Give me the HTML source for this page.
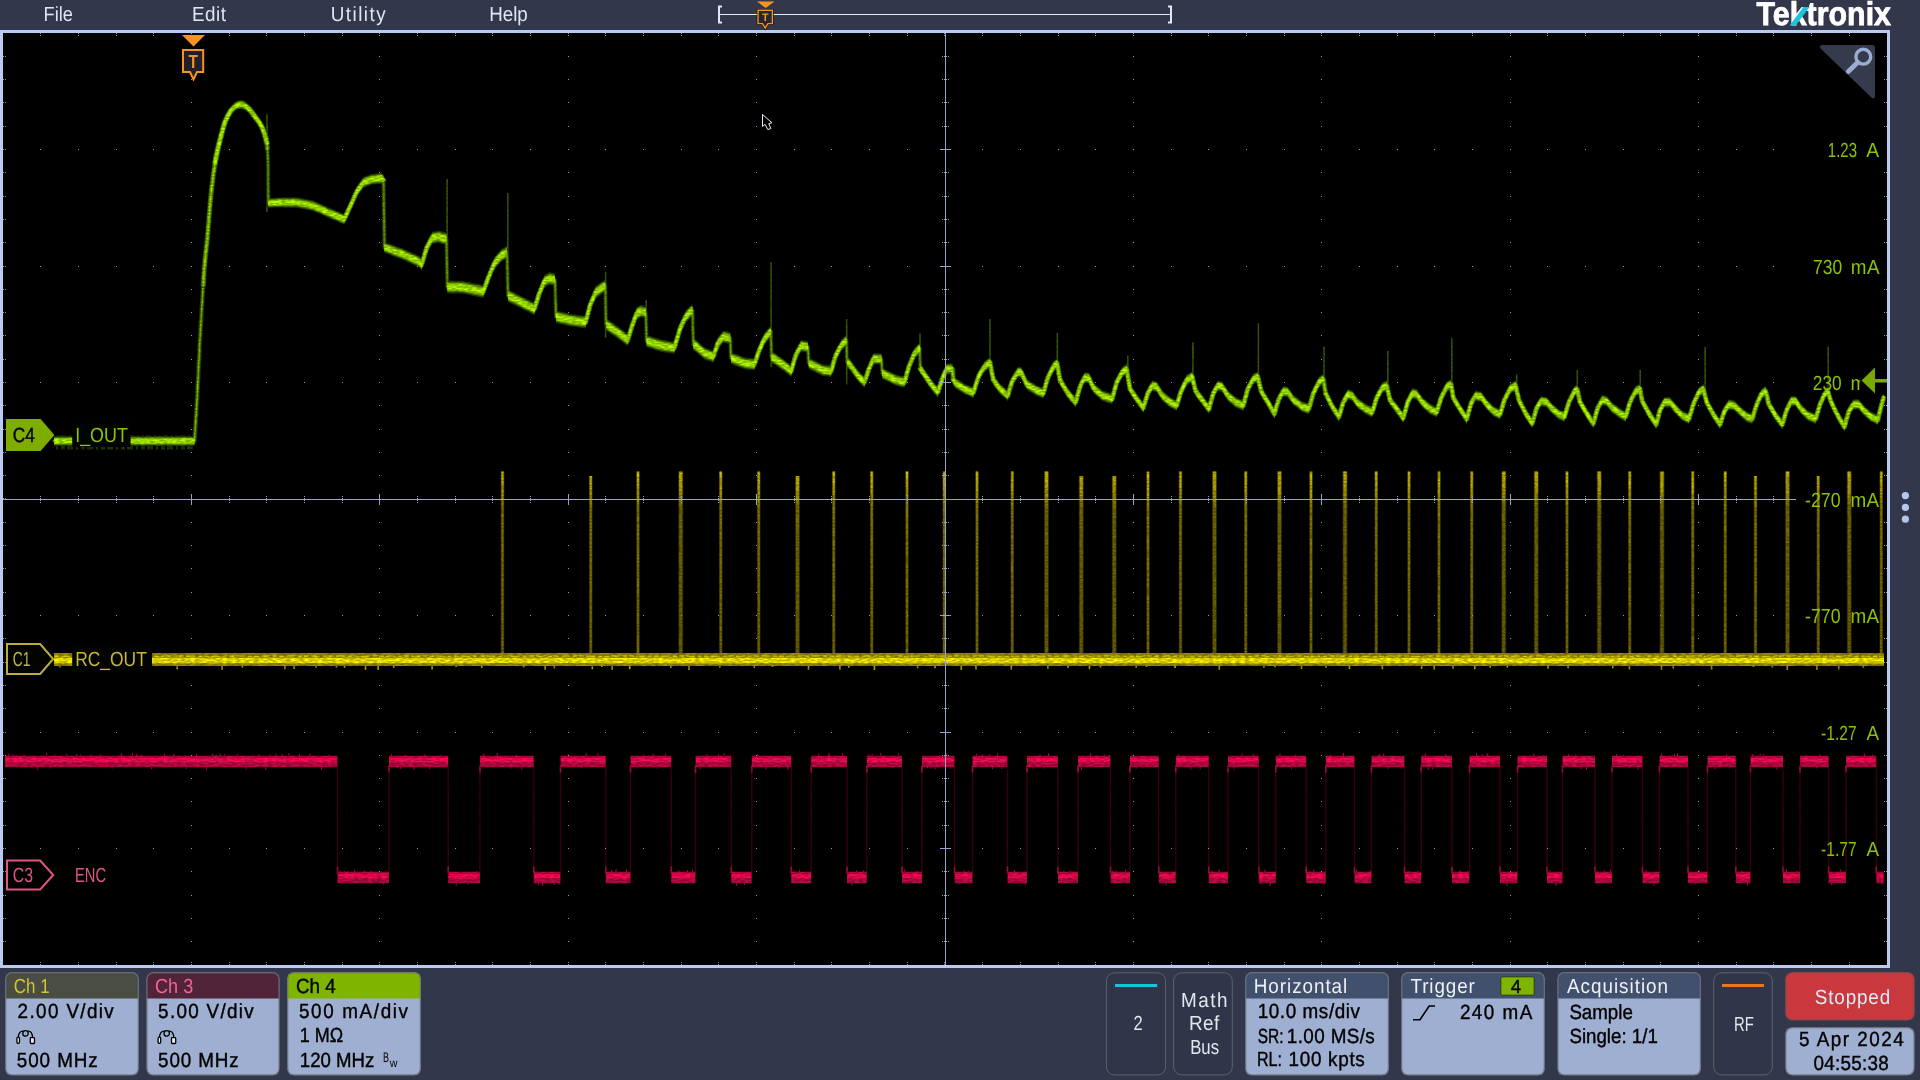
<!DOCTYPE html>
<html lang="en"><head><meta charset="utf-8"><title>Tektronix oscilloscope</title>
<style>html,body{margin:0;padding:0;background:#32374b;overflow:hidden}svg{display:block}svg{will-change:transform;filter:opacity(.9999)}</style>
</head><body>
<svg width="1920" height="1080" viewBox="0 0 1920 1080" font-family="'Liberation Sans', sans-serif" text-rendering="geometricPrecision">
<rect width="1920" height="1080" fill="#32374b"/>
<rect x="0" y="30" width="1890" height="938" fill="#b9cbf1"/>
<rect x="3" y="33" width="1884" height="932" fill="#000"/>
<filter id="nz" x="0" y="30" width="1890" height="940" filterUnits="userSpaceOnUse" color-interpolation-filters="sRGB"><feTurbulence type="fractalNoise" baseFrequency="0.22 0.6" numOctaves="1" seed="11" result="n"/><feColorMatrix in="n" type="matrix" values="0 0 0 0 1  0 0 0 0 1  0 0 0 0 1  3 0 0 0 -1" result="a"/><feComposite in="SourceGraphic" in2="a" operator="arithmetic" k1="0.32" k2="0.78" k3="0" k4="0"/></filter>
<g fill="none" stroke-linejoin="round" stroke-linecap="round" filter="url(#nz)">
<path d="M337.5 765.5V873.5M389.0 765.5V873.5M448.2 765.5V873.5M480.0 765.5V873.5M533.8 765.5V873.5M560.5 765.5V873.5M605.8 765.5V873.5M630.5 765.5V873.5M671.2 765.5V873.5M695.5 765.5V873.5M731.2 765.5V873.5M751.8 765.5V873.5M791.2 765.5V873.5M811.2 765.5V873.5M847.0 765.5V873.5M866.8 765.5V873.5M902.0 765.5V873.5M922.0 765.5V873.5M954.5 765.5V873.5M972.5 765.5V873.5M1007.5 765.5V873.5M1027.0 765.5V873.5M1058.0 765.5V873.5M1078.0 765.5V873.5M1110.5 765.5V873.5M1130.0 765.5V873.5M1158.8 765.5V873.5M1175.8 765.5V873.5M1208.8 765.5V873.5M1228.0 765.5V873.5M1258.8 765.5V873.5M1275.8 765.5V873.5M1306.2 765.5V873.5M1325.8 765.5V873.5M1354.5 765.5V873.5M1371.5 765.5V873.5M1404.5 765.5V873.5M1421.2 765.5V873.5M1452.0 765.5V873.5M1469.5 765.5V873.5M1500.0 765.5V873.5M1517.5 765.5V873.5M1547.0 765.5V873.5M1562.5 765.5V873.5M1595.0 765.5V873.5M1612.0 765.5V873.5M1642.5 765.5V873.5M1659.5 765.5V873.5M1688.0 765.5V873.5M1707.5 765.5V873.5M1735.8 765.5V873.5M1750.5 765.5V873.5M1783.0 765.5V873.5M1800.0 765.5V873.5M1828.6 765.5V873.5M1846.0 765.5V873.5M1876.3 765.5V873.5" stroke="#3a000e" stroke-width="1.4" stroke-linecap="butt"/>
<path d="M8.9 756.5v-2.8M12.7 756.5v-2.2M16.4 756.5v-1.6M24.1 756.5v-1.7M31.8 766.5v1.7M37.3 766.5v3.4M46.6 756.5v-3.5M50.1 766.5v2.1M54.7 756.5v-2.1M66.7 756.5v-2.7M76.7 756.5v-2.6M80.4 756.5v-1.9M90.9 756.5v-2.1M100.3 756.5v-2.1M112.1 766.5v2.0M121.4 756.5v-3.3M132.4 756.5v-3.5M136.7 756.5v-3.0M141.4 756.5v-1.6M151.7 766.5v2.6M164.4 756.5v-2.9M173.9 756.5v-2.4M186.2 766.5v2.4M196.5 756.5v-2.9M206.6 766.5v3.1M212.7 756.5v-2.8M216.0 756.5v-1.8M220.2 756.5v-3.0M224.7 756.5v-2.3M237.3 756.5v-2.4M246.3 766.5v3.1M258.8 756.5v-2.3M265.7 766.5v3.4M270.4 756.5v-2.0M276.0 756.5v-2.7M281.9 756.5v-2.3M288.9 756.5v-3.4M299.5 756.5v-2.7M310.0 756.5v-3.3M321.5 766.5v3.1M328.9 756.5v-1.7M339.9 872.5v-1.9M344.7 872.5v-1.6M347.7 872.5v-1.7M354.7 872.5v-3.2M364.4 872.5v-2.0M371.2 872.5v-1.7M383.6 882.5v2.4M391.5 756.5v-2.2M397.4 766.5v1.8M400.7 766.5v2.6M405.3 756.5v-1.6M414.1 766.5v3.2M424.8 756.5v-2.2M429.6 766.5v2.6M441.2 756.5v-1.9M456.2 882.5v3.1M468.2 882.5v2.0M476.9 872.5v-1.6M483.7 756.5v-2.9M497.2 756.5v-3.4M511.1 766.5v2.2M516.5 756.5v-1.9M521.7 766.5v3.3M538.6 882.5v3.1M542.6 882.5v3.3M554.2 882.5v2.5M559.1 882.5v2.2M568.3 756.5v-2.3M581.7 766.5v1.8M586.1 756.5v-3.3M598.0 756.5v-3.2M611.7 872.5v-2.6M616.1 872.5v-3.4M626.3 872.5v-3.4M637.7 766.5v1.9M643.5 756.5v-2.0M653.0 756.5v-2.3M657.4 766.5v2.2M665.4 756.5v-3.3M678.8 872.5v-2.6M687.5 872.5v-2.4M692.5 872.5v-3.1M700.3 766.5v2.6M706.9 756.5v-2.6M718.6 756.5v-2.6M724.3 756.5v-3.0M736.6 882.5v3.3M744.5 882.5v2.5M757.9 756.5v-2.6M766.2 766.5v2.9M778.8 766.5v2.0M788.0 766.5v3.2M794.0 872.5v-1.6M799.6 872.5v-2.8M818.6 756.5v-2.9M828.9 756.5v-3.3M842.5 756.5v-3.4M851.9 882.5v3.2M856.7 872.5v-2.5M863.4 872.5v-2.1M868.9 756.5v-2.4M872.1 756.5v-2.7M880.7 756.5v-3.5M892.4 766.5v1.7M898.3 756.5v-3.1M904.8 872.5v-3.3M916.8 872.5v-1.8M927.4 766.5v1.7M931.1 766.5v2.4M934.9 766.5v2.8M946.7 756.5v-3.2M950.4 766.5v2.4M959.8 882.5v2.0M964.2 872.5v-2.0M968.4 872.5v-1.6M976.4 756.5v-3.0M982.6 756.5v-1.9M989.4 756.5v-2.0M992.5 766.5v2.6M997.6 756.5v-3.4M1001.8 766.5v2.4M1014.5 872.5v-2.5M1025.1 882.5v2.2M1033.2 766.5v2.3M1040.1 756.5v-1.8M1043.8 766.5v2.0M1048.6 756.5v-3.2M1064.0 872.5v-2.0M1070.2 872.5v-1.8M1081.6 766.5v3.4M1090.6 756.5v-3.4M1097.0 756.5v-1.5M1104.2 756.5v-2.5M1109.4 756.5v-1.5M1113.0 872.5v-1.6M1116.3 872.5v-2.0M1125.7 872.5v-3.0M1136.3 766.5v2.3M1142.9 766.5v1.8M1153.8 766.5v1.6M1166.1 882.5v3.0M1178.6 756.5v-2.5M1190.8 766.5v3.2M1200.2 766.5v2.9M1212.1 872.5v-1.8M1219.1 872.5v-3.2M1233.8 766.5v2.9M1242.1 756.5v-3.1M1253.4 756.5v-2.6M1261.1 882.5v2.0M1265.0 872.5v-3.0M1270.2 882.5v3.5M1280.0 756.5v-2.9M1291.5 766.5v2.8M1295.3 756.5v-2.0M1310.1 872.5v-1.5M1313.7 872.5v-2.8M1324.4 882.5v2.1M1330.5 756.5v-1.7M1343.4 756.5v-3.5M1356.6 872.5v-3.1M1370.3 872.5v-2.0M1379.2 756.5v-2.7M1383.7 756.5v-3.4M1388.2 766.5v2.5M1400.9 766.5v2.0M1409.4 872.5v-1.5M1417.8 872.5v-2.1M1425.3 756.5v-3.2M1428.3 766.5v3.2M1432.7 766.5v2.9M1445.6 756.5v-2.2M1460.0 872.5v-2.2M1467.7 872.5v-1.6M1476.5 756.5v-3.4M1482.3 756.5v-2.5M1487.3 756.5v-3.4M1506.9 882.5v3.3M1522.8 766.5v1.6M1533.9 756.5v-3.0M1543.9 756.5v-1.6M1549.8 872.5v-2.2M1556.0 882.5v3.5M1568.4 756.5v-2.6M1575.8 756.5v-1.8M1581.1 766.5v2.5M1586.5 766.5v3.5M1597.8 872.5v-1.7M1604.6 872.5v-2.0M1610.4 872.5v-3.3M1616.5 756.5v-2.5M1623.6 756.5v-1.6M1629.7 766.5v1.8M1638.2 766.5v3.2M1646.1 872.5v-2.3M1654.0 882.5v3.2M1661.6 756.5v-2.9M1674.5 756.5v-2.7M1677.5 756.5v-3.4M1695.1 882.5v2.0M1699.3 872.5v-2.5M1715.1 766.5v2.8M1726.6 756.5v-2.6M1730.0 766.5v2.0M1741.6 872.5v-1.8M1747.4 882.5v2.9M1752.9 756.5v-2.7M1760.2 756.5v-2.7M1763.3 756.5v-2.4M1776.9 766.5v3.3M1786.4 872.5v-3.4M1797.2 872.5v-1.5M1806.0 756.5v-2.0M1816.4 766.5v2.0M1819.8 756.5v-2.3M1831.8 882.5v3.0M1840.3 872.5v-3.4M1852.9 756.5v-1.9M1864.3 756.5v-3.4M1872.7 756.5v-1.9M1882.3 882.5v1.8" stroke="#b00a40" stroke-width="1" stroke-linecap="butt"/>
<path d="M5.0 761.5H337.5M337.5 877.5H389.0M389.0 761.5H448.2M448.2 877.5H480.0M480.0 761.5H533.8M533.8 877.5H560.5M560.5 761.5H605.8M605.8 877.5H630.5M630.5 761.5H671.2M671.2 877.5H695.5M695.5 761.5H731.2M731.2 877.5H751.8M751.8 761.5H791.2M791.2 877.5H811.2M811.2 761.5H847.0M847.0 877.5H866.8M866.8 761.5H902.0M902.0 877.5H922.0M922.0 761.5H954.5M954.5 877.5H972.5M972.5 761.5H1007.5M1007.5 877.5H1027.0M1027.0 761.5H1058.0M1058.0 877.5H1078.0M1078.0 761.5H1110.5M1110.5 877.5H1130.0M1130.0 761.5H1158.8M1158.8 877.5H1175.8M1175.8 761.5H1208.8M1208.8 877.5H1228.0M1228.0 761.5H1258.8M1258.8 877.5H1275.8M1275.8 761.5H1306.2M1306.2 877.5H1325.8M1325.8 761.5H1354.5M1354.5 877.5H1371.5M1371.5 761.5H1404.5M1404.5 877.5H1421.2M1421.2 761.5H1452.0M1452.0 877.5H1469.5M1469.5 761.5H1500.0M1500.0 877.5H1517.5M1517.5 761.5H1547.0M1547.0 877.5H1562.5M1562.5 761.5H1595.0M1595.0 877.5H1612.0M1612.0 761.5H1642.5M1642.5 877.5H1659.5M1659.5 761.5H1688.0M1688.0 877.5H1707.5M1707.5 761.5H1735.8M1735.8 877.5H1750.5M1750.5 761.5H1783.0M1783.0 877.5H1800.0M1800.0 761.5H1828.6M1828.6 877.5H1846.0M1846.0 761.5H1876.3M1876.3 877.5H1883.7" stroke="#b0093f" stroke-width="11.5" stroke-linecap="butt"/>
<path d="M5.5 760.1H337.0M338.0 876.1H388.5M389.5 760.1H447.8M448.8 876.1H479.5M480.5 760.1H533.2M534.2 876.1H560.0M561.0 760.1H605.2M606.2 876.1H630.0M631.0 760.1H670.8M671.8 876.1H695.0M696.0 760.1H730.8M731.8 876.1H751.2M752.2 760.1H790.8M791.8 876.1H810.8M811.8 760.1H846.5M847.5 876.1H866.2M867.2 760.1H901.5M902.5 876.1H921.5M922.5 760.1H954.0M955.0 876.1H972.0M973.0 760.1H1007.0M1008.0 876.1H1026.5M1027.5 760.1H1057.5M1058.5 876.1H1077.5M1078.5 760.1H1110.0M1111.0 876.1H1129.5M1130.5 760.1H1158.2M1159.2 876.1H1175.2M1176.2 760.1H1208.2M1209.2 876.1H1227.5M1228.5 760.1H1258.2M1259.2 876.1H1275.2M1276.2 760.1H1305.8M1306.8 876.1H1325.2M1326.2 760.1H1354.0M1355.0 876.1H1371.0M1372.0 760.1H1404.0M1405.0 876.1H1420.8M1421.8 760.1H1451.5M1452.5 876.1H1469.0M1470.0 760.1H1499.5M1500.5 876.1H1517.0M1518.0 760.1H1546.5M1547.5 876.1H1562.0M1563.0 760.1H1594.5M1595.5 876.1H1611.5M1612.5 760.1H1642.0M1643.0 876.1H1659.0M1660.0 760.1H1687.5M1688.5 876.1H1707.0M1708.0 760.1H1735.2M1736.2 876.1H1750.0M1751.0 760.1H1782.5M1783.5 876.1H1799.5M1800.5 760.1H1828.1M1829.1 876.1H1845.5M1846.5 760.1H1875.8M1876.8 876.1H1883.2" stroke="#f2064f" stroke-width="4.4" stroke-linecap="butt"/>
<path d="M337.5 866.5V873.5M389.0 765.5V772.5M448.2 866.5V873.5M480.0 765.5V772.5M533.8 866.5V873.5M560.5 765.5V772.5M605.8 866.5V873.5M630.5 765.5V772.5M671.2 866.5V873.5M695.5 765.5V772.5M731.2 866.5V873.5M751.8 765.5V772.5M791.2 866.5V873.5M811.2 765.5V772.5M847.0 866.5V873.5M866.8 765.5V772.5M902.0 866.5V873.5M922.0 765.5V772.5M954.5 866.5V873.5M972.5 765.5V772.5M1007.5 866.5V873.5M1027.0 765.5V772.5M1058.0 866.5V873.5M1078.0 765.5V772.5M1110.5 866.5V873.5M1130.0 765.5V772.5M1158.8 866.5V873.5M1175.8 765.5V772.5M1208.8 866.5V873.5M1228.0 765.5V772.5M1258.8 866.5V873.5M1275.8 765.5V772.5M1306.2 866.5V873.5M1325.8 765.5V772.5M1354.5 866.5V873.5M1371.5 765.5V772.5M1404.5 866.5V873.5M1421.2 765.5V772.5M1452.0 866.5V873.5M1469.5 765.5V772.5M1500.0 866.5V873.5M1517.5 765.5V772.5M1547.0 866.5V873.5M1562.5 765.5V772.5M1595.0 866.5V873.5M1612.0 765.5V772.5M1642.5 866.5V873.5M1659.5 765.5V772.5M1688.0 866.5V873.5M1707.5 765.5V772.5M1735.8 866.5V873.5M1750.5 765.5V772.5M1783.0 866.5V873.5M1800.0 765.5V772.5M1828.6 866.5V873.5M1846.0 765.5V772.5M1876.3 866.5V873.5" stroke="#a00838" stroke-width="1.6" stroke-linecap="butt"/>
<linearGradient id="yg" gradientUnits="userSpaceOnUse" x1="0" y1="471" x2="0" y2="655"><stop offset="0" stop-color="#c4b200"/><stop offset="0.08" stop-color="#b5a300"/><stop offset="0.2" stop-color="#7e7100"/><stop offset="1" stop-color="#6c6100"/></linearGradient>
<linearGradient id="yh" gradientUnits="userSpaceOnUse" x1="0" y1="471" x2="0" y2="655"><stop offset="0" stop-color="#4a4300"/><stop offset="0.2" stop-color="#302b00"/><stop offset="1" stop-color="#2a2600"/></linearGradient>
<linearGradient id="yw" gradientUnits="userSpaceOnUse" x1="0" y1="471" x2="0" y2="655"><stop offset="0" stop-color="#bfae00"/><stop offset="0.1" stop-color="#a89800"/><stop offset="0.2" stop-color="#6e6300"/><stop offset="1" stop-color="#625800"/></linearGradient>
<path d="M502.50 471.5V654M590.75 476.0V654M638.00 471.5V654M720.75 471.5V654M758.75 471.5V654M833.75 471.5V654M871.75 471.5V654M907.00 471.5V654M944.25 471.5V654M977.00 471.5V654M1012.25 471.5V654M1148.00 471.5V654M1180.50 471.5V654M1245.75 471.5V654M1311.00 471.5V654M1376.25 471.5V654M1409.00 471.5V654M1439.00 471.5V654M1471.75 471.5V654M1567.00 471.5V654M1629.75 471.5V654M1692.75 471.5V654M1725.25 471.5V654M1755.50 476.0V654M1818.25 476.0V654M1881.25 471.5V654" stroke="url(#yh)" stroke-width="3.6" stroke-linecap="butt"/>
<path d="M502.50 471.5V654M590.75 476.0V654M638.00 471.5V654M720.75 471.5V654M758.75 471.5V654M833.75 471.5V654M871.75 471.5V654M907.00 471.5V654M944.25 471.5V654M977.00 471.5V654M1012.25 471.5V654M1148.00 471.5V654M1180.50 471.5V654M1245.75 471.5V654M1311.00 471.5V654M1376.25 471.5V654M1409.00 471.5V654M1439.00 471.5V654M1471.75 471.5V654M1567.00 471.5V654M1629.75 471.5V654M1692.75 471.5V654M1725.25 471.5V654M1755.50 476.0V654M1818.25 476.0V654M1881.25 471.5V654" stroke="url(#yg)" stroke-width="2.2" stroke-linecap="butt"/>
<path d="M680.75 471.5V654M797.50 476.0V654M1046.50 471.5V654M1081.25 476.0V654M1114.25 476.0V654M1214.50 471.5V654M1279.50 471.5V654M1345.00 471.5V654M1503.75 471.5V654M1536.25 471.5V654M1599.25 471.5V654M1662.00 471.5V654M1787.50 471.5V654M1849.25 471.5V654" stroke="url(#yh)" stroke-width="4.8" stroke-linecap="butt"/>
<path d="M680.75 471.5V654M797.50 476.0V654M1046.50 471.5V654M1081.25 476.0V654M1114.25 476.0V654M1214.50 471.5V654M1279.50 471.5V654M1345.00 471.5V654M1503.75 471.5V654M1536.25 471.5V654M1599.25 471.5V654M1662.00 471.5V654M1787.50 471.5V654M1849.25 471.5V654" stroke="url(#yw)" stroke-width="3.2" stroke-linecap="butt"/>
<path d="M60.0 665v2.6M104.0 665v2.4M114.0 665v2.2M136.5 665v4.7M177.2 665v4.2M222.1 665v4.8M242.3 665v2.6M284.9 665v4.2M294.1 665v4.0M316.1 665v3.1M336.4 665v2.5M344.5 665v2.8M365.5 665v4.9M378.1 665v4.9M393.7 665v3.1M432.1 665v4.5M456.1 665v2.1M481.7 665v3.1M523.7 665v2.6M545.2 665v4.7M554.3 665v3.2M592.3 665v4.3M601.8 665v2.1M612.1 665v4.8M629.7 665v4.2M670.9 665v3.0M689.0 665v4.9M719.8 665v2.8M754.3 665v2.9M772.5 665v2.0M808.5 665v4.7M839.9 665v4.8M848.8 665v2.7M874.4 665v4.9M917.7 665v3.2M935.0 665v3.3M961.3 665v4.8M976.0 665v4.4M1011.3 665v4.5M1047.9 665v3.8M1068.1 665v3.0M1089.5 665v4.3M1100.4 665v2.6M1136.2 665v2.7M1146.6 665v2.1M1175.1 665v3.0M1219.3 665v4.7M1263.9 665v2.8M1275.0 665v2.3M1301.5 665v4.1M1326.0 665v2.7M1349.4 665v3.9M1382.4 665v4.2M1421.7 665v4.0M1434.2 665v4.5M1453.0 665v3.7M1474.8 665v4.2M1490.2 665v2.7M1507.3 665v2.5M1548.0 665v3.7M1568.1 665v3.2M1612.8 665v3.5M1629.4 665v4.4M1661.5 665v5.0M1673.3 665v3.4M1711.6 665v4.5M1753.5 665v2.1M1772.3 665v2.4M1787.3 665v4.9M1816.9 665v4.8M1838.7 665v4.6M1863.3 665v2.8" stroke="#a89a00" stroke-width="1.6" stroke-linecap="butt"/>
<path d="M54 659.5H1884" stroke="#8f8400" stroke-width="13" stroke-linecap="butt"/>
<path d="M54 660.5H1884" stroke="#ece000" stroke-width="5.6" stroke-linecap="butt"/>
<path d="M54 656.3H1884" stroke="#c9bc00" stroke-width="1.5" stroke-dasharray="5 2 9 3 4 2" stroke-linecap="butt"/>
<path d="M267.0 114.0V212.0M447.1 178.9V290.0M507.8 193.3V298.0M605.6 272.0V337.8M646.2 300.0V343.0M771.1 262.2V366.7M846.7 318.9V384.4M920.0 333.3V372.0M990.0 318.9V366.0M1057.3 332.9V368.0M1127.8 355.6V372.0M1192.9 342.2V380.0M1258.4 323.3V380.0M1324.0 346.7V382.0M1387.8 351.1V388.0M1451.8 337.8V388.0M1516.7 374.4V390.0M1577.3 370.0V392.0M1640.2 370.0V392.0M1705.1 346.7V392.0M1828.2 346.7V394.0" stroke="#3a5800" stroke-width="1.5" stroke-linecap="butt"/>
<path d="M56 436.6H193" stroke="#2f4c00" stroke-width="2.4" stroke-dasharray="3 2 5 3 2 2" stroke-linecap="butt"/>
<path d="M56 447.6H193" stroke="#1f3200" stroke-width="3.6" stroke-dasharray="2 3 4 2 6 3" stroke-linecap="butt"/>
<path d="M54.0 441.0 193.0 441.0 194.5 441.0 197.0 400.0 197.7 386.6 198.4 371.8 199.2 356.1 200.0 340.0 201.0 322.3 202.1 303.3 203.2 285.2 204.2 270.0 205.1 259.3 205.9 251.5 206.7 244.6 207.5 236.7 208.3 227.0 209.1 216.7 209.9 206.4 210.8 196.7 211.8 187.6 212.8 179.0 213.9 170.8 215.0 163.3 216.2 156.7 217.4 150.8 218.7 145.4 220.0 140.0 221.4 134.6 222.7 129.3 224.2 124.4 225.8 120.0 227.6 116.2 229.4 113.0 231.4 110.2 233.3 108.0 235.2 106.4 237.1 105.3 238.9 104.7 240.8 104.5 242.7 104.8 244.6 105.7 246.5 106.9 248.3 108.3 250.0 110.0 251.7 112.1 253.3 114.4 255.0 116.7 256.7 119.0 258.5 121.5 260.2 124.1 261.7 126.7 263.0 129.5 264.1 132.5 265.0 135.5 265.8 138.3 266.4 140.9 266.9 143.3 267.2 145.7 267.5 148.3 268.0 160.0 268.3 203.0 280.0 202.5 296.7 202.5 313.3 205.8 330.0 213.3 344.2 219.2 350.0 206.7 356.7 191.7 363.3 182.5 371.7 179.2 381.7 178.3 383.5 180.0 384.5 247.8 385.6 247.8 403.3 254.4 420.0 262.2 421.5 265.0 426.7 247.8 432.2 237.8 438.9 236.7 446.5 238.9 447.3 287.0 462.0 287.2 483.3 291.5 487.8 278.9 494.4 263.3 501.1 255.6 507.0 252.2 508.0 295.6 523.3 303.3 534.4 308.9 538.9 294.4 544.4 281.1 550.0 278.4 555.0 280.0 556.0 316.7 570.0 320.0 585.6 322.2 590.0 305.6 595.6 292.2 603.3 286.7 605.3 286.0 606.0 324.4 618.9 333.3 627.8 340.0 632.2 325.6 636.7 313.3 641.1 311.1 645.8 312.2 646.6 341.1 661.1 345.6 674.4 347.8 680.0 328.9 685.6 316.7 691.1 311.1 692.5 310.5 693.3 344.4 695.6 345.6 704.4 353.3 713.3 356.7 717.8 343.3 723.3 336.7 728.9 337.8 730.3 338.0 731.0 357.8 733.3 358.9 744.4 363.3 754.4 364.4 758.9 351.1 764.4 338.9 770.0 332.2 770.8 331.5 771.5 357.8 773.3 357.8 784.4 365.6 791.1 371.1 795.6 355.6 801.1 345.6 806.7 346.7 808.0 347.0 808.8 363.3 811.1 364.4 822.2 370.0 831.1 371.1 835.6 355.6 841.1 345.6 845.6 341.1 846.4 340.5 847.0 362.2 848.9 363.3 857.8 375.6 864.4 382.2 868.9 368.9 873.3 358.9 880.0 358.9 881.4 359.0 882.2 373.3 884.4 374.4 895.6 380.0 904.4 382.2 908.9 366.7 914.4 353.3 918.9 348.9 919.7 348.5 920.3 368.9 922.2 371.1 931.1 384.4 937.8 392.2 942.2 378.9 946.7 368.9 951.1 368.9 952.5 369.0 953.3 380.0 955.6 383.3 964.4 388.9 973.3 392.8 978.9 375.6 984.4 366.7 988.9 363.3 990.0 362.5 993.3 380.0 1000.0 388.9 1007.8 395.6 1012.2 381.1 1017.8 372.2 1021.1 372.2 1026.7 384.4 1035.6 390.0 1043.3 393.3 1047.8 377.8 1053.3 366.7 1057.1 363.3 1060.0 380.0 1067.8 393.3 1075.6 402.2 1080.0 386.7 1084.4 377.8 1088.9 377.8 1093.3 387.8 1102.2 395.6 1112.2 398.9 1116.7 382.2 1122.2 372.2 1126.7 368.9 1130.0 388.9 1136.7 398.9 1143.3 407.8 1147.8 393.3 1152.2 385.6 1156.7 386.7 1162.2 395.6 1170.0 402.2 1176.7 405.6 1181.1 391.1 1186.7 380.0 1192.2 376.7 1195.6 391.1 1202.2 400.0 1208.9 408.9 1213.3 393.3 1217.8 385.6 1222.2 386.7 1227.8 395.6 1235.6 402.2 1243.3 405.6 1247.8 388.9 1253.3 378.9 1257.8 376.7 1261.1 391.1 1267.8 402.2 1274.4 413.8 1278.9 398.9 1283.3 391.1 1287.8 392.2 1293.3 400.0 1302.2 406.7 1308.9 408.9 1313.3 393.3 1318.9 382.2 1323.3 378.9 1325.6 393.3 1332.2 406.7 1338.9 416.7 1343.3 402.2 1347.8 394.4 1352.2 395.6 1357.8 403.3 1365.6 408.9 1372.2 412.2 1376.7 397.8 1382.2 387.8 1386.7 385.6 1390.0 400.0 1396.7 408.9 1403.3 417.8 1407.8 402.2 1412.2 393.3 1416.7 394.4 1422.2 402.2 1430.0 408.9 1436.7 412.2 1441.1 397.8 1446.7 386.7 1451.1 384.4 1453.3 397.8 1460.0 408.9 1466.7 418.9 1471.1 403.3 1475.6 395.6 1481.1 396.7 1486.7 404.4 1493.3 411.1 1500.0 414.4 1504.4 400.0 1510.0 388.9 1515.6 385.6 1518.9 400.0 1525.6 413.3 1532.2 423.3 1536.7 407.8 1541.1 401.1 1546.7 402.2 1552.2 408.9 1558.9 414.4 1564.4 416.7 1568.9 402.2 1574.4 391.1 1577.3 389.5 1580.0 402.2 1586.7 413.3 1593.3 423.3 1597.8 407.8 1602.2 400.0 1606.7 401.1 1612.2 407.8 1620.0 413.3 1625.6 416.7 1630.0 402.2 1635.6 391.1 1640.0 388.9 1642.2 401.1 1648.9 413.3 1656.2 424.4 1660.0 410.0 1664.4 402.2 1670.0 402.2 1675.6 408.9 1682.2 415.6 1688.9 418.9 1693.3 404.4 1698.9 392.2 1703.3 388.9 1706.7 402.2 1713.3 414.4 1720.0 424.4 1724.4 411.1 1728.9 404.4 1734.4 405.6 1740.0 411.1 1746.7 416.7 1752.2 418.9 1756.7 404.4 1761.1 394.4 1765.6 391.1 1768.9 404.4 1775.6 415.6 1782.2 424.4 1786.7 410.0 1791.1 401.1 1795.6 401.1 1801.1 408.9 1807.8 415.6 1815.6 418.9 1820.0 404.4 1824.4 394.4 1827.8 391.1 1831.1 402.2 1837.8 415.6 1844.4 426.7 1848.9 411.1 1853.3 404.4 1858.9 404.4 1864.4 411.1 1871.1 416.7 1877.8 420.0 1881.1 406.7 1883.5 397.8" stroke="#1e3000" stroke-width="4.2"/>
<path d="M54.0 435.9 193.0 435.9 194.5 436.2 197.0 395.5 197.7 382.1 198.4 367.3 199.2 351.7 200.0 335.5 201.0 317.9 202.1 298.8 203.2 280.7 204.2 265.5 205.1 254.8 205.9 247.0 206.7 240.1 207.5 232.2 208.3 222.5 209.1 212.2 209.9 201.9 210.8 192.2 211.8 183.1 212.8 174.4 213.9 166.3 215.0 158.8 216.2 152.2 217.4 146.3 218.7 140.8 220.0 135.5 221.4 130.1 222.7 124.8 224.2 119.8 225.8 115.5 227.6 111.7 229.4 108.4 231.4 105.7 233.3 103.5 235.2 101.8 237.1 100.7 238.9 100.1 240.8 99.9 242.7 100.3 244.6 101.1 246.5 102.3 248.3 103.7 250.0 105.5 251.7 107.5 253.3 109.8 255.0 112.1 256.7 114.5 258.5 116.9 260.2 119.5 261.7 122.1 263.0 124.9 264.1 127.9 265.0 130.9 265.8 133.7 266.4 136.3 266.9 138.7 267.2 141.1 267.5 143.7 268.0 155.4 268.3 198.3 280.0 197.4 296.7 197.3 313.3 200.6 330.0 208.0 344.2 213.9 350.0 201.3 356.7 186.3 363.3 177.1 371.7 173.8 381.7 172.9 383.5 174.5 384.5 242.3 385.6 242.3 403.3 248.8 420.0 256.3 421.5 259.1 426.7 241.8 432.2 231.7 438.9 230.5 446.5 232.6 447.3 280.6 462.0 280.8 483.3 285.1 487.8 272.5 494.4 257.0 501.1 249.3 507.0 245.9 508.0 289.3 523.3 297.0 534.4 302.6 538.9 288.1 544.4 274.8 550.0 272.1 555.0 273.7 556.0 310.4 570.0 313.8 585.6 316.0 590.0 299.4 595.6 286.0 603.3 280.5 605.3 279.8 606.0 318.2 618.9 327.1 627.8 333.8 632.2 319.4 636.7 307.1 641.1 304.9 645.8 306.1 646.6 335.0 661.1 339.5 674.4 341.7 680.0 322.8 685.6 310.6 691.1 305.0 692.5 304.4 693.3 338.3 695.6 339.5 704.4 347.2 713.3 350.7 717.8 337.3 723.3 330.7 728.9 331.8 730.3 332.0 731.0 351.8 733.3 352.9 744.4 357.3 754.4 358.5 758.9 345.2 764.4 333.0 770.0 326.3 770.8 325.6 771.5 351.9 773.3 351.9 784.4 359.7 791.1 365.2 795.6 349.8 801.1 339.8 806.7 340.9 808.0 341.2 808.8 357.5 811.1 358.6 822.2 364.2 831.1 365.3 835.6 349.8 841.1 339.9 845.6 335.4 846.4 334.8 847.0 356.5 848.9 357.6 857.8 369.9 864.4 376.5 868.9 363.2 873.3 353.2 880.0 353.3 881.4 353.4 882.2 367.7 884.4 368.8 895.6 374.4 904.4 376.6 908.9 361.1 914.4 347.7 918.9 343.4 919.7 343.0 920.3 363.4 922.2 365.6 931.1 378.9 937.8 386.7 942.2 373.4 946.7 363.4 951.1 363.4 952.5 363.5 953.3 374.5 955.6 377.8 964.4 383.5 973.3 387.4 978.9 370.2 984.4 361.3 988.9 357.9 990.0 357.1 993.3 374.6 1000.0 383.5 1007.8 390.2 1012.2 375.7 1017.8 366.8 1021.1 366.8 1026.7 379.0 1035.6 384.6 1043.3 387.9 1047.8 372.4 1053.3 361.3 1057.1 357.9 1060.0 374.6 1067.8 387.9 1075.6 396.8 1080.0 381.3 1084.4 372.5 1088.9 372.5 1093.3 382.5 1102.2 390.3 1112.2 393.6 1116.7 376.9 1122.2 366.9 1126.7 363.6 1130.0 383.6 1136.7 393.6 1143.3 402.5 1147.8 388.0 1152.2 380.3 1156.7 381.4 1162.2 390.3 1170.0 396.9 1176.7 400.3 1181.1 385.8 1186.7 374.7 1192.2 371.4 1195.6 385.8 1202.2 394.7 1208.9 403.6 1213.3 388.0 1217.8 380.3 1222.2 381.4 1227.8 390.3 1235.6 396.9 1243.3 400.3 1247.8 383.6 1253.3 373.6 1257.8 371.4 1261.1 385.8 1267.8 396.9 1274.4 408.5 1278.9 393.6 1283.3 385.8 1287.8 386.9 1293.3 394.7 1302.2 401.4 1308.9 403.6 1313.3 388.0 1318.9 376.9 1323.3 373.6 1325.6 388.0 1332.2 401.4 1338.9 411.4 1343.3 396.9 1347.8 389.1 1352.2 390.3 1357.8 398.0 1365.6 403.6 1372.2 406.9 1376.7 392.5 1382.2 382.5 1386.7 380.3 1390.0 394.7 1396.7 403.6 1403.3 412.5 1407.8 396.9 1412.2 388.0 1416.7 389.1 1422.2 396.9 1430.0 403.6 1436.7 407.0 1441.1 392.6 1446.7 381.5 1451.1 379.2 1453.3 392.6 1460.0 403.7 1466.7 413.7 1471.1 398.1 1475.6 390.4 1481.1 391.5 1486.7 399.2 1493.3 405.9 1500.0 409.2 1504.4 394.8 1510.0 383.7 1515.6 380.4 1518.9 394.8 1525.6 408.1 1532.2 418.1 1536.7 402.6 1541.1 395.9 1546.7 397.0 1552.2 403.7 1558.9 409.2 1564.4 411.5 1568.9 397.0 1574.4 385.9 1577.3 384.3 1580.0 397.0 1586.7 408.1 1593.3 418.1 1597.8 402.6 1602.2 394.8 1606.7 395.9 1612.2 402.6 1620.0 408.1 1625.6 411.5 1630.0 397.0 1635.6 385.9 1640.0 383.7 1642.2 395.9 1648.9 408.1 1656.2 419.2 1660.0 404.8 1664.4 397.0 1670.0 397.0 1675.6 403.7 1682.2 410.4 1688.9 413.7 1693.3 399.2 1698.9 387.0 1703.3 383.7 1706.7 397.0 1713.3 409.2 1720.0 419.2 1724.4 405.9 1728.9 399.2 1734.4 400.4 1740.0 405.9 1746.7 411.5 1752.2 413.7 1756.7 399.2 1761.1 389.2 1765.6 385.9 1768.9 399.2 1775.6 410.4 1782.2 419.2 1786.7 404.9 1791.1 396.0 1795.6 396.0 1801.1 403.8 1807.8 410.5 1815.6 413.8 1820.0 399.3 1824.4 389.3 1827.8 386.0 1831.1 397.1 1837.8 410.5 1844.4 421.6 1848.9 406.0 1853.3 399.3 1858.9 399.3 1864.4 406.0 1871.1 411.6 1877.8 414.9 1881.1 401.6 1883.5 392.7 1883.5 402.9 1881.1 411.8 1877.8 425.1 1871.1 421.8 1864.4 416.2 1858.9 409.5 1853.3 409.5 1848.9 416.2 1844.4 431.8 1837.8 420.7 1831.1 407.3 1827.8 396.2 1824.4 399.5 1820.0 409.5 1815.6 424.0 1807.8 420.7 1801.1 414.0 1795.6 406.2 1791.1 406.2 1786.7 415.1 1782.2 429.6 1775.6 420.8 1768.9 409.6 1765.6 396.3 1761.1 399.6 1756.7 409.6 1752.2 424.1 1746.7 421.9 1740.0 416.3 1734.4 410.8 1728.9 409.6 1724.4 416.3 1720.0 429.6 1713.3 419.6 1706.7 407.4 1703.3 394.1 1698.9 397.4 1693.3 409.6 1688.9 424.1 1682.2 420.8 1675.6 414.1 1670.0 407.4 1664.4 407.4 1660.0 415.2 1656.2 429.6 1648.9 418.5 1642.2 406.3 1640.0 394.1 1635.6 396.3 1630.0 407.4 1625.6 421.9 1620.0 418.5 1612.2 413.0 1606.7 406.3 1602.2 405.2 1597.8 413.0 1593.3 428.5 1586.7 418.5 1580.0 407.4 1577.3 394.7 1574.4 396.3 1568.9 407.4 1564.4 421.9 1558.9 419.6 1552.2 414.1 1546.7 407.4 1541.1 406.3 1536.7 413.0 1532.2 428.5 1525.6 418.5 1518.9 405.2 1515.6 390.8 1510.0 394.1 1504.4 405.2 1500.0 419.6 1493.3 416.3 1486.7 409.6 1481.1 401.9 1475.6 400.8 1471.1 408.5 1466.7 424.1 1460.0 414.1 1453.3 403.0 1451.1 389.6 1446.7 391.9 1441.1 403.0 1436.7 417.4 1430.0 414.2 1422.2 407.5 1416.7 399.7 1412.2 398.6 1407.8 407.5 1403.3 423.1 1396.7 414.2 1390.0 405.3 1386.7 390.9 1382.2 393.1 1376.7 403.1 1372.2 417.5 1365.6 414.2 1357.8 408.6 1352.2 400.9 1347.8 399.7 1343.3 407.5 1338.9 422.0 1332.2 412.0 1325.6 398.6 1323.3 384.2 1318.9 387.5 1313.3 398.6 1308.9 414.2 1302.2 412.0 1293.3 405.3 1287.8 397.5 1283.3 396.4 1278.9 404.2 1274.4 419.1 1267.8 407.5 1261.1 396.4 1257.8 382.0 1253.3 384.2 1247.8 394.2 1243.3 410.9 1235.6 407.5 1227.8 400.9 1222.2 392.0 1217.8 390.9 1213.3 398.6 1208.9 414.2 1202.2 405.3 1195.6 396.4 1192.2 382.0 1186.7 385.3 1181.1 396.4 1176.7 410.9 1170.0 407.5 1162.2 400.9 1156.7 392.0 1152.2 390.9 1147.8 398.6 1143.3 413.1 1136.7 404.2 1130.0 394.2 1126.7 374.2 1122.2 377.5 1116.7 387.5 1112.2 404.2 1102.2 400.9 1093.3 393.1 1088.9 383.1 1084.4 383.1 1080.0 392.1 1075.6 407.6 1067.8 398.7 1060.0 385.4 1057.1 368.7 1053.3 372.1 1047.8 383.2 1043.3 398.7 1035.6 395.4 1026.7 389.8 1021.1 377.6 1017.8 377.6 1012.2 386.5 1007.8 401.0 1000.0 394.3 993.3 385.4 990.0 367.9 988.9 368.7 984.4 372.1 978.9 381.0 973.3 398.2 964.4 394.3 955.6 388.8 953.3 385.5 952.5 374.5 951.1 374.4 946.7 374.4 942.2 384.4 937.8 397.7 931.1 389.9 922.2 376.6 920.3 374.4 919.7 354.0 918.9 354.4 914.4 358.9 908.9 372.3 904.4 387.8 895.6 385.6 884.4 380.0 882.2 378.9 881.4 364.6 880.0 364.5 873.3 364.6 868.9 374.6 864.4 387.9 857.8 381.3 848.9 369.0 847.0 367.9 846.4 346.2 845.6 346.8 841.1 351.3 835.6 361.4 831.1 376.9 822.2 375.8 811.1 370.2 808.8 369.1 808.0 352.8 806.7 352.5 801.1 351.4 795.6 361.4 791.1 377.0 784.4 371.5 773.3 363.7 771.5 363.7 770.8 337.4 770.0 338.1 764.4 344.8 758.9 357.0 754.4 370.3 744.4 369.3 733.3 364.9 731.0 363.8 730.3 344.0 728.9 343.8 723.3 342.7 717.8 349.3 713.3 362.7 704.4 359.4 695.6 351.7 693.3 350.5 692.5 316.6 691.1 317.2 685.6 322.8 680.0 335.0 674.4 353.9 661.1 351.7 646.6 347.2 645.8 318.3 641.1 317.3 636.7 319.5 632.2 331.8 627.8 346.2 618.9 339.5 606.0 330.6 605.3 292.2 603.3 292.9 595.6 298.4 590.0 311.8 585.6 328.4 570.0 326.2 556.0 323.0 555.0 286.3 550.0 284.7 544.4 287.4 538.9 300.7 534.4 315.2 523.3 309.6 508.0 301.9 507.0 258.5 501.1 261.9 494.4 269.6 487.8 285.3 483.3 297.9 462.0 293.6 447.3 293.4 446.5 245.2 438.9 242.9 432.2 243.9 426.7 253.8 421.5 270.9 420.0 268.1 403.3 260.0 385.6 253.3 384.5 253.3 383.5 185.5 381.7 183.7 371.7 184.6 363.3 187.9 356.7 197.1 350.0 212.1 344.2 224.5 330.0 218.6 313.3 211.0 296.7 207.7 280.0 207.6 268.3 207.7 268.0 164.6 267.5 152.9 267.2 150.3 266.9 147.9 266.4 145.5 265.8 142.9 265.0 140.1 264.1 137.1 263.0 134.1 261.7 131.3 260.2 128.6 258.5 126.1 256.7 123.6 255.0 121.3 253.3 119.0 251.7 116.7 250.0 114.6 248.3 112.9 246.5 111.4 244.6 110.2 242.7 109.4 240.8 109.1 238.9 109.2 237.1 109.8 235.2 110.9 233.3 112.5 231.4 114.8 229.4 117.5 227.6 120.8 225.8 124.5 224.2 128.9 222.7 133.8 221.4 139.1 220.0 144.5 218.7 149.9 217.4 155.3 216.2 161.2 215.0 167.8 213.9 175.3 212.8 183.5 211.8 192.2 210.8 201.2 209.9 210.9 209.1 221.2 208.3 231.5 207.5 241.2 206.7 249.1 205.9 256.0 205.1 263.7 204.2 274.5 203.2 289.6 202.1 307.8 201.0 326.8 200.0 344.5 199.2 360.6 198.4 376.3 197.7 391.1 197.0 404.5 194.5 445.8 193.0 446.1 54.0 446.1Z" fill="#223800" stroke="none"/>
<path d="M54.0 441.0 193.0 441.0 194.5 441.0 197.0 400.0 197.7 386.6 198.4 371.8 199.2 356.1 200.0 340.0 201.0 322.3 202.1 303.3 203.2 285.2 204.2 270.0 205.1 259.3 205.9 251.5 206.7 244.6 207.5 236.7 208.3 227.0 209.1 216.7 209.9 206.4 210.8 196.7 211.8 187.6 212.8 179.0 213.9 170.8 215.0 163.3 216.2 156.7 217.4 150.8 218.7 145.4 220.0 140.0 221.4 134.6 222.7 129.3 224.2 124.4 225.8 120.0 227.6 116.2 229.4 113.0 231.4 110.2 233.3 108.0 235.2 106.4 237.1 105.3 238.9 104.7 240.8 104.5 242.7 104.8 244.6 105.7 246.5 106.9 248.3 108.3 250.0 110.0 251.7 112.1 253.3 114.4 255.0 116.7 256.7 119.0 258.5 121.5 260.2 124.1 261.7 126.7 263.0 129.5 264.1 132.5 265.0 135.5 265.8 138.3 266.4 140.9 266.9 143.3 267.2 145.7 267.5 148.3 268.0 160.0 268.3 203.0 280.0 202.5 296.7 202.5 313.3 205.8 330.0 213.3 344.2 219.2 350.0 206.7 356.7 191.7 363.3 182.5 371.7 179.2 381.7 178.3 383.5 180.0 384.5 247.8 385.6 247.8 403.3 254.4 420.0 262.2 421.5 265.0 426.7 247.8 432.2 237.8 438.9 236.7 446.5 238.9 447.3 287.0 462.0 287.2 483.3 291.5 487.8 278.9 494.4 263.3 501.1 255.6 507.0 252.2 508.0 295.6 523.3 303.3 534.4 308.9 538.9 294.4 544.4 281.1 550.0 278.4 555.0 280.0 556.0 316.7 570.0 320.0 585.6 322.2 590.0 305.6 595.6 292.2 603.3 286.7 605.3 286.0 606.0 324.4 618.9 333.3 627.8 340.0 632.2 325.6 636.7 313.3 641.1 311.1 645.8 312.2 646.6 341.1 661.1 345.6 674.4 347.8 680.0 328.9 685.6 316.7 691.1 311.1 692.5 310.5 693.3 344.4 695.6 345.6 704.4 353.3 713.3 356.7 717.8 343.3 723.3 336.7 728.9 337.8 730.3 338.0 731.0 357.8 733.3 358.9 744.4 363.3 754.4 364.4 758.9 351.1 764.4 338.9 770.0 332.2 770.8 331.5 771.5 357.8 773.3 357.8 784.4 365.6 791.1 371.1 795.6 355.6 801.1 345.6 806.7 346.7 808.0 347.0 808.8 363.3 811.1 364.4 822.2 370.0 831.1 371.1 835.6 355.6 841.1 345.6 845.6 341.1 846.4 340.5 847.0 362.2 848.9 363.3 857.8 375.6 864.4 382.2 868.9 368.9 873.3 358.9 880.0 358.9 881.4 359.0 882.2 373.3 884.4 374.4 895.6 380.0 904.4 382.2 908.9 366.7 914.4 353.3 918.9 348.9 919.7 348.5 920.3 368.9 922.2 371.1 931.1 384.4 937.8 392.2 942.2 378.9 946.7 368.9 951.1 368.9 952.5 369.0 953.3 380.0 955.6 383.3 964.4 388.9 973.3 392.8 978.9 375.6 984.4 366.7 988.9 363.3 990.0 362.5 993.3 380.0 1000.0 388.9 1007.8 395.6 1012.2 381.1 1017.8 372.2 1021.1 372.2 1026.7 384.4 1035.6 390.0 1043.3 393.3 1047.8 377.8 1053.3 366.7 1057.1 363.3 1060.0 380.0 1067.8 393.3 1075.6 402.2 1080.0 386.7 1084.4 377.8 1088.9 377.8 1093.3 387.8 1102.2 395.6 1112.2 398.9 1116.7 382.2 1122.2 372.2 1126.7 368.9 1130.0 388.9 1136.7 398.9 1143.3 407.8 1147.8 393.3 1152.2 385.6 1156.7 386.7 1162.2 395.6 1170.0 402.2 1176.7 405.6 1181.1 391.1 1186.7 380.0 1192.2 376.7 1195.6 391.1 1202.2 400.0 1208.9 408.9 1213.3 393.3 1217.8 385.6 1222.2 386.7 1227.8 395.6 1235.6 402.2 1243.3 405.6 1247.8 388.9 1253.3 378.9 1257.8 376.7 1261.1 391.1 1267.8 402.2 1274.4 413.8 1278.9 398.9 1283.3 391.1 1287.8 392.2 1293.3 400.0 1302.2 406.7 1308.9 408.9 1313.3 393.3 1318.9 382.2 1323.3 378.9 1325.6 393.3 1332.2 406.7 1338.9 416.7 1343.3 402.2 1347.8 394.4 1352.2 395.6 1357.8 403.3 1365.6 408.9 1372.2 412.2 1376.7 397.8 1382.2 387.8 1386.7 385.6 1390.0 400.0 1396.7 408.9 1403.3 417.8 1407.8 402.2 1412.2 393.3 1416.7 394.4 1422.2 402.2 1430.0 408.9 1436.7 412.2 1441.1 397.8 1446.7 386.7 1451.1 384.4 1453.3 397.8 1460.0 408.9 1466.7 418.9 1471.1 403.3 1475.6 395.6 1481.1 396.7 1486.7 404.4 1493.3 411.1 1500.0 414.4 1504.4 400.0 1510.0 388.9 1515.6 385.6 1518.9 400.0 1525.6 413.3 1532.2 423.3 1536.7 407.8 1541.1 401.1 1546.7 402.2 1552.2 408.9 1558.9 414.4 1564.4 416.7 1568.9 402.2 1574.4 391.1 1577.3 389.5 1580.0 402.2 1586.7 413.3 1593.3 423.3 1597.8 407.8 1602.2 400.0 1606.7 401.1 1612.2 407.8 1620.0 413.3 1625.6 416.7 1630.0 402.2 1635.6 391.1 1640.0 388.9 1642.2 401.1 1648.9 413.3 1656.2 424.4 1660.0 410.0 1664.4 402.2 1670.0 402.2 1675.6 408.9 1682.2 415.6 1688.9 418.9 1693.3 404.4 1698.9 392.2 1703.3 388.9 1706.7 402.2 1713.3 414.4 1720.0 424.4 1724.4 411.1 1728.9 404.4 1734.4 405.6 1740.0 411.1 1746.7 416.7 1752.2 418.9 1756.7 404.4 1761.1 394.4 1765.6 391.1 1768.9 404.4 1775.6 415.6 1782.2 424.4 1786.7 410.0 1791.1 401.1 1795.6 401.1 1801.1 408.9 1807.8 415.6 1815.6 418.9 1820.0 404.4 1824.4 394.4 1827.8 391.1 1831.1 402.2 1837.8 415.6 1844.4 426.7 1848.9 411.1 1853.3 404.4 1858.9 404.4 1864.4 411.1 1871.1 416.7 1877.8 420.0 1881.1 406.7 1883.5 397.8" stroke="#4e7c00" stroke-width="2.4"/>
<path d="M54.0 437.0 193.0 437.0 194.5 437.2 197.0 396.5 197.7 383.1 198.4 368.3 199.2 352.6 200.0 336.5 201.0 318.8 202.1 299.8 203.2 281.6 204.2 266.5 205.1 255.7 205.9 248.0 206.7 241.1 207.5 233.2 208.3 223.5 209.1 213.2 209.9 202.9 210.8 193.2 211.8 184.1 212.8 175.4 213.9 167.3 215.0 159.8 216.2 153.2 217.4 147.3 218.7 141.8 220.0 136.5 221.4 131.0 222.7 125.8 224.2 120.8 225.8 116.5 227.6 112.7 229.4 109.4 231.4 106.7 233.3 104.4 235.2 102.8 237.1 101.7 238.9 101.1 240.8 100.9 242.7 101.3 244.6 102.1 246.5 103.3 248.3 104.7 250.0 106.5 251.7 108.5 253.3 110.8 255.0 113.1 256.7 115.5 258.5 117.9 260.2 120.5 261.7 123.1 263.0 125.9 264.1 128.9 265.0 131.9 265.8 134.7 266.4 137.3 266.9 139.7 267.2 142.1 267.5 144.7 268.0 156.4 268.3 199.3 280.0 198.5 296.7 198.4 313.3 201.7 330.0 209.2 344.2 215.0 350.0 202.5 356.7 187.5 363.3 178.3 371.7 175.0 381.7 174.0 383.5 175.7 384.5 243.5 385.6 243.5 403.3 250.1 420.0 257.6 421.5 260.4 426.7 243.1 432.2 233.0 438.9 231.9 446.5 233.9 447.3 282.0 462.0 282.2 483.3 286.5 487.8 273.9 494.4 258.3 501.1 250.7 507.0 247.3 508.0 290.7 523.3 298.4 534.4 304.0 538.9 289.5 544.4 276.2 550.0 273.5 555.0 275.1 556.0 311.8 570.0 315.1 585.6 317.3 590.0 300.7 595.6 287.3 603.3 281.9 605.3 281.2 606.0 319.6 618.9 328.5 627.8 335.2 632.2 320.8 636.7 308.5 641.1 306.3 645.8 307.4 646.6 336.3 661.1 340.8 674.4 343.0 680.0 324.1 685.6 311.9 691.1 306.3 692.5 305.7 693.3 339.6 695.6 340.8 704.4 348.6 713.3 352.0 717.8 338.6 723.3 332.0 728.9 333.1 730.3 333.3 731.0 353.1 733.3 354.2 744.4 358.6 754.4 359.8 758.9 346.5 764.4 334.3 770.0 327.6 770.8 326.9 771.5 353.2 773.3 353.2 784.4 361.0 791.1 366.5 795.6 351.0 801.1 341.0 806.7 342.2 808.0 342.5 808.8 358.8 811.1 359.9 822.2 365.5 831.1 366.6 835.6 351.1 841.1 341.1 845.6 336.6 846.4 336.0 847.0 357.7 848.9 358.8 857.8 371.1 864.4 377.8 868.9 364.5 873.3 354.5 880.0 354.5 881.4 354.6 882.2 368.9 884.4 370.0 895.6 375.6 904.4 377.8 908.9 362.3 914.4 349.0 918.9 344.6 919.7 344.2 920.3 364.6 922.2 366.8 931.1 380.1 937.8 387.9 942.2 374.6 946.7 364.6 951.1 364.6 952.5 364.7 953.3 375.7 955.6 379.0 964.4 384.7 973.3 388.6 978.9 371.4 984.4 362.5 988.9 359.1 990.0 358.3 993.3 375.8 1000.0 384.7 1007.8 391.4 1012.2 376.9 1017.8 368.0 1021.1 368.0 1026.7 380.2 1035.6 385.8 1043.3 389.1 1047.8 373.6 1053.3 362.5 1057.1 359.1 1060.0 375.8 1067.8 389.1 1075.6 398.0 1080.0 382.5 1084.4 373.6 1088.9 373.6 1093.3 383.6 1102.2 391.4 1112.2 394.7 1116.7 378.0 1122.2 368.0 1126.7 364.7 1130.0 384.7 1136.7 394.7 1143.3 403.6 1147.8 389.1 1152.2 381.4 1156.7 382.5 1162.2 391.4 1170.0 398.0 1176.7 401.4 1181.1 386.9 1186.7 375.8 1192.2 372.5 1195.6 386.9 1202.2 395.8 1208.9 404.7 1213.3 389.1 1217.8 381.5 1222.2 382.6 1227.8 391.5 1235.6 398.1 1243.3 401.5 1247.8 384.8 1253.3 374.8 1257.8 372.6 1261.1 387.0 1267.8 398.1 1274.4 409.7 1278.9 394.8 1283.3 387.0 1287.8 388.1 1293.3 395.9 1302.2 402.6 1308.9 404.8 1313.3 389.2 1318.9 378.1 1323.3 374.8 1325.6 389.2 1332.2 402.6 1338.9 412.6 1343.3 398.1 1347.8 390.3 1352.2 391.5 1357.8 399.2 1365.6 404.8 1372.2 408.1 1376.7 393.7 1382.2 383.7 1386.7 381.5 1390.0 395.9 1396.7 404.8 1403.3 413.7 1407.8 398.1 1412.2 389.2 1416.7 390.3 1422.2 398.1 1430.0 404.8 1436.7 408.1 1441.1 393.7 1446.7 382.6 1451.1 380.3 1453.3 393.7 1460.0 404.8 1466.7 414.8 1471.1 399.2 1475.6 391.5 1481.1 392.6 1486.7 400.3 1493.3 407.0 1500.0 410.3 1504.4 395.9 1510.0 384.8 1515.6 381.5 1518.9 395.9 1525.6 409.2 1532.2 419.2 1536.7 403.7 1541.1 397.0 1546.7 398.1 1552.2 404.8 1558.9 410.3 1564.4 412.6 1568.9 398.1 1574.4 387.0 1577.3 385.4 1580.0 398.1 1586.7 409.2 1593.3 419.2 1597.8 403.7 1602.2 395.9 1606.7 397.0 1612.2 403.7 1620.0 409.2 1625.6 412.6 1630.0 398.1 1635.6 387.0 1640.0 384.8 1642.2 397.0 1648.9 409.2 1656.2 420.3 1660.0 405.9 1664.4 398.1 1670.0 398.2 1675.6 404.9 1682.2 411.6 1688.9 414.9 1693.3 400.4 1698.9 388.2 1703.3 384.9 1706.7 398.2 1713.3 410.4 1720.0 420.4 1724.4 407.1 1728.9 400.4 1734.4 401.6 1740.0 407.1 1746.7 412.7 1752.2 414.9 1756.7 400.4 1761.1 390.4 1765.6 387.1 1768.9 400.4 1775.6 411.6 1782.2 420.4 1786.7 406.0 1791.1 397.1 1795.6 397.1 1801.1 404.9 1807.8 411.6 1815.6 414.9 1820.0 400.4 1824.4 390.4 1827.8 387.1 1831.1 398.2 1837.8 411.6 1844.4 422.7 1848.9 407.1 1853.3 400.4 1858.9 400.4 1864.4 407.1 1871.1 412.7 1877.8 416.0 1881.1 402.7 1883.5 393.8 1883.5 401.8 1881.1 410.7 1877.8 424.0 1871.1 420.7 1864.4 415.1 1858.9 408.4 1853.3 408.4 1848.9 415.1 1844.4 430.7 1837.8 419.6 1831.1 406.2 1827.8 395.1 1824.4 398.4 1820.0 408.4 1815.6 422.9 1807.8 419.6 1801.1 412.9 1795.6 405.1 1791.1 405.1 1786.7 414.0 1782.2 428.4 1775.6 419.6 1768.9 408.4 1765.6 395.1 1761.1 398.4 1756.7 408.4 1752.2 422.9 1746.7 420.7 1740.0 415.1 1734.4 409.6 1728.9 408.4 1724.4 415.1 1720.0 428.4 1713.3 418.4 1706.7 406.2 1703.3 392.9 1698.9 396.2 1693.3 408.4 1688.9 422.9 1682.2 419.6 1675.6 412.9 1670.0 406.2 1664.4 406.3 1660.0 414.1 1656.2 428.5 1648.9 417.4 1642.2 405.2 1640.0 393.0 1635.6 395.2 1630.0 406.3 1625.6 420.8 1620.0 417.4 1612.2 411.9 1606.7 405.2 1602.2 404.1 1597.8 411.9 1593.3 427.4 1586.7 417.4 1580.0 406.3 1577.3 393.6 1574.4 395.2 1568.9 406.3 1564.4 420.8 1558.9 418.5 1552.2 413.0 1546.7 406.3 1541.1 405.2 1536.7 411.9 1532.2 427.4 1525.6 417.4 1518.9 404.1 1515.6 389.7 1510.0 393.0 1504.4 404.1 1500.0 418.5 1493.3 415.2 1486.7 408.5 1481.1 400.8 1475.6 399.7 1471.1 407.4 1466.7 423.0 1460.0 413.0 1453.3 401.9 1451.1 388.5 1446.7 390.8 1441.1 401.9 1436.7 416.3 1430.0 413.0 1422.2 406.3 1416.7 398.5 1412.2 397.4 1407.8 406.3 1403.3 421.9 1396.7 413.0 1390.0 404.1 1386.7 389.7 1382.2 391.9 1376.7 401.9 1372.2 416.3 1365.6 413.0 1357.8 407.4 1352.2 399.7 1347.8 398.5 1343.3 406.3 1338.9 420.8 1332.2 410.8 1325.6 397.4 1323.3 383.0 1318.9 386.3 1313.3 397.4 1308.9 413.0 1302.2 410.8 1293.3 404.1 1287.8 396.3 1283.3 395.2 1278.9 403.0 1274.4 417.9 1267.8 406.3 1261.1 395.2 1257.8 380.8 1253.3 383.0 1247.8 393.0 1243.3 409.7 1235.6 406.3 1227.8 399.7 1222.2 390.8 1217.8 389.7 1213.3 397.5 1208.9 413.1 1202.2 404.2 1195.6 395.3 1192.2 380.9 1186.7 384.2 1181.1 395.3 1176.7 409.8 1170.0 406.4 1162.2 399.8 1156.7 390.9 1152.2 389.8 1147.8 397.5 1143.3 412.0 1136.7 403.1 1130.0 393.1 1126.7 373.1 1122.2 376.4 1116.7 386.4 1112.2 403.1 1102.2 399.8 1093.3 392.0 1088.9 382.0 1084.4 382.0 1080.0 390.9 1075.6 406.4 1067.8 397.5 1060.0 384.2 1057.1 367.5 1053.3 370.9 1047.8 382.0 1043.3 397.5 1035.6 394.2 1026.7 388.6 1021.1 376.4 1017.8 376.4 1012.2 385.3 1007.8 399.8 1000.0 393.1 993.3 384.2 990.0 366.7 988.9 367.5 984.4 370.9 978.9 379.8 973.3 397.0 964.4 393.1 955.6 387.6 953.3 384.3 952.5 373.3 951.1 373.2 946.7 373.2 942.2 383.2 937.8 396.5 931.1 388.7 922.2 375.4 920.3 373.2 919.7 352.8 918.9 353.2 914.4 357.6 908.9 371.1 904.4 386.6 895.6 384.4 884.4 378.8 882.2 377.7 881.4 363.4 880.0 363.3 873.3 363.3 868.9 373.3 864.4 386.6 857.8 380.1 848.9 367.8 847.0 366.7 846.4 345.0 845.6 345.6 841.1 350.1 835.6 360.1 831.1 375.6 822.2 374.5 811.1 368.9 808.8 367.8 808.0 351.5 806.7 351.2 801.1 350.2 795.6 360.2 791.1 375.7 784.4 370.2 773.3 362.4 771.5 362.4 770.8 336.1 770.0 336.8 764.4 343.5 758.9 355.7 754.4 369.0 744.4 368.0 733.3 363.6 731.0 362.5 730.3 342.7 728.9 342.5 723.3 341.4 717.8 348.0 713.3 361.4 704.4 358.0 695.6 350.4 693.3 349.2 692.5 315.3 691.1 315.9 685.6 321.5 680.0 333.7 674.4 352.6 661.1 350.4 646.6 345.9 645.8 317.0 641.1 315.9 636.7 318.1 632.2 330.4 627.8 344.8 618.9 338.1 606.0 329.2 605.3 290.8 603.3 291.5 595.6 297.1 590.0 310.5 585.6 327.1 570.0 324.9 556.0 321.6 555.0 284.9 550.0 283.3 544.4 286.0 538.9 299.3 534.4 313.8 523.3 308.2 508.0 300.5 507.0 257.1 501.1 260.5 494.4 268.3 487.8 283.9 483.3 296.5 462.0 292.2 447.3 292.0 446.5 243.9 438.9 241.5 432.2 242.6 426.7 252.5 421.5 269.6 420.0 266.8 403.3 258.7 385.6 252.1 384.5 252.1 383.5 184.3 381.7 182.6 371.7 183.4 363.3 186.7 356.7 195.9 350.0 210.9 344.2 223.4 330.0 217.4 313.3 209.9 296.7 206.6 280.0 206.5 268.3 206.7 268.0 163.6 267.5 151.9 267.2 149.3 266.9 146.9 266.4 144.5 265.8 141.9 265.0 139.1 264.1 136.1 263.0 133.1 261.7 130.3 260.2 127.6 258.5 125.1 256.7 122.6 255.0 120.3 253.3 118.0 251.7 115.7 250.0 113.6 248.3 111.9 246.5 110.4 244.6 109.2 242.7 108.4 240.8 108.1 238.9 108.2 237.1 108.8 235.2 109.9 233.3 111.6 231.4 113.8 229.4 116.5 227.6 119.8 225.8 123.5 224.2 127.9 222.7 132.8 221.4 138.1 220.0 143.5 218.7 148.9 217.4 154.3 216.2 160.2 215.0 166.8 213.9 174.3 212.8 182.5 211.8 191.2 210.8 200.2 209.9 209.9 209.1 220.2 208.3 230.5 207.5 240.2 206.7 248.2 205.9 255.0 205.1 262.8 204.2 273.5 203.2 288.7 202.1 306.8 201.0 325.8 200.0 343.5 199.2 359.7 198.4 375.3 197.7 390.1 197.0 403.5 194.5 444.8 193.0 445.0 54.0 445.0Z" fill="#4f7e00" stroke="none"/>
<path d="M194.5 441.0L197.0 400.0M197.0 400.0L197.7 386.6M197.7 386.6L198.4 371.8M198.4 371.8L199.2 356.1M199.2 356.1L200.0 340.0M200.0 340.0L201.0 322.3M201.0 322.3L202.1 303.3M202.1 303.3L203.2 285.2" stroke="#1c2e00" stroke-width="4.6"/>
<path d="M194.5 441.0L197.0 400.0M197.0 400.0L197.7 386.6M197.7 386.6L198.4 371.8M198.4 371.8L199.2 356.1M199.2 356.1L200.0 340.0M200.0 340.0L201.0 322.3M201.0 322.3L202.1 303.3M202.1 303.3L203.2 285.2" stroke="#456e00" stroke-width="3"/>
<path d="M194.5 441.0L197.0 400.0M197.0 400.0L197.7 386.6M197.7 386.6L198.4 371.8M198.4 371.8L199.2 356.1M199.2 356.1L200.0 340.0M200.0 340.0L201.0 322.3M201.0 322.3L202.1 303.3M202.1 303.3L203.2 285.2" stroke="#5f9600" stroke-width="1.4"/>
<path d="M203.2 285.2L204.2 270.0M204.2 270.0L205.1 259.3M205.1 259.3L205.9 251.5M205.9 251.5L206.7 244.6M206.7 244.6L207.5 236.7M207.5 236.7L208.3 227.0M208.3 227.0L209.1 216.7M209.1 216.7L209.9 206.4M209.9 206.4L210.8 196.7M210.8 196.7L211.8 187.6M211.8 187.6L212.8 179.0M212.8 179.0L213.9 170.8M213.9 170.8L215.0 163.3M266.9 143.3L267.2 145.7M267.2 145.7L267.5 148.3M952.5 369.0L953.3 380.0M1323.3 378.9L1325.6 393.3" stroke="#263e00" stroke-width="5.4"/>
<path d="M203.2 285.2L204.2 270.0M204.2 270.0L205.1 259.3M205.1 259.3L205.9 251.5M205.9 251.5L206.7 244.6M206.7 244.6L207.5 236.7M207.5 236.7L208.3 227.0M208.3 227.0L209.1 216.7M209.1 216.7L209.9 206.4M209.9 206.4L210.8 196.7M210.8 196.7L211.8 187.6M211.8 187.6L212.8 179.0M212.8 179.0L213.9 170.8M213.9 170.8L215.0 163.3M266.9 143.3L267.2 145.7M267.2 145.7L267.5 148.3M952.5 369.0L953.3 380.0M1323.3 378.9L1325.6 393.3" stroke="#5f9600" stroke-width="3.8"/>
<path d="M203.2 285.2L204.2 270.0M204.2 270.0L205.1 259.3M205.1 259.3L205.9 251.5M205.9 251.5L206.7 244.6M206.7 244.6L207.5 236.7M207.5 236.7L208.3 227.0M208.3 227.0L209.1 216.7M209.1 216.7L209.9 206.4M209.9 206.4L210.8 196.7M210.8 196.7L211.8 187.6M211.8 187.6L212.8 179.0M212.8 179.0L213.9 170.8M213.9 170.8L215.0 163.3M266.9 143.3L267.2 145.7M267.2 145.7L267.5 148.3M952.5 369.0L953.3 380.0M1323.3 378.9L1325.6 393.3" stroke="#80bc00" stroke-width="1.8"/>
<path d="M215.0 163.3L216.2 156.7M216.2 156.7L217.4 150.8M217.4 150.8L218.7 145.4M218.7 145.4L220.0 140.0M220.0 140.0L221.4 134.6M221.4 134.6L222.7 129.3M222.7 129.3L224.2 124.4M224.2 124.4L225.8 120.0M225.8 120.0L227.6 116.2M227.6 116.2L229.4 113.0M229.4 113.0L231.4 110.2M231.4 110.2L233.3 108.0M248.3 108.3L250.0 110.0M250.0 110.0L251.7 112.1M251.7 112.1L253.3 114.4M253.3 114.4L255.0 116.7M255.0 116.7L256.7 119.0M256.7 119.0L258.5 121.5M258.5 121.5L260.2 124.1M260.2 124.1L261.7 126.7M261.7 126.7L263.0 129.5M263.0 129.5L264.1 132.5M264.1 132.5L265.0 135.5M265.0 135.5L265.8 138.3M265.8 138.3L266.4 140.9M266.4 140.9L266.9 143.3M344.2 219.2L350.0 206.7M350.0 206.7L356.7 191.7M356.7 191.7L363.3 182.5M381.7 178.3L383.5 180.0M420.0 262.2L421.5 265.0M421.5 265.0L426.7 247.8M426.7 247.8L432.2 237.8M483.3 291.5L487.8 278.9M487.8 278.9L494.4 263.3M494.4 263.3L501.1 255.6M534.4 308.9L538.9 294.4M538.9 294.4L544.4 281.1M585.6 322.2L590.0 305.6M590.0 305.6L595.6 292.2M627.8 340.0L632.2 325.6M632.2 325.6L636.7 313.3M674.4 347.8L680.0 328.9M680.0 328.9L685.6 316.7M685.6 316.7L691.1 311.1M713.3 356.7L717.8 343.3M717.8 343.3L723.3 336.7M754.4 364.4L758.9 351.1M758.9 351.1L764.4 338.9M764.4 338.9L770.0 332.2M791.1 371.1L795.6 355.6M795.6 355.6L801.1 345.6M831.1 371.1L835.6 355.6M835.6 355.6L841.1 345.6M841.1 345.6L845.6 341.1M848.9 363.3L857.8 375.6M857.8 375.6L864.4 382.2M864.4 382.2L868.9 368.9M868.9 368.9L873.3 358.9M904.4 382.2L908.9 366.7M908.9 366.7L914.4 353.3M914.4 353.3L918.9 348.9M920.3 368.9L922.2 371.1M922.2 371.1L931.1 384.4M931.1 384.4L937.8 392.2M937.8 392.2L942.2 378.9M942.2 378.9L946.7 368.9M953.3 380.0L955.6 383.3M973.3 392.8L978.9 375.6M978.9 375.6L984.4 366.7M990.0 362.5L993.3 380.0M993.3 380.0L1000.0 388.9M1007.8 395.6L1012.2 381.1M1012.2 381.1L1017.8 372.2M1021.1 372.2L1026.7 384.4M1043.3 393.3L1047.8 377.8M1047.8 377.8L1053.3 366.7M1053.3 366.7L1057.1 363.3M1057.1 363.3L1060.0 380.0M1060.0 380.0L1067.8 393.3M1067.8 393.3L1075.6 402.2M1075.6 402.2L1080.0 386.7M1080.0 386.7L1084.4 377.8M1088.9 377.8L1093.3 387.8M1112.2 398.9L1116.7 382.2M1116.7 382.2L1122.2 372.2M1126.7 368.9L1130.0 388.9M1130.0 388.9L1136.7 398.9M1136.7 398.9L1143.3 407.8M1143.3 407.8L1147.8 393.3M1147.8 393.3L1152.2 385.6M1156.7 386.7L1162.2 395.6M1176.7 405.6L1181.1 391.1M1181.1 391.1L1186.7 380.0M1192.2 376.7L1195.6 391.1M1195.6 391.1L1202.2 400.0M1202.2 400.0L1208.9 408.9M1208.9 408.9L1213.3 393.3M1213.3 393.3L1217.8 385.6M1222.2 386.7L1227.8 395.6M1243.3 405.6L1247.8 388.9M1247.8 388.9L1253.3 378.9M1257.8 376.7L1261.1 391.1M1261.1 391.1L1267.8 402.2M1267.8 402.2L1274.4 413.8M1274.4 413.8L1278.9 398.9M1278.9 398.9L1283.3 391.1M1287.8 392.2L1293.3 400.0M1308.9 408.9L1313.3 393.3M1313.3 393.3L1318.9 382.2M1325.6 393.3L1332.2 406.7M1332.2 406.7L1338.9 416.7M1338.9 416.7L1343.3 402.2M1343.3 402.2L1347.8 394.4M1352.2 395.6L1357.8 403.3M1372.2 412.2L1376.7 397.8M1376.7 397.8L1382.2 387.8M1386.7 385.6L1390.0 400.0M1390.0 400.0L1396.7 408.9M1396.7 408.9L1403.3 417.8M1403.3 417.8L1407.8 402.2M1407.8 402.2L1412.2 393.3M1416.7 394.4L1422.2 402.2M1436.7 412.2L1441.1 397.8M1441.1 397.8L1446.7 386.7M1451.1 384.4L1453.3 397.8M1453.3 397.8L1460.0 408.9M1460.0 408.9L1466.7 418.9M1466.7 418.9L1471.1 403.3M1471.1 403.3L1475.6 395.6M1481.1 396.7L1486.7 404.4M1486.7 404.4L1493.3 411.1M1500.0 414.4L1504.4 400.0M1504.4 400.0L1510.0 388.9M1515.6 385.6L1518.9 400.0M1518.9 400.0L1525.6 413.3M1525.6 413.3L1532.2 423.3M1532.2 423.3L1536.7 407.8M1536.7 407.8L1541.1 401.1M1546.7 402.2L1552.2 408.9M1564.4 416.7L1568.9 402.2M1568.9 402.2L1574.4 391.1M1577.3 389.5L1580.0 402.2M1580.0 402.2L1586.7 413.3M1586.7 413.3L1593.3 423.3M1593.3 423.3L1597.8 407.8M1597.8 407.8L1602.2 400.0M1606.7 401.1L1612.2 407.8M1625.6 416.7L1630.0 402.2M1630.0 402.2L1635.6 391.1M1640.0 388.9L1642.2 401.1M1642.2 401.1L1648.9 413.3M1648.9 413.3L1656.2 424.4M1656.2 424.4L1660.0 410.0M1660.0 410.0L1664.4 402.2M1670.0 402.2L1675.6 408.9M1675.6 408.9L1682.2 415.6M1688.9 418.9L1693.3 404.4M1693.3 404.4L1698.9 392.2M1703.3 388.9L1706.7 402.2M1706.7 402.2L1713.3 414.4M1713.3 414.4L1720.0 424.4M1720.0 424.4L1724.4 411.1M1724.4 411.1L1728.9 404.4M1734.4 405.6L1740.0 411.1M1752.2 418.9L1756.7 404.4M1756.7 404.4L1761.1 394.4M1765.6 391.1L1768.9 404.4M1768.9 404.4L1775.6 415.6M1775.6 415.6L1782.2 424.4M1782.2 424.4L1786.7 410.0M1786.7 410.0L1791.1 401.1M1795.6 401.1L1801.1 408.9M1801.1 408.9L1807.8 415.6M1815.6 418.9L1820.0 404.4M1820.0 404.4L1824.4 394.4M1824.4 394.4L1827.8 391.1M1827.8 391.1L1831.1 402.2M1831.1 402.2L1837.8 415.6M1837.8 415.6L1844.4 426.7M1844.4 426.7L1848.9 411.1M1848.9 411.1L1853.3 404.4M1858.9 404.4L1864.4 411.1M1877.8 420.0L1881.1 406.7M1881.1 406.7L1883.5 397.8" stroke="#4f7e00" stroke-width="5"/>
<path d="M215.0 163.3L216.2 156.7M216.2 156.7L217.4 150.8M217.4 150.8L218.7 145.4M218.7 145.4L220.0 140.0M220.0 140.0L221.4 134.6M221.4 134.6L222.7 129.3M222.7 129.3L224.2 124.4M224.2 124.4L225.8 120.0M225.8 120.0L227.6 116.2M227.6 116.2L229.4 113.0M229.4 113.0L231.4 110.2M231.4 110.2L233.3 108.0M233.3 108.0L235.2 106.4M235.2 106.4L237.1 105.3M237.1 105.3L238.9 104.7M238.9 104.7L240.8 104.5M240.8 104.5L242.7 104.8M242.7 104.8L244.6 105.7M244.6 105.7L246.5 106.9M246.5 106.9L248.3 108.3M248.3 108.3L250.0 110.0M250.0 110.0L251.7 112.1M251.7 112.1L253.3 114.4M253.3 114.4L255.0 116.7M255.0 116.7L256.7 119.0M256.7 119.0L258.5 121.5M258.5 121.5L260.2 124.1M260.2 124.1L261.7 126.7M261.7 126.7L263.0 129.5M263.0 129.5L264.1 132.5M264.1 132.5L265.0 135.5M265.0 135.5L265.8 138.3M265.8 138.3L266.4 140.9M266.4 140.9L266.9 143.3" stroke="#2a4400" stroke-width="6"/>
<path d="M215.0 163.3L216.2 156.7M216.2 156.7L217.4 150.8M217.4 150.8L218.7 145.4M218.7 145.4L220.0 140.0M220.0 140.0L221.4 134.6M221.4 134.6L222.7 129.3M222.7 129.3L224.2 124.4M224.2 124.4L225.8 120.0M225.8 120.0L227.6 116.2M227.6 116.2L229.4 113.0M229.4 113.0L231.4 110.2M231.4 110.2L233.3 108.0M233.3 108.0L235.2 106.4M235.2 106.4L237.1 105.3M237.1 105.3L238.9 104.7M238.9 104.7L240.8 104.5M240.8 104.5L242.7 104.8M242.7 104.8L244.6 105.7M244.6 105.7L246.5 106.9M246.5 106.9L248.3 108.3M248.3 108.3L250.0 110.0M250.0 110.0L251.7 112.1M251.7 112.1L253.3 114.4M253.3 114.4L255.0 116.7M255.0 116.7L256.7 119.0M256.7 119.0L258.5 121.5M258.5 121.5L260.2 124.1M260.2 124.1L261.7 126.7M261.7 126.7L263.0 129.5M263.0 129.5L264.1 132.5M264.1 132.5L265.0 135.5M265.0 135.5L265.8 138.3M265.8 138.3L266.4 140.9M266.4 140.9L266.9 143.3" stroke="#5a8e00" stroke-width="4.8"/>
<path d="M54.0 438.0 193.0 438.0 194.5 438.1 197.0 397.3 197.7 383.9 198.4 369.1 199.2 353.5 200.0 337.3 201.0 319.7 202.1 300.7 203.2 282.5 204.2 267.3 205.1 256.6 205.9 248.8 206.7 242.0 207.5 234.0 208.3 224.3 209.1 214.0 209.9 203.7 210.8 194.0 211.8 185.0 212.8 176.3 213.9 168.1 215.0 160.6 216.2 154.0 217.4 148.1 218.7 142.7 220.0 137.3 221.4 131.9 222.7 126.6 224.2 121.7 225.8 117.3 227.6 113.5 229.4 110.3 231.4 107.5 233.3 105.3 235.2 103.7 237.1 102.6 238.9 102.0 240.8 101.8 242.7 102.1 244.6 102.9 246.5 104.1 248.3 105.6 250.0 107.3 251.7 109.4 253.3 111.7 255.0 114.0 256.7 116.3 258.5 118.8 260.2 121.3 261.7 124.0 263.0 126.8 264.1 129.8 265.0 132.7 265.8 135.6 266.4 138.1 266.9 140.6 267.2 143.0 267.5 145.6 268.0 157.3 268.3 200.2 280.0 199.4 296.7 199.4 313.3 202.7 330.0 210.2 344.2 216.0 350.0 203.5 356.7 188.5 363.3 179.3 371.7 176.0 381.7 175.1 383.5 176.8 384.5 244.6 385.6 244.6 403.3 251.1 420.0 258.7 421.5 261.5 426.7 244.2 432.2 234.2 438.9 233.0 446.5 235.1 447.3 283.2 462.0 283.4 483.3 287.7 487.8 275.1 494.4 259.5 501.1 251.8 507.0 248.4 508.0 291.8 523.3 299.6 534.4 305.2 538.9 290.7 544.4 277.4 550.0 274.7 555.0 276.3 556.0 313.0 570.0 316.3 585.6 318.5 590.0 301.9 595.6 288.5 603.3 283.0 605.3 282.3 606.0 320.7 618.9 329.6 627.8 336.3 632.2 321.9 636.7 309.6 641.1 307.4 645.8 308.5 646.6 337.4 661.1 342.0 674.4 344.2 680.0 325.3 685.6 313.1 691.1 307.5 692.5 306.9 693.3 340.8 695.6 342.0 704.4 349.7 713.3 353.1 717.8 339.7 723.3 333.1 728.9 334.2 730.3 334.4 731.0 354.2 733.3 355.3 744.4 359.8 754.4 360.9 758.9 347.6 764.4 335.4 770.0 328.7 770.8 328.0 771.5 354.3 773.3 354.3 784.4 362.1 791.1 367.6 795.6 352.1 801.1 342.1 806.7 343.2 808.0 343.5 808.8 359.8 811.1 361.0 822.2 366.6 831.1 367.7 835.6 352.2 841.1 342.2 845.6 337.7 846.4 337.1 847.0 358.8 848.9 359.9 857.8 372.2 864.4 378.8 868.9 365.5 873.3 355.5 880.0 355.5 881.4 355.7 882.2 370.0 884.4 371.1 895.6 376.7 904.4 378.9 908.9 363.4 914.4 350.0 918.9 345.6 919.7 345.2 920.3 365.6 922.2 367.8 931.1 381.1 937.8 388.9 942.2 375.6 946.7 365.6 951.1 365.7 952.5 365.8 953.3 376.8 955.6 380.1 964.4 385.7 973.3 389.6 978.9 372.4 984.4 363.5 988.9 360.1 990.0 359.3 993.3 376.8 1000.0 385.7 1007.8 392.4 1012.2 377.9 1017.8 369.0 1021.1 369.0 1026.7 381.2 1035.6 386.8 1043.3 390.1 1047.8 374.6 1053.3 363.5 1057.1 360.1 1060.0 376.8 1067.8 390.1 1075.6 399.0 1080.0 383.5 1084.4 374.6 1088.9 374.6 1093.3 384.6 1102.2 392.4 1112.2 395.7 1116.7 379.0 1122.2 369.0 1126.7 365.7 1130.0 385.7 1136.7 395.7 1143.3 404.6 1147.8 390.1 1152.2 382.4 1156.7 383.5 1162.2 392.4 1170.0 399.0 1176.7 402.4 1181.1 387.9 1186.7 376.8 1192.2 373.5 1195.6 387.9 1202.2 396.8 1208.9 405.7 1213.3 390.1 1217.8 382.4 1222.2 383.5 1227.8 392.4 1235.6 399.0 1243.3 402.5 1247.8 385.8 1253.3 375.8 1257.8 373.6 1261.1 388.0 1267.8 399.1 1274.4 410.7 1278.9 395.8 1283.3 388.0 1287.8 389.1 1293.3 396.9 1302.2 403.6 1308.9 405.8 1313.3 390.2 1318.9 379.1 1323.3 375.8 1325.6 390.2 1332.2 403.6 1338.9 413.6 1343.3 399.1 1347.8 391.3 1352.2 392.5 1357.8 400.2 1365.6 405.8 1372.2 409.1 1376.7 394.7 1382.2 384.7 1386.7 382.5 1390.0 396.9 1396.7 405.8 1403.3 414.7 1407.8 399.1 1412.2 390.2 1416.7 391.3 1422.2 399.1 1430.0 405.8 1436.7 409.1 1441.1 394.7 1446.7 383.6 1451.1 381.3 1453.3 394.7 1460.0 405.8 1466.7 415.8 1471.1 400.2 1475.6 392.5 1481.1 393.6 1486.7 401.3 1493.3 408.0 1500.0 411.3 1504.4 396.9 1510.0 385.8 1515.6 382.5 1518.9 396.9 1525.6 410.2 1532.2 420.2 1536.7 404.7 1541.1 398.0 1546.7 399.1 1552.2 405.8 1558.9 411.3 1564.4 413.6 1568.9 399.1 1574.4 388.0 1577.3 386.4 1580.0 399.1 1586.7 410.2 1593.3 420.2 1597.8 404.7 1602.2 396.9 1606.7 398.0 1612.2 404.7 1620.0 410.2 1625.6 413.6 1630.0 399.1 1635.6 388.0 1640.0 385.8 1642.2 398.0 1648.9 410.2 1656.2 421.3 1660.0 406.9 1664.4 399.1 1670.0 399.1 1675.6 405.8 1682.2 412.5 1688.9 415.8 1693.3 401.3 1698.9 389.1 1703.3 385.8 1706.7 399.1 1713.3 411.3 1720.0 421.3 1724.4 408.0 1728.9 401.3 1734.4 402.5 1740.0 408.0 1746.7 413.6 1752.2 415.8 1756.7 401.3 1761.1 391.3 1765.6 388.0 1768.9 401.3 1775.6 412.5 1782.2 421.3 1786.7 406.9 1791.1 398.0 1795.6 398.0 1801.1 405.8 1807.8 412.5 1815.6 415.8 1820.0 401.3 1824.4 391.3 1827.8 388.0 1831.1 399.2 1837.8 412.6 1844.4 423.7 1848.9 408.1 1853.3 401.4 1858.9 401.4 1864.4 408.1 1871.1 413.7 1877.8 417.0 1881.1 403.7 1883.5 394.8 1883.5 400.8 1881.1 409.7 1877.8 423.0 1871.1 419.7 1864.4 414.1 1858.9 407.4 1853.3 407.4 1848.9 414.1 1844.4 429.7 1837.8 418.6 1831.1 405.2 1827.8 394.2 1824.4 397.5 1820.0 407.5 1815.6 422.0 1807.8 418.7 1801.1 412.0 1795.6 404.2 1791.1 404.2 1786.7 413.1 1782.2 427.5 1775.6 418.7 1768.9 407.5 1765.6 394.2 1761.1 397.5 1756.7 407.5 1752.2 422.0 1746.7 419.8 1740.0 414.2 1734.4 408.7 1728.9 407.5 1724.4 414.2 1720.0 427.5 1713.3 417.5 1706.7 405.3 1703.3 392.0 1698.9 395.3 1693.3 407.5 1688.9 422.0 1682.2 418.7 1675.6 412.0 1670.0 405.3 1664.4 405.3 1660.0 413.1 1656.2 427.5 1648.9 416.4 1642.2 404.2 1640.0 392.0 1635.6 394.2 1630.0 405.3 1625.6 419.8 1620.0 416.4 1612.2 410.9 1606.7 404.2 1602.2 403.1 1597.8 410.9 1593.3 426.4 1586.7 416.4 1580.0 405.3 1577.3 392.6 1574.4 394.2 1568.9 405.3 1564.4 419.8 1558.9 417.5 1552.2 412.0 1546.7 405.3 1541.1 404.2 1536.7 410.9 1532.2 426.4 1525.6 416.4 1518.9 403.1 1515.6 388.7 1510.0 392.0 1504.4 403.1 1500.0 417.5 1493.3 414.2 1486.7 407.5 1481.1 399.8 1475.6 398.7 1471.1 406.4 1466.7 422.0 1460.0 412.0 1453.3 400.9 1451.1 387.5 1446.7 389.8 1441.1 400.9 1436.7 415.3 1430.0 412.0 1422.2 405.3 1416.7 397.5 1412.2 396.4 1407.8 405.3 1403.3 420.9 1396.7 412.0 1390.0 403.1 1386.7 388.7 1382.2 390.9 1376.7 400.9 1372.2 415.3 1365.6 412.0 1357.8 406.4 1352.2 398.7 1347.8 397.5 1343.3 405.3 1338.9 419.8 1332.2 409.8 1325.6 396.4 1323.3 382.0 1318.9 385.3 1313.3 396.4 1308.9 412.0 1302.2 409.8 1293.3 403.1 1287.8 395.3 1283.3 394.2 1278.9 402.0 1274.4 416.9 1267.8 405.3 1261.1 394.2 1257.8 379.8 1253.3 382.0 1247.8 392.0 1243.3 408.7 1235.6 405.4 1227.8 398.8 1222.2 389.9 1217.8 388.8 1213.3 396.5 1208.9 412.1 1202.2 403.2 1195.6 394.3 1192.2 379.9 1186.7 383.2 1181.1 394.3 1176.7 408.8 1170.0 405.4 1162.2 398.8 1156.7 389.9 1152.2 388.8 1147.8 396.5 1143.3 411.0 1136.7 402.1 1130.0 392.1 1126.7 372.1 1122.2 375.4 1116.7 385.4 1112.2 402.1 1102.2 398.8 1093.3 391.0 1088.9 381.0 1084.4 381.0 1080.0 389.9 1075.6 405.4 1067.8 396.5 1060.0 383.2 1057.1 366.5 1053.3 369.9 1047.8 381.0 1043.3 396.5 1035.6 393.2 1026.7 387.6 1021.1 375.4 1017.8 375.4 1012.2 384.3 1007.8 398.8 1000.0 392.1 993.3 383.2 990.0 365.7 988.9 366.5 984.4 369.9 978.9 378.8 973.3 396.0 964.4 392.1 955.6 386.5 953.3 383.2 952.5 372.2 951.1 372.1 946.7 372.2 942.2 382.2 937.8 395.5 931.1 387.7 922.2 374.4 920.3 372.2 919.7 351.8 918.9 352.2 914.4 356.6 908.9 370.0 904.4 385.5 895.6 383.3 884.4 377.7 882.2 376.6 881.4 362.3 880.0 362.3 873.3 362.3 868.9 372.3 864.4 385.6 857.8 379.0 848.9 366.7 847.0 365.6 846.4 343.9 845.6 344.5 841.1 349.0 835.6 359.0 831.1 374.5 822.2 373.4 811.1 367.8 808.8 366.8 808.0 350.5 806.7 350.2 801.1 349.1 795.6 359.1 791.1 374.6 784.4 369.1 773.3 361.3 771.5 361.3 770.8 335.0 770.0 335.7 764.4 342.4 758.9 354.6 754.4 367.9 744.4 366.8 733.3 362.5 731.0 361.4 730.3 341.6 728.9 341.4 723.3 340.3 717.8 346.9 713.3 360.3 704.4 356.9 695.6 349.2 693.3 348.0 692.5 314.1 691.1 314.7 685.6 320.3 680.0 332.5 674.4 351.4 661.1 349.2 646.6 344.8 645.8 315.9 641.1 314.8 636.7 317.0 632.2 329.3 627.8 343.7 618.9 337.0 606.0 328.1 605.3 289.7 603.3 290.4 595.6 295.9 590.0 309.3 585.6 325.9 570.0 323.7 556.0 320.4 555.0 283.7 550.0 282.1 544.4 284.8 538.9 298.1 534.4 312.6 523.3 307.0 508.0 299.4 507.0 256.0 501.1 259.4 494.4 267.1 487.8 282.7 483.3 295.3 462.0 291.0 447.3 290.8 446.5 242.7 438.9 240.4 432.2 241.4 426.7 251.4 421.5 268.5 420.0 265.7 403.3 257.7 385.6 251.0 384.5 251.0 383.5 183.2 381.7 181.5 371.7 182.4 363.3 185.7 356.7 194.9 350.0 209.9 344.2 222.4 330.0 216.4 313.3 208.9 296.7 205.6 280.0 205.6 268.3 205.8 268.0 162.7 267.5 151.0 267.2 148.5 266.9 146.0 266.4 143.6 265.8 141.0 265.0 138.2 264.1 135.2 263.0 132.3 261.7 129.4 260.2 126.8 258.5 124.2 256.7 121.8 255.0 119.4 253.3 117.1 251.7 114.8 250.0 112.8 248.3 111.0 246.5 109.6 244.6 108.4 242.7 107.5 240.8 107.2 238.9 107.4 237.1 108.0 235.2 109.1 233.3 110.7 231.4 112.9 229.4 115.7 227.6 118.9 225.8 122.7 224.2 127.0 222.7 132.0 221.4 137.3 220.0 142.7 218.7 148.0 217.4 153.5 216.2 159.4 215.0 166.0 213.9 173.5 212.8 181.6 211.8 190.3 210.8 199.4 209.9 209.1 209.1 219.4 208.3 229.7 207.5 239.4 206.7 247.3 205.9 254.1 205.1 261.9 204.2 272.7 203.2 287.8 202.1 306.0 201.0 325.0 200.0 342.7 199.2 358.8 198.4 374.5 197.7 389.2 197.0 402.7 194.5 443.9 193.0 444.0 54.0 444.0Z" fill="#86c600" stroke="none"/>
<path d="M215.0 163.3L216.2 156.7M216.2 156.7L217.4 150.8M217.4 150.8L218.7 145.4M218.7 145.4L220.0 140.0M220.0 140.0L221.4 134.6M221.4 134.6L222.7 129.3M222.7 129.3L224.2 124.4M224.2 124.4L225.8 120.0M225.8 120.0L227.6 116.2M227.6 116.2L229.4 113.0M229.4 113.0L231.4 110.2M231.4 110.2L233.3 108.0M248.3 108.3L250.0 110.0M250.0 110.0L251.7 112.1M251.7 112.1L253.3 114.4M253.3 114.4L255.0 116.7M255.0 116.7L256.7 119.0M256.7 119.0L258.5 121.5M258.5 121.5L260.2 124.1M260.2 124.1L261.7 126.7M261.7 126.7L263.0 129.5M263.0 129.5L264.1 132.5M264.1 132.5L265.0 135.5M265.0 135.5L265.8 138.3M265.8 138.3L266.4 140.9M266.4 140.9L266.9 143.3M344.2 219.2L350.0 206.7M350.0 206.7L356.7 191.7M356.7 191.7L363.3 182.5M381.7 178.3L383.5 180.0M420.0 262.2L421.5 265.0M421.5 265.0L426.7 247.8M426.7 247.8L432.2 237.8M483.3 291.5L487.8 278.9M487.8 278.9L494.4 263.3M494.4 263.3L501.1 255.6M534.4 308.9L538.9 294.4M538.9 294.4L544.4 281.1M585.6 322.2L590.0 305.6M590.0 305.6L595.6 292.2M627.8 340.0L632.2 325.6M632.2 325.6L636.7 313.3M674.4 347.8L680.0 328.9M680.0 328.9L685.6 316.7M685.6 316.7L691.1 311.1M713.3 356.7L717.8 343.3M717.8 343.3L723.3 336.7M754.4 364.4L758.9 351.1M758.9 351.1L764.4 338.9M764.4 338.9L770.0 332.2M791.1 371.1L795.6 355.6M795.6 355.6L801.1 345.6M831.1 371.1L835.6 355.6M835.6 355.6L841.1 345.6M841.1 345.6L845.6 341.1M848.9 363.3L857.8 375.6M857.8 375.6L864.4 382.2M864.4 382.2L868.9 368.9M868.9 368.9L873.3 358.9M904.4 382.2L908.9 366.7M908.9 366.7L914.4 353.3M914.4 353.3L918.9 348.9M920.3 368.9L922.2 371.1M922.2 371.1L931.1 384.4M931.1 384.4L937.8 392.2M937.8 392.2L942.2 378.9M942.2 378.9L946.7 368.9M953.3 380.0L955.6 383.3M973.3 392.8L978.9 375.6M978.9 375.6L984.4 366.7M990.0 362.5L993.3 380.0M993.3 380.0L1000.0 388.9M1007.8 395.6L1012.2 381.1M1012.2 381.1L1017.8 372.2M1021.1 372.2L1026.7 384.4M1043.3 393.3L1047.8 377.8M1047.8 377.8L1053.3 366.7M1053.3 366.7L1057.1 363.3M1057.1 363.3L1060.0 380.0M1060.0 380.0L1067.8 393.3M1067.8 393.3L1075.6 402.2M1075.6 402.2L1080.0 386.7M1080.0 386.7L1084.4 377.8M1088.9 377.8L1093.3 387.8M1112.2 398.9L1116.7 382.2M1116.7 382.2L1122.2 372.2M1126.7 368.9L1130.0 388.9M1130.0 388.9L1136.7 398.9M1136.7 398.9L1143.3 407.8M1143.3 407.8L1147.8 393.3M1147.8 393.3L1152.2 385.6M1156.7 386.7L1162.2 395.6M1176.7 405.6L1181.1 391.1M1181.1 391.1L1186.7 380.0M1192.2 376.7L1195.6 391.1M1195.6 391.1L1202.2 400.0M1202.2 400.0L1208.9 408.9M1208.9 408.9L1213.3 393.3M1213.3 393.3L1217.8 385.6M1222.2 386.7L1227.8 395.6M1243.3 405.6L1247.8 388.9M1247.8 388.9L1253.3 378.9M1257.8 376.7L1261.1 391.1M1261.1 391.1L1267.8 402.2M1267.8 402.2L1274.4 413.8M1274.4 413.8L1278.9 398.9M1278.9 398.9L1283.3 391.1M1287.8 392.2L1293.3 400.0M1308.9 408.9L1313.3 393.3M1313.3 393.3L1318.9 382.2M1325.6 393.3L1332.2 406.7M1332.2 406.7L1338.9 416.7M1338.9 416.7L1343.3 402.2M1343.3 402.2L1347.8 394.4M1352.2 395.6L1357.8 403.3M1372.2 412.2L1376.7 397.8M1376.7 397.8L1382.2 387.8M1386.7 385.6L1390.0 400.0M1390.0 400.0L1396.7 408.9M1396.7 408.9L1403.3 417.8M1403.3 417.8L1407.8 402.2M1407.8 402.2L1412.2 393.3M1416.7 394.4L1422.2 402.2M1436.7 412.2L1441.1 397.8M1441.1 397.8L1446.7 386.7M1451.1 384.4L1453.3 397.8M1453.3 397.8L1460.0 408.9M1460.0 408.9L1466.7 418.9M1466.7 418.9L1471.1 403.3M1471.1 403.3L1475.6 395.6M1481.1 396.7L1486.7 404.4M1486.7 404.4L1493.3 411.1M1500.0 414.4L1504.4 400.0M1504.4 400.0L1510.0 388.9M1515.6 385.6L1518.9 400.0M1518.9 400.0L1525.6 413.3M1525.6 413.3L1532.2 423.3M1532.2 423.3L1536.7 407.8M1536.7 407.8L1541.1 401.1M1546.7 402.2L1552.2 408.9M1564.4 416.7L1568.9 402.2M1568.9 402.2L1574.4 391.1M1577.3 389.5L1580.0 402.2M1580.0 402.2L1586.7 413.3M1586.7 413.3L1593.3 423.3M1593.3 423.3L1597.8 407.8M1597.8 407.8L1602.2 400.0M1606.7 401.1L1612.2 407.8M1625.6 416.7L1630.0 402.2M1630.0 402.2L1635.6 391.1M1640.0 388.9L1642.2 401.1M1642.2 401.1L1648.9 413.3M1648.9 413.3L1656.2 424.4M1656.2 424.4L1660.0 410.0M1660.0 410.0L1664.4 402.2M1670.0 402.2L1675.6 408.9M1675.6 408.9L1682.2 415.6M1688.9 418.9L1693.3 404.4M1693.3 404.4L1698.9 392.2M1703.3 388.9L1706.7 402.2M1706.7 402.2L1713.3 414.4M1713.3 414.4L1720.0 424.4M1720.0 424.4L1724.4 411.1M1724.4 411.1L1728.9 404.4M1734.4 405.6L1740.0 411.1M1752.2 418.9L1756.7 404.4M1756.7 404.4L1761.1 394.4M1765.6 391.1L1768.9 404.4M1768.9 404.4L1775.6 415.6M1775.6 415.6L1782.2 424.4M1782.2 424.4L1786.7 410.0M1786.7 410.0L1791.1 401.1M1795.6 401.1L1801.1 408.9M1801.1 408.9L1807.8 415.6M1815.6 418.9L1820.0 404.4M1820.0 404.4L1824.4 394.4M1824.4 394.4L1827.8 391.1M1827.8 391.1L1831.1 402.2M1831.1 402.2L1837.8 415.6M1837.8 415.6L1844.4 426.7M1844.4 426.7L1848.9 411.1M1848.9 411.1L1853.3 404.4M1858.9 404.4L1864.4 411.1M1877.8 420.0L1881.1 406.7M1881.1 406.7L1883.5 397.8" stroke="#8ccc00" stroke-width="3.2"/>
<path d="M215.0 163.3L216.2 156.7M216.2 156.7L217.4 150.8M217.4 150.8L218.7 145.4M218.7 145.4L220.0 140.0M220.0 140.0L221.4 134.6M221.4 134.6L222.7 129.3M222.7 129.3L224.2 124.4M224.2 124.4L225.8 120.0M225.8 120.0L227.6 116.2M227.6 116.2L229.4 113.0M229.4 113.0L231.4 110.2M231.4 110.2L233.3 108.0M233.3 108.0L235.2 106.4M235.2 106.4L237.1 105.3M237.1 105.3L238.9 104.7M238.9 104.7L240.8 104.5M240.8 104.5L242.7 104.8M242.7 104.8L244.6 105.7M244.6 105.7L246.5 106.9M246.5 106.9L248.3 108.3M248.3 108.3L250.0 110.0M250.0 110.0L251.7 112.1M251.7 112.1L253.3 114.4M253.3 114.4L255.0 116.7M255.0 116.7L256.7 119.0M256.7 119.0L258.5 121.5M258.5 121.5L260.2 124.1M260.2 124.1L261.7 126.7M261.7 126.7L263.0 129.5M263.0 129.5L264.1 132.5M264.1 132.5L265.0 135.5M265.0 135.5L265.8 138.3M265.8 138.3L266.4 140.9M266.4 140.9L266.9 143.3" stroke="#8ccc00" stroke-width="3.6"/>
<path d="M215.0 163.3L216.2 156.7M216.2 156.7L217.4 150.8M217.4 150.8L218.7 145.4M218.7 145.4L220.0 140.0M220.0 140.0L221.4 134.6M221.4 134.6L222.7 129.3M222.7 129.3L224.2 124.4M224.2 124.4L225.8 120.0M225.8 120.0L227.6 116.2M227.6 116.2L229.4 113.0M229.4 113.0L231.4 110.2M231.4 110.2L233.3 108.0M233.3 108.0L235.2 106.4M235.2 106.4L237.1 105.3M237.1 105.3L238.9 104.7M238.9 104.7L240.8 104.5M240.8 104.5L242.7 104.8M242.7 104.8L244.6 105.7M244.6 105.7L246.5 106.9M246.5 106.9L248.3 108.3M248.3 108.3L250.0 110.0M250.0 110.0L251.7 112.1M251.7 112.1L253.3 114.4M253.3 114.4L255.0 116.7M255.0 116.7L256.7 119.0M256.7 119.0L258.5 121.5M258.5 121.5L260.2 124.1M260.2 124.1L261.7 126.7M261.7 126.7L263.0 129.5M263.0 129.5L264.1 132.5M264.1 132.5L265.0 135.5M265.0 135.5L265.8 138.3M265.8 138.3L266.4 140.9M266.4 140.9L266.9 143.3" stroke="#a4e800" stroke-width="2.3"/>
<path d="M54.0 438.9 193.0 438.9 194.5 439.1 197.0 398.2 197.7 384.7 198.4 370.0 199.2 354.3 200.0 338.2 201.0 320.5 202.1 301.5 203.2 283.3 204.2 268.2 205.1 257.4 205.9 249.6 206.7 242.8 207.5 234.9 208.3 225.2 209.1 214.9 209.9 204.6 210.8 194.9 211.8 185.8 212.8 177.1 213.9 169.0 215.0 161.5 216.2 154.9 217.4 149.0 218.7 143.5 220.0 138.2 221.4 132.7 222.7 127.5 224.2 122.5 225.8 118.2 227.6 114.4 229.4 111.1 231.4 108.4 233.3 106.2 235.2 104.5 237.1 103.4 238.9 102.8 240.8 102.6 242.7 103.0 244.6 103.8 246.5 105.0 248.3 106.4 250.0 108.2 251.7 110.3 253.3 112.5 255.0 114.8 256.7 117.2 258.5 119.6 260.2 122.2 261.7 124.8 263.0 127.7 264.1 130.6 265.0 133.6 265.8 136.4 266.4 139.0 266.9 141.4 267.2 143.8 267.5 146.4 268.0 158.1 268.3 201.1 280.0 200.4 296.7 200.4 313.3 203.7 330.0 211.1 344.2 217.0 350.0 204.5 356.7 189.5 363.3 180.3 371.7 177.0 381.7 176.1 383.5 177.8 384.5 245.6 385.6 245.6 403.3 252.1 420.0 259.8 421.5 262.6 426.7 245.4 432.2 235.3 438.9 234.2 446.5 236.3 447.3 284.4 462.0 284.6 483.3 288.9 487.8 276.3 494.4 260.7 501.1 253.0 507.0 249.6 508.0 293.0 523.3 300.7 534.4 306.3 538.9 291.8 544.4 278.5 550.0 275.9 555.0 277.5 556.0 314.2 570.0 317.5 585.6 319.7 590.0 303.1 595.6 289.7 603.3 284.2 605.3 283.5 606.0 321.9 618.9 330.8 627.8 337.5 632.2 323.1 636.7 310.8 641.1 308.6 645.8 309.7 646.6 338.6 661.1 343.1 674.4 345.3 680.0 326.4 685.6 314.2 691.1 308.6 692.5 308.0 693.3 341.9 695.6 343.1 704.4 350.8 713.3 354.2 717.8 340.8 723.3 334.3 728.9 335.4 730.3 335.6 731.0 355.4 733.3 356.5 744.4 360.9 754.4 362.0 758.9 348.7 764.4 336.5 770.0 329.8 770.8 329.1 771.5 355.4 773.3 355.4 784.4 363.2 791.1 368.7 795.6 353.2 801.1 343.2 806.7 344.3 808.0 344.6 808.8 360.9 811.1 362.0 822.2 367.7 831.1 368.8 835.6 353.3 841.1 343.3 845.6 338.8 846.4 338.2 847.0 359.9 848.9 361.0 857.8 373.3 864.4 379.9 868.9 366.6 873.3 356.6 880.0 356.6 881.4 356.7 882.2 371.0 884.4 372.1 895.6 377.7 904.4 379.9 908.9 364.4 914.4 351.0 918.9 346.6 919.7 346.2 920.3 366.6 922.2 368.8 931.1 382.2 937.8 390.0 942.2 376.7 946.7 366.7 951.1 366.7 952.5 366.8 953.3 377.8 955.6 381.1 964.4 386.7 973.3 390.6 978.9 373.4 984.4 364.5 988.9 361.1 990.0 360.3 993.3 377.8 1000.0 386.7 1007.8 393.4 1012.2 378.9 1017.8 370.0 1021.1 370.0 1026.7 382.2 1035.6 387.8 1043.3 391.1 1047.8 375.6 1053.3 364.5 1057.1 361.1 1060.0 377.8 1067.8 391.1 1075.6 400.0 1080.0 384.5 1084.4 375.6 1088.9 375.6 1093.3 385.6 1102.2 393.4 1112.2 396.7 1116.7 380.0 1122.2 370.0 1126.7 366.7 1130.0 386.7 1136.7 396.7 1143.3 405.6 1147.8 391.1 1152.2 383.4 1156.7 384.5 1162.2 393.4 1170.0 400.0 1176.7 403.4 1181.1 388.9 1186.7 377.8 1192.2 374.5 1195.6 388.9 1202.2 397.8 1208.9 406.7 1213.3 391.1 1217.8 383.4 1222.2 384.5 1227.8 393.4 1235.6 400.0 1243.3 403.4 1247.8 386.7 1253.3 376.7 1257.8 374.5 1261.1 388.9 1267.8 400.0 1274.4 411.6 1278.9 396.7 1283.3 388.9 1287.8 390.1 1293.3 397.9 1302.2 404.6 1308.9 406.8 1313.3 391.2 1318.9 380.1 1323.3 376.8 1325.6 391.2 1332.2 404.6 1338.9 414.6 1343.3 400.1 1347.8 392.3 1352.2 393.5 1357.8 401.2 1365.6 406.8 1372.2 410.1 1376.7 395.7 1382.2 385.7 1386.7 383.5 1390.0 397.9 1396.7 406.8 1403.3 415.7 1407.8 400.1 1412.2 391.2 1416.7 392.3 1422.2 400.1 1430.0 406.8 1436.7 410.1 1441.1 395.7 1446.7 384.6 1451.1 382.3 1453.3 395.7 1460.0 406.8 1466.7 416.8 1471.1 401.2 1475.6 393.5 1481.1 394.6 1486.7 402.3 1493.3 409.0 1500.0 412.3 1504.4 397.9 1510.0 386.8 1515.6 383.5 1518.9 397.9 1525.6 411.2 1532.2 421.2 1536.7 405.7 1541.1 399.0 1546.7 400.1 1552.2 406.8 1558.9 412.3 1564.4 414.6 1568.9 400.1 1574.4 389.0 1577.3 387.4 1580.0 400.1 1586.7 411.2 1593.3 421.2 1597.8 405.7 1602.2 397.9 1606.7 399.0 1612.2 405.7 1620.0 411.2 1625.6 414.6 1630.0 400.1 1635.6 389.0 1640.0 386.8 1642.2 399.0 1648.9 411.2 1656.2 422.3 1660.0 407.9 1664.4 400.1 1670.0 400.1 1675.6 406.8 1682.2 413.5 1688.9 416.8 1693.3 402.3 1698.9 390.1 1703.3 386.8 1706.7 400.1 1713.3 412.3 1720.0 422.3 1724.4 409.0 1728.9 402.3 1734.4 403.5 1740.0 409.0 1746.7 414.6 1752.2 416.8 1756.7 402.3 1761.1 392.3 1765.6 389.0 1768.9 402.3 1775.6 413.5 1782.2 422.3 1786.7 407.9 1791.1 399.0 1795.6 399.0 1801.1 406.8 1807.8 413.5 1815.6 416.8 1820.0 402.3 1824.4 392.3 1827.8 389.0 1831.1 400.1 1837.8 413.5 1844.4 424.6 1848.9 409.0 1853.3 402.3 1858.9 402.3 1864.4 409.0 1871.1 414.6 1877.8 417.9 1881.1 404.6 1883.5 395.7 1883.5 399.9 1881.1 408.8 1877.8 422.1 1871.1 418.8 1864.4 413.2 1858.9 406.5 1853.3 406.5 1848.9 413.2 1844.4 428.8 1837.8 417.7 1831.1 404.3 1827.8 393.2 1824.4 396.5 1820.0 406.5 1815.6 421.0 1807.8 417.7 1801.1 411.0 1795.6 403.2 1791.1 403.2 1786.7 412.1 1782.2 426.5 1775.6 417.7 1768.9 406.5 1765.6 393.2 1761.1 396.5 1756.7 406.5 1752.2 421.0 1746.7 418.8 1740.0 413.2 1734.4 407.7 1728.9 406.5 1724.4 413.2 1720.0 426.5 1713.3 416.5 1706.7 404.3 1703.3 391.0 1698.9 394.3 1693.3 406.5 1688.9 421.0 1682.2 417.7 1675.6 411.0 1670.0 404.3 1664.4 404.3 1660.0 412.1 1656.2 426.5 1648.9 415.4 1642.2 403.2 1640.0 391.0 1635.6 393.2 1630.0 404.3 1625.6 418.8 1620.0 415.4 1612.2 409.9 1606.7 403.2 1602.2 402.1 1597.8 409.9 1593.3 425.4 1586.7 415.4 1580.0 404.3 1577.3 391.6 1574.4 393.2 1568.9 404.3 1564.4 418.8 1558.9 416.5 1552.2 411.0 1546.7 404.3 1541.1 403.2 1536.7 409.9 1532.2 425.4 1525.6 415.4 1518.9 402.1 1515.6 387.7 1510.0 391.0 1504.4 402.1 1500.0 416.5 1493.3 413.2 1486.7 406.5 1481.1 398.8 1475.6 397.7 1471.1 405.4 1466.7 421.0 1460.0 411.0 1453.3 399.9 1451.1 386.5 1446.7 388.8 1441.1 399.9 1436.7 414.3 1430.0 411.0 1422.2 404.3 1416.7 396.5 1412.2 395.4 1407.8 404.3 1403.3 419.9 1396.7 411.0 1390.0 402.1 1386.7 387.7 1382.2 389.9 1376.7 399.9 1372.2 414.3 1365.6 411.0 1357.8 405.4 1352.2 397.7 1347.8 396.5 1343.3 404.3 1338.9 418.8 1332.2 408.8 1325.6 395.4 1323.3 381.0 1318.9 384.3 1313.3 395.4 1308.9 411.0 1302.2 408.8 1293.3 402.1 1287.8 394.3 1283.3 393.3 1278.9 401.1 1274.4 416.0 1267.8 404.4 1261.1 393.3 1257.8 378.9 1253.3 381.1 1247.8 391.1 1243.3 407.8 1235.6 404.4 1227.8 397.8 1222.2 388.9 1217.8 387.8 1213.3 395.5 1208.9 411.1 1202.2 402.2 1195.6 393.3 1192.2 378.9 1186.7 382.2 1181.1 393.3 1176.7 407.8 1170.0 404.4 1162.2 397.8 1156.7 388.9 1152.2 387.8 1147.8 395.5 1143.3 410.0 1136.7 401.1 1130.0 391.1 1126.7 371.1 1122.2 374.4 1116.7 384.4 1112.2 401.1 1102.2 397.8 1093.3 390.0 1088.9 380.0 1084.4 380.0 1080.0 388.9 1075.6 404.4 1067.8 395.5 1060.0 382.2 1057.1 365.5 1053.3 368.9 1047.8 380.0 1043.3 395.5 1035.6 392.2 1026.7 386.6 1021.1 374.4 1017.8 374.4 1012.2 383.3 1007.8 397.8 1000.0 391.1 993.3 382.2 990.0 364.7 988.9 365.5 984.4 368.9 978.9 377.8 973.3 395.0 964.4 391.1 955.6 385.5 953.3 382.2 952.5 371.2 951.1 371.1 946.7 371.1 942.2 381.1 937.8 394.4 931.1 386.6 922.2 373.4 920.3 371.2 919.7 350.8 918.9 351.2 914.4 355.6 908.9 369.0 904.4 384.5 895.6 382.3 884.4 376.7 882.2 375.6 881.4 361.3 880.0 361.2 873.3 361.2 868.9 371.2 864.4 384.5 857.8 377.9 848.9 365.6 847.0 364.5 846.4 342.8 845.6 343.4 841.1 347.9 835.6 357.9 831.1 373.4 822.2 372.3 811.1 366.8 808.8 365.7 808.0 349.4 806.7 349.1 801.1 348.0 795.6 358.0 791.1 373.5 784.4 368.0 773.3 360.2 771.5 360.2 770.8 333.9 770.0 334.6 764.4 341.3 758.9 353.5 754.4 366.8 744.4 365.7 733.3 361.3 731.0 360.2 730.3 340.4 728.9 340.2 723.3 339.1 717.8 345.8 713.3 359.2 704.4 355.8 695.6 348.1 693.3 346.9 692.5 313.0 691.1 313.6 685.6 319.2 680.0 331.4 674.4 350.3 661.1 348.1 646.6 343.6 645.8 314.7 641.1 313.6 636.7 315.8 632.2 328.1 627.8 342.5 618.9 335.8 606.0 326.9 605.3 288.5 603.3 289.2 595.6 294.7 590.0 308.1 585.6 324.7 570.0 322.5 556.0 319.2 555.0 282.5 550.0 280.9 544.4 283.7 538.9 297.0 534.4 311.5 523.3 305.9 508.0 298.2 507.0 254.8 501.1 258.2 494.4 265.9 487.8 281.5 483.3 294.1 462.0 289.8 447.3 289.6 446.5 241.5 438.9 239.2 432.2 240.3 426.7 250.2 421.5 267.4 420.0 264.6 403.3 256.7 385.6 250.0 384.5 250.0 383.5 182.2 381.7 180.5 371.7 181.4 363.3 184.7 356.7 193.9 350.0 208.9 344.2 221.4 330.0 215.5 313.3 207.9 296.7 204.6 280.0 204.6 268.3 204.9 268.0 161.9 267.5 150.2 267.2 147.6 266.9 145.2 266.4 142.7 265.8 140.2 265.0 137.3 264.1 134.4 263.0 131.4 261.7 128.6 260.2 125.9 258.5 123.4 256.7 120.9 255.0 118.6 253.3 116.2 251.7 114.0 250.0 111.9 248.3 110.2 246.5 108.7 244.6 107.5 242.7 106.7 240.8 106.4 238.9 106.5 237.1 107.1 235.2 108.2 233.3 109.8 231.4 112.1 229.4 114.8 227.6 118.1 225.8 121.8 224.2 126.2 222.7 131.1 221.4 136.4 220.0 141.8 218.7 147.2 217.4 152.6 216.2 158.5 215.0 165.1 213.9 172.6 212.8 180.8 211.8 189.5 210.8 198.5 209.9 208.2 209.1 218.5 208.3 228.8 207.5 238.5 206.7 246.5 205.9 253.3 205.1 261.1 204.2 271.8 203.2 287.0 202.1 305.2 201.0 324.2 200.0 341.8 199.2 358.0 198.4 373.6 197.7 388.4 197.0 401.8 194.5 442.9 193.0 443.1 54.0 443.1Z" fill="#a4e800" stroke="none"/>
</g>
<g fill="#8f93bd" shape-rendering="crispEdges">
<rect x="191" y="56" width="1" height="1"/>
<rect x="191" y="79" width="1" height="1"/>
<rect x="191" y="102" width="1" height="1"/>
<rect x="191" y="126" width="1" height="1"/>
<rect x="191" y="149" width="1" height="1"/>
<rect x="191" y="172" width="1" height="1"/>
<rect x="191" y="196" width="1" height="1"/>
<rect x="191" y="219" width="1" height="1"/>
<rect x="191" y="242" width="1" height="1"/>
<rect x="191" y="266" width="1" height="1"/>
<rect x="191" y="289" width="1" height="1"/>
<rect x="191" y="312" width="1" height="1"/>
<rect x="191" y="335" width="1" height="1"/>
<rect x="191" y="359" width="1" height="1"/>
<rect x="191" y="382" width="1" height="1"/>
<rect x="191" y="405" width="1" height="1"/>
<rect x="191" y="429" width="1" height="1"/>
<rect x="191" y="452" width="1" height="1"/>
<rect x="191" y="475" width="1" height="1"/>
<rect x="191" y="498" width="1" height="1"/>
<rect x="191" y="522" width="1" height="1"/>
<rect x="191" y="545" width="1" height="1"/>
<rect x="191" y="568" width="1" height="1"/>
<rect x="191" y="592" width="1" height="1"/>
<rect x="191" y="615" width="1" height="1"/>
<rect x="191" y="638" width="1" height="1"/>
<rect x="191" y="662" width="1" height="1"/>
<rect x="191" y="685" width="1" height="1"/>
<rect x="191" y="708" width="1" height="1"/>
<rect x="191" y="732" width="1" height="1"/>
<rect x="191" y="755" width="1" height="1"/>
<rect x="191" y="778" width="1" height="1"/>
<rect x="191" y="801" width="1" height="1"/>
<rect x="191" y="825" width="1" height="1"/>
<rect x="191" y="848" width="1" height="1"/>
<rect x="191" y="871" width="1" height="1"/>
<rect x="191" y="895" width="1" height="1"/>
<rect x="191" y="918" width="1" height="1"/>
<rect x="191" y="941" width="1" height="1"/>
<rect x="379" y="56" width="1" height="1"/>
<rect x="379" y="79" width="1" height="1"/>
<rect x="379" y="102" width="1" height="1"/>
<rect x="379" y="126" width="1" height="1"/>
<rect x="379" y="149" width="1" height="1"/>
<rect x="379" y="172" width="1" height="1"/>
<rect x="379" y="196" width="1" height="1"/>
<rect x="379" y="219" width="1" height="1"/>
<rect x="379" y="242" width="1" height="1"/>
<rect x="379" y="266" width="1" height="1"/>
<rect x="379" y="289" width="1" height="1"/>
<rect x="379" y="312" width="1" height="1"/>
<rect x="379" y="335" width="1" height="1"/>
<rect x="379" y="359" width="1" height="1"/>
<rect x="379" y="382" width="1" height="1"/>
<rect x="379" y="405" width="1" height="1"/>
<rect x="379" y="429" width="1" height="1"/>
<rect x="379" y="452" width="1" height="1"/>
<rect x="379" y="475" width="1" height="1"/>
<rect x="379" y="498" width="1" height="1"/>
<rect x="379" y="522" width="1" height="1"/>
<rect x="379" y="545" width="1" height="1"/>
<rect x="379" y="568" width="1" height="1"/>
<rect x="379" y="592" width="1" height="1"/>
<rect x="379" y="615" width="1" height="1"/>
<rect x="379" y="638" width="1" height="1"/>
<rect x="379" y="662" width="1" height="1"/>
<rect x="379" y="685" width="1" height="1"/>
<rect x="379" y="708" width="1" height="1"/>
<rect x="379" y="732" width="1" height="1"/>
<rect x="379" y="755" width="1" height="1"/>
<rect x="379" y="778" width="1" height="1"/>
<rect x="379" y="801" width="1" height="1"/>
<rect x="379" y="825" width="1" height="1"/>
<rect x="379" y="848" width="1" height="1"/>
<rect x="379" y="871" width="1" height="1"/>
<rect x="379" y="895" width="1" height="1"/>
<rect x="379" y="918" width="1" height="1"/>
<rect x="379" y="941" width="1" height="1"/>
<rect x="568" y="56" width="1" height="1"/>
<rect x="568" y="79" width="1" height="1"/>
<rect x="568" y="102" width="1" height="1"/>
<rect x="568" y="126" width="1" height="1"/>
<rect x="568" y="149" width="1" height="1"/>
<rect x="568" y="172" width="1" height="1"/>
<rect x="568" y="196" width="1" height="1"/>
<rect x="568" y="219" width="1" height="1"/>
<rect x="568" y="242" width="1" height="1"/>
<rect x="568" y="266" width="1" height="1"/>
<rect x="568" y="289" width="1" height="1"/>
<rect x="568" y="312" width="1" height="1"/>
<rect x="568" y="335" width="1" height="1"/>
<rect x="568" y="359" width="1" height="1"/>
<rect x="568" y="382" width="1" height="1"/>
<rect x="568" y="405" width="1" height="1"/>
<rect x="568" y="429" width="1" height="1"/>
<rect x="568" y="452" width="1" height="1"/>
<rect x="568" y="475" width="1" height="1"/>
<rect x="568" y="498" width="1" height="1"/>
<rect x="568" y="522" width="1" height="1"/>
<rect x="568" y="545" width="1" height="1"/>
<rect x="568" y="568" width="1" height="1"/>
<rect x="568" y="592" width="1" height="1"/>
<rect x="568" y="615" width="1" height="1"/>
<rect x="568" y="638" width="1" height="1"/>
<rect x="568" y="662" width="1" height="1"/>
<rect x="568" y="685" width="1" height="1"/>
<rect x="568" y="708" width="1" height="1"/>
<rect x="568" y="732" width="1" height="1"/>
<rect x="568" y="755" width="1" height="1"/>
<rect x="568" y="778" width="1" height="1"/>
<rect x="568" y="801" width="1" height="1"/>
<rect x="568" y="825" width="1" height="1"/>
<rect x="568" y="848" width="1" height="1"/>
<rect x="568" y="871" width="1" height="1"/>
<rect x="568" y="895" width="1" height="1"/>
<rect x="568" y="918" width="1" height="1"/>
<rect x="568" y="941" width="1" height="1"/>
<rect x="756" y="56" width="1" height="1"/>
<rect x="756" y="79" width="1" height="1"/>
<rect x="756" y="102" width="1" height="1"/>
<rect x="756" y="126" width="1" height="1"/>
<rect x="756" y="149" width="1" height="1"/>
<rect x="756" y="172" width="1" height="1"/>
<rect x="756" y="196" width="1" height="1"/>
<rect x="756" y="219" width="1" height="1"/>
<rect x="756" y="242" width="1" height="1"/>
<rect x="756" y="266" width="1" height="1"/>
<rect x="756" y="289" width="1" height="1"/>
<rect x="756" y="312" width="1" height="1"/>
<rect x="756" y="335" width="1" height="1"/>
<rect x="756" y="359" width="1" height="1"/>
<rect x="756" y="382" width="1" height="1"/>
<rect x="756" y="405" width="1" height="1"/>
<rect x="756" y="429" width="1" height="1"/>
<rect x="756" y="452" width="1" height="1"/>
<rect x="756" y="475" width="1" height="1"/>
<rect x="756" y="498" width="1" height="1"/>
<rect x="756" y="522" width="1" height="1"/>
<rect x="756" y="545" width="1" height="1"/>
<rect x="756" y="568" width="1" height="1"/>
<rect x="756" y="592" width="1" height="1"/>
<rect x="756" y="615" width="1" height="1"/>
<rect x="756" y="638" width="1" height="1"/>
<rect x="756" y="662" width="1" height="1"/>
<rect x="756" y="685" width="1" height="1"/>
<rect x="756" y="708" width="1" height="1"/>
<rect x="756" y="732" width="1" height="1"/>
<rect x="756" y="755" width="1" height="1"/>
<rect x="756" y="778" width="1" height="1"/>
<rect x="756" y="801" width="1" height="1"/>
<rect x="756" y="825" width="1" height="1"/>
<rect x="756" y="848" width="1" height="1"/>
<rect x="756" y="871" width="1" height="1"/>
<rect x="756" y="895" width="1" height="1"/>
<rect x="756" y="918" width="1" height="1"/>
<rect x="756" y="941" width="1" height="1"/>
<rect x="1133" y="56" width="1" height="1"/>
<rect x="1133" y="79" width="1" height="1"/>
<rect x="1133" y="102" width="1" height="1"/>
<rect x="1133" y="126" width="1" height="1"/>
<rect x="1133" y="149" width="1" height="1"/>
<rect x="1133" y="172" width="1" height="1"/>
<rect x="1133" y="196" width="1" height="1"/>
<rect x="1133" y="219" width="1" height="1"/>
<rect x="1133" y="242" width="1" height="1"/>
<rect x="1133" y="266" width="1" height="1"/>
<rect x="1133" y="289" width="1" height="1"/>
<rect x="1133" y="312" width="1" height="1"/>
<rect x="1133" y="335" width="1" height="1"/>
<rect x="1133" y="359" width="1" height="1"/>
<rect x="1133" y="382" width="1" height="1"/>
<rect x="1133" y="405" width="1" height="1"/>
<rect x="1133" y="429" width="1" height="1"/>
<rect x="1133" y="452" width="1" height="1"/>
<rect x="1133" y="475" width="1" height="1"/>
<rect x="1133" y="498" width="1" height="1"/>
<rect x="1133" y="522" width="1" height="1"/>
<rect x="1133" y="545" width="1" height="1"/>
<rect x="1133" y="568" width="1" height="1"/>
<rect x="1133" y="592" width="1" height="1"/>
<rect x="1133" y="615" width="1" height="1"/>
<rect x="1133" y="638" width="1" height="1"/>
<rect x="1133" y="662" width="1" height="1"/>
<rect x="1133" y="685" width="1" height="1"/>
<rect x="1133" y="708" width="1" height="1"/>
<rect x="1133" y="732" width="1" height="1"/>
<rect x="1133" y="755" width="1" height="1"/>
<rect x="1133" y="778" width="1" height="1"/>
<rect x="1133" y="801" width="1" height="1"/>
<rect x="1133" y="825" width="1" height="1"/>
<rect x="1133" y="848" width="1" height="1"/>
<rect x="1133" y="871" width="1" height="1"/>
<rect x="1133" y="895" width="1" height="1"/>
<rect x="1133" y="918" width="1" height="1"/>
<rect x="1133" y="941" width="1" height="1"/>
<rect x="1321" y="56" width="1" height="1"/>
<rect x="1321" y="79" width="1" height="1"/>
<rect x="1321" y="102" width="1" height="1"/>
<rect x="1321" y="126" width="1" height="1"/>
<rect x="1321" y="149" width="1" height="1"/>
<rect x="1321" y="172" width="1" height="1"/>
<rect x="1321" y="196" width="1" height="1"/>
<rect x="1321" y="219" width="1" height="1"/>
<rect x="1321" y="242" width="1" height="1"/>
<rect x="1321" y="266" width="1" height="1"/>
<rect x="1321" y="289" width="1" height="1"/>
<rect x="1321" y="312" width="1" height="1"/>
<rect x="1321" y="335" width="1" height="1"/>
<rect x="1321" y="359" width="1" height="1"/>
<rect x="1321" y="382" width="1" height="1"/>
<rect x="1321" y="405" width="1" height="1"/>
<rect x="1321" y="429" width="1" height="1"/>
<rect x="1321" y="452" width="1" height="1"/>
<rect x="1321" y="475" width="1" height="1"/>
<rect x="1321" y="498" width="1" height="1"/>
<rect x="1321" y="522" width="1" height="1"/>
<rect x="1321" y="545" width="1" height="1"/>
<rect x="1321" y="568" width="1" height="1"/>
<rect x="1321" y="592" width="1" height="1"/>
<rect x="1321" y="615" width="1" height="1"/>
<rect x="1321" y="638" width="1" height="1"/>
<rect x="1321" y="662" width="1" height="1"/>
<rect x="1321" y="685" width="1" height="1"/>
<rect x="1321" y="708" width="1" height="1"/>
<rect x="1321" y="732" width="1" height="1"/>
<rect x="1321" y="755" width="1" height="1"/>
<rect x="1321" y="778" width="1" height="1"/>
<rect x="1321" y="801" width="1" height="1"/>
<rect x="1321" y="825" width="1" height="1"/>
<rect x="1321" y="848" width="1" height="1"/>
<rect x="1321" y="871" width="1" height="1"/>
<rect x="1321" y="895" width="1" height="1"/>
<rect x="1321" y="918" width="1" height="1"/>
<rect x="1321" y="941" width="1" height="1"/>
<rect x="1510" y="56" width="1" height="1"/>
<rect x="1510" y="79" width="1" height="1"/>
<rect x="1510" y="102" width="1" height="1"/>
<rect x="1510" y="126" width="1" height="1"/>
<rect x="1510" y="149" width="1" height="1"/>
<rect x="1510" y="172" width="1" height="1"/>
<rect x="1510" y="196" width="1" height="1"/>
<rect x="1510" y="219" width="1" height="1"/>
<rect x="1510" y="242" width="1" height="1"/>
<rect x="1510" y="266" width="1" height="1"/>
<rect x="1510" y="289" width="1" height="1"/>
<rect x="1510" y="312" width="1" height="1"/>
<rect x="1510" y="335" width="1" height="1"/>
<rect x="1510" y="359" width="1" height="1"/>
<rect x="1510" y="382" width="1" height="1"/>
<rect x="1510" y="405" width="1" height="1"/>
<rect x="1510" y="429" width="1" height="1"/>
<rect x="1510" y="452" width="1" height="1"/>
<rect x="1510" y="475" width="1" height="1"/>
<rect x="1510" y="498" width="1" height="1"/>
<rect x="1510" y="522" width="1" height="1"/>
<rect x="1510" y="545" width="1" height="1"/>
<rect x="1510" y="568" width="1" height="1"/>
<rect x="1510" y="592" width="1" height="1"/>
<rect x="1510" y="615" width="1" height="1"/>
<rect x="1510" y="638" width="1" height="1"/>
<rect x="1510" y="662" width="1" height="1"/>
<rect x="1510" y="685" width="1" height="1"/>
<rect x="1510" y="708" width="1" height="1"/>
<rect x="1510" y="732" width="1" height="1"/>
<rect x="1510" y="755" width="1" height="1"/>
<rect x="1510" y="778" width="1" height="1"/>
<rect x="1510" y="801" width="1" height="1"/>
<rect x="1510" y="825" width="1" height="1"/>
<rect x="1510" y="848" width="1" height="1"/>
<rect x="1510" y="871" width="1" height="1"/>
<rect x="1510" y="895" width="1" height="1"/>
<rect x="1510" y="918" width="1" height="1"/>
<rect x="1510" y="941" width="1" height="1"/>
<rect x="1698" y="56" width="1" height="1"/>
<rect x="1698" y="79" width="1" height="1"/>
<rect x="1698" y="102" width="1" height="1"/>
<rect x="1698" y="126" width="1" height="1"/>
<rect x="1698" y="149" width="1" height="1"/>
<rect x="1698" y="172" width="1" height="1"/>
<rect x="1698" y="196" width="1" height="1"/>
<rect x="1698" y="219" width="1" height="1"/>
<rect x="1698" y="242" width="1" height="1"/>
<rect x="1698" y="266" width="1" height="1"/>
<rect x="1698" y="289" width="1" height="1"/>
<rect x="1698" y="312" width="1" height="1"/>
<rect x="1698" y="335" width="1" height="1"/>
<rect x="1698" y="359" width="1" height="1"/>
<rect x="1698" y="382" width="1" height="1"/>
<rect x="1698" y="405" width="1" height="1"/>
<rect x="1698" y="429" width="1" height="1"/>
<rect x="1698" y="452" width="1" height="1"/>
<rect x="1698" y="475" width="1" height="1"/>
<rect x="1698" y="498" width="1" height="1"/>
<rect x="1698" y="522" width="1" height="1"/>
<rect x="1698" y="545" width="1" height="1"/>
<rect x="1698" y="568" width="1" height="1"/>
<rect x="1698" y="592" width="1" height="1"/>
<rect x="1698" y="615" width="1" height="1"/>
<rect x="1698" y="638" width="1" height="1"/>
<rect x="1698" y="662" width="1" height="1"/>
<rect x="1698" y="685" width="1" height="1"/>
<rect x="1698" y="708" width="1" height="1"/>
<rect x="1698" y="732" width="1" height="1"/>
<rect x="1698" y="755" width="1" height="1"/>
<rect x="1698" y="778" width="1" height="1"/>
<rect x="1698" y="801" width="1" height="1"/>
<rect x="1698" y="825" width="1" height="1"/>
<rect x="1698" y="848" width="1" height="1"/>
<rect x="1698" y="871" width="1" height="1"/>
<rect x="1698" y="895" width="1" height="1"/>
<rect x="1698" y="918" width="1" height="1"/>
<rect x="1698" y="941" width="1" height="1"/>
<rect x="40" y="149" width="1" height="1"/>
<rect x="78" y="149" width="1" height="1"/>
<rect x="116" y="149" width="1" height="1"/>
<rect x="153" y="149" width="1" height="1"/>
<rect x="229" y="149" width="1" height="1"/>
<rect x="266" y="149" width="1" height="1"/>
<rect x="304" y="149" width="1" height="1"/>
<rect x="342" y="149" width="1" height="1"/>
<rect x="417" y="149" width="1" height="1"/>
<rect x="455" y="149" width="1" height="1"/>
<rect x="492" y="149" width="1" height="1"/>
<rect x="530" y="149" width="1" height="1"/>
<rect x="605" y="149" width="1" height="1"/>
<rect x="643" y="149" width="1" height="1"/>
<rect x="681" y="149" width="1" height="1"/>
<rect x="718" y="149" width="1" height="1"/>
<rect x="794" y="149" width="1" height="1"/>
<rect x="831" y="149" width="1" height="1"/>
<rect x="869" y="149" width="1" height="1"/>
<rect x="907" y="149" width="1" height="1"/>
<rect x="982" y="149" width="1" height="1"/>
<rect x="1020" y="149" width="1" height="1"/>
<rect x="1058" y="149" width="1" height="1"/>
<rect x="1095" y="149" width="1" height="1"/>
<rect x="1171" y="149" width="1" height="1"/>
<rect x="1208" y="149" width="1" height="1"/>
<rect x="1246" y="149" width="1" height="1"/>
<rect x="1284" y="149" width="1" height="1"/>
<rect x="1359" y="149" width="1" height="1"/>
<rect x="1397" y="149" width="1" height="1"/>
<rect x="1434" y="149" width="1" height="1"/>
<rect x="1472" y="149" width="1" height="1"/>
<rect x="1547" y="149" width="1" height="1"/>
<rect x="1585" y="149" width="1" height="1"/>
<rect x="1623" y="149" width="1" height="1"/>
<rect x="1660" y="149" width="1" height="1"/>
<rect x="1736" y="149" width="1" height="1"/>
<rect x="1773" y="149" width="1" height="1"/>
<rect x="40" y="266" width="1" height="1"/>
<rect x="78" y="266" width="1" height="1"/>
<rect x="116" y="266" width="1" height="1"/>
<rect x="153" y="266" width="1" height="1"/>
<rect x="229" y="266" width="1" height="1"/>
<rect x="266" y="266" width="1" height="1"/>
<rect x="304" y="266" width="1" height="1"/>
<rect x="342" y="266" width="1" height="1"/>
<rect x="417" y="266" width="1" height="1"/>
<rect x="455" y="266" width="1" height="1"/>
<rect x="492" y="266" width="1" height="1"/>
<rect x="530" y="266" width="1" height="1"/>
<rect x="605" y="266" width="1" height="1"/>
<rect x="643" y="266" width="1" height="1"/>
<rect x="681" y="266" width="1" height="1"/>
<rect x="718" y="266" width="1" height="1"/>
<rect x="794" y="266" width="1" height="1"/>
<rect x="831" y="266" width="1" height="1"/>
<rect x="869" y="266" width="1" height="1"/>
<rect x="907" y="266" width="1" height="1"/>
<rect x="982" y="266" width="1" height="1"/>
<rect x="1020" y="266" width="1" height="1"/>
<rect x="1058" y="266" width="1" height="1"/>
<rect x="1095" y="266" width="1" height="1"/>
<rect x="1171" y="266" width="1" height="1"/>
<rect x="1208" y="266" width="1" height="1"/>
<rect x="1246" y="266" width="1" height="1"/>
<rect x="1284" y="266" width="1" height="1"/>
<rect x="1359" y="266" width="1" height="1"/>
<rect x="1397" y="266" width="1" height="1"/>
<rect x="1434" y="266" width="1" height="1"/>
<rect x="1472" y="266" width="1" height="1"/>
<rect x="1547" y="266" width="1" height="1"/>
<rect x="1585" y="266" width="1" height="1"/>
<rect x="1623" y="266" width="1" height="1"/>
<rect x="1660" y="266" width="1" height="1"/>
<rect x="1736" y="266" width="1" height="1"/>
<rect x="1773" y="266" width="1" height="1"/>
<rect x="40" y="382" width="1" height="1"/>
<rect x="78" y="382" width="1" height="1"/>
<rect x="116" y="382" width="1" height="1"/>
<rect x="153" y="382" width="1" height="1"/>
<rect x="229" y="382" width="1" height="1"/>
<rect x="266" y="382" width="1" height="1"/>
<rect x="304" y="382" width="1" height="1"/>
<rect x="342" y="382" width="1" height="1"/>
<rect x="417" y="382" width="1" height="1"/>
<rect x="455" y="382" width="1" height="1"/>
<rect x="492" y="382" width="1" height="1"/>
<rect x="530" y="382" width="1" height="1"/>
<rect x="605" y="382" width="1" height="1"/>
<rect x="643" y="382" width="1" height="1"/>
<rect x="681" y="382" width="1" height="1"/>
<rect x="718" y="382" width="1" height="1"/>
<rect x="794" y="382" width="1" height="1"/>
<rect x="831" y="382" width="1" height="1"/>
<rect x="869" y="382" width="1" height="1"/>
<rect x="907" y="382" width="1" height="1"/>
<rect x="982" y="382" width="1" height="1"/>
<rect x="1020" y="382" width="1" height="1"/>
<rect x="1058" y="382" width="1" height="1"/>
<rect x="1095" y="382" width="1" height="1"/>
<rect x="1171" y="382" width="1" height="1"/>
<rect x="1208" y="382" width="1" height="1"/>
<rect x="1246" y="382" width="1" height="1"/>
<rect x="1284" y="382" width="1" height="1"/>
<rect x="1359" y="382" width="1" height="1"/>
<rect x="1397" y="382" width="1" height="1"/>
<rect x="1434" y="382" width="1" height="1"/>
<rect x="1472" y="382" width="1" height="1"/>
<rect x="1547" y="382" width="1" height="1"/>
<rect x="1585" y="382" width="1" height="1"/>
<rect x="1623" y="382" width="1" height="1"/>
<rect x="1660" y="382" width="1" height="1"/>
<rect x="1736" y="382" width="1" height="1"/>
<rect x="1773" y="382" width="1" height="1"/>
<rect x="40" y="615" width="1" height="1"/>
<rect x="78" y="615" width="1" height="1"/>
<rect x="116" y="615" width="1" height="1"/>
<rect x="153" y="615" width="1" height="1"/>
<rect x="229" y="615" width="1" height="1"/>
<rect x="266" y="615" width="1" height="1"/>
<rect x="304" y="615" width="1" height="1"/>
<rect x="342" y="615" width="1" height="1"/>
<rect x="417" y="615" width="1" height="1"/>
<rect x="455" y="615" width="1" height="1"/>
<rect x="492" y="615" width="1" height="1"/>
<rect x="530" y="615" width="1" height="1"/>
<rect x="605" y="615" width="1" height="1"/>
<rect x="643" y="615" width="1" height="1"/>
<rect x="681" y="615" width="1" height="1"/>
<rect x="718" y="615" width="1" height="1"/>
<rect x="794" y="615" width="1" height="1"/>
<rect x="831" y="615" width="1" height="1"/>
<rect x="869" y="615" width="1" height="1"/>
<rect x="907" y="615" width="1" height="1"/>
<rect x="982" y="615" width="1" height="1"/>
<rect x="1020" y="615" width="1" height="1"/>
<rect x="1058" y="615" width="1" height="1"/>
<rect x="1095" y="615" width="1" height="1"/>
<rect x="1171" y="615" width="1" height="1"/>
<rect x="1208" y="615" width="1" height="1"/>
<rect x="1246" y="615" width="1" height="1"/>
<rect x="1284" y="615" width="1" height="1"/>
<rect x="1359" y="615" width="1" height="1"/>
<rect x="1397" y="615" width="1" height="1"/>
<rect x="1434" y="615" width="1" height="1"/>
<rect x="1472" y="615" width="1" height="1"/>
<rect x="1547" y="615" width="1" height="1"/>
<rect x="1585" y="615" width="1" height="1"/>
<rect x="1623" y="615" width="1" height="1"/>
<rect x="1660" y="615" width="1" height="1"/>
<rect x="1736" y="615" width="1" height="1"/>
<rect x="1773" y="615" width="1" height="1"/>
<rect x="40" y="732" width="1" height="1"/>
<rect x="78" y="732" width="1" height="1"/>
<rect x="116" y="732" width="1" height="1"/>
<rect x="153" y="732" width="1" height="1"/>
<rect x="229" y="732" width="1" height="1"/>
<rect x="266" y="732" width="1" height="1"/>
<rect x="304" y="732" width="1" height="1"/>
<rect x="342" y="732" width="1" height="1"/>
<rect x="417" y="732" width="1" height="1"/>
<rect x="455" y="732" width="1" height="1"/>
<rect x="492" y="732" width="1" height="1"/>
<rect x="530" y="732" width="1" height="1"/>
<rect x="605" y="732" width="1" height="1"/>
<rect x="643" y="732" width="1" height="1"/>
<rect x="681" y="732" width="1" height="1"/>
<rect x="718" y="732" width="1" height="1"/>
<rect x="794" y="732" width="1" height="1"/>
<rect x="831" y="732" width="1" height="1"/>
<rect x="869" y="732" width="1" height="1"/>
<rect x="907" y="732" width="1" height="1"/>
<rect x="982" y="732" width="1" height="1"/>
<rect x="1020" y="732" width="1" height="1"/>
<rect x="1058" y="732" width="1" height="1"/>
<rect x="1095" y="732" width="1" height="1"/>
<rect x="1171" y="732" width="1" height="1"/>
<rect x="1208" y="732" width="1" height="1"/>
<rect x="1246" y="732" width="1" height="1"/>
<rect x="1284" y="732" width="1" height="1"/>
<rect x="1359" y="732" width="1" height="1"/>
<rect x="1397" y="732" width="1" height="1"/>
<rect x="1434" y="732" width="1" height="1"/>
<rect x="1472" y="732" width="1" height="1"/>
<rect x="1547" y="732" width="1" height="1"/>
<rect x="1585" y="732" width="1" height="1"/>
<rect x="1623" y="732" width="1" height="1"/>
<rect x="1660" y="732" width="1" height="1"/>
<rect x="1736" y="732" width="1" height="1"/>
<rect x="1773" y="732" width="1" height="1"/>
<rect x="40" y="848" width="1" height="1"/>
<rect x="78" y="848" width="1" height="1"/>
<rect x="116" y="848" width="1" height="1"/>
<rect x="153" y="848" width="1" height="1"/>
<rect x="229" y="848" width="1" height="1"/>
<rect x="266" y="848" width="1" height="1"/>
<rect x="304" y="848" width="1" height="1"/>
<rect x="342" y="848" width="1" height="1"/>
<rect x="417" y="848" width="1" height="1"/>
<rect x="455" y="848" width="1" height="1"/>
<rect x="492" y="848" width="1" height="1"/>
<rect x="530" y="848" width="1" height="1"/>
<rect x="605" y="848" width="1" height="1"/>
<rect x="643" y="848" width="1" height="1"/>
<rect x="681" y="848" width="1" height="1"/>
<rect x="718" y="848" width="1" height="1"/>
<rect x="794" y="848" width="1" height="1"/>
<rect x="831" y="848" width="1" height="1"/>
<rect x="869" y="848" width="1" height="1"/>
<rect x="907" y="848" width="1" height="1"/>
<rect x="982" y="848" width="1" height="1"/>
<rect x="1020" y="848" width="1" height="1"/>
<rect x="1058" y="848" width="1" height="1"/>
<rect x="1095" y="848" width="1" height="1"/>
<rect x="1171" y="848" width="1" height="1"/>
<rect x="1208" y="848" width="1" height="1"/>
<rect x="1246" y="848" width="1" height="1"/>
<rect x="1284" y="848" width="1" height="1"/>
<rect x="1359" y="848" width="1" height="1"/>
<rect x="1397" y="848" width="1" height="1"/>
<rect x="1434" y="848" width="1" height="1"/>
<rect x="1472" y="848" width="1" height="1"/>
<rect x="1547" y="848" width="1" height="1"/>
<rect x="1585" y="848" width="1" height="1"/>
<rect x="1623" y="848" width="1" height="1"/>
<rect x="1660" y="848" width="1" height="1"/>
<rect x="1736" y="848" width="1" height="1"/>
<rect x="1773" y="848" width="1" height="1"/>
<rect x="40" y="33" width="1" height="1"/>
<rect x="40" y="35" width="1" height="1"/>
<rect x="40" y="964" width="1" height="1"/>
<rect x="40" y="962" width="1" height="1"/>
<rect x="78" y="33" width="1" height="1"/>
<rect x="78" y="35" width="1" height="1"/>
<rect x="78" y="964" width="1" height="1"/>
<rect x="78" y="962" width="1" height="1"/>
<rect x="116" y="33" width="1" height="1"/>
<rect x="116" y="35" width="1" height="1"/>
<rect x="116" y="964" width="1" height="1"/>
<rect x="116" y="962" width="1" height="1"/>
<rect x="153" y="33" width="1" height="1"/>
<rect x="153" y="35" width="1" height="1"/>
<rect x="153" y="964" width="1" height="1"/>
<rect x="153" y="962" width="1" height="1"/>
<rect x="191" y="33" width="1" height="1"/>
<rect x="191" y="35" width="1" height="1"/>
<rect x="191" y="964" width="1" height="1"/>
<rect x="191" y="962" width="1" height="1"/>
<rect x="229" y="33" width="1" height="1"/>
<rect x="229" y="35" width="1" height="1"/>
<rect x="229" y="964" width="1" height="1"/>
<rect x="229" y="962" width="1" height="1"/>
<rect x="266" y="33" width="1" height="1"/>
<rect x="266" y="35" width="1" height="1"/>
<rect x="266" y="964" width="1" height="1"/>
<rect x="266" y="962" width="1" height="1"/>
<rect x="304" y="33" width="1" height="1"/>
<rect x="304" y="35" width="1" height="1"/>
<rect x="304" y="964" width="1" height="1"/>
<rect x="304" y="962" width="1" height="1"/>
<rect x="342" y="33" width="1" height="1"/>
<rect x="342" y="35" width="1" height="1"/>
<rect x="342" y="964" width="1" height="1"/>
<rect x="342" y="962" width="1" height="1"/>
<rect x="379" y="33" width="1" height="1"/>
<rect x="379" y="35" width="1" height="1"/>
<rect x="379" y="964" width="1" height="1"/>
<rect x="379" y="962" width="1" height="1"/>
<rect x="417" y="33" width="1" height="1"/>
<rect x="417" y="35" width="1" height="1"/>
<rect x="417" y="964" width="1" height="1"/>
<rect x="417" y="962" width="1" height="1"/>
<rect x="455" y="33" width="1" height="1"/>
<rect x="455" y="35" width="1" height="1"/>
<rect x="455" y="964" width="1" height="1"/>
<rect x="455" y="962" width="1" height="1"/>
<rect x="492" y="33" width="1" height="1"/>
<rect x="492" y="35" width="1" height="1"/>
<rect x="492" y="964" width="1" height="1"/>
<rect x="492" y="962" width="1" height="1"/>
<rect x="530" y="33" width="1" height="1"/>
<rect x="530" y="35" width="1" height="1"/>
<rect x="530" y="964" width="1" height="1"/>
<rect x="530" y="962" width="1" height="1"/>
<rect x="568" y="33" width="1" height="1"/>
<rect x="568" y="35" width="1" height="1"/>
<rect x="568" y="964" width="1" height="1"/>
<rect x="568" y="962" width="1" height="1"/>
<rect x="605" y="33" width="1" height="1"/>
<rect x="605" y="35" width="1" height="1"/>
<rect x="605" y="964" width="1" height="1"/>
<rect x="605" y="962" width="1" height="1"/>
<rect x="643" y="33" width="1" height="1"/>
<rect x="643" y="35" width="1" height="1"/>
<rect x="643" y="964" width="1" height="1"/>
<rect x="643" y="962" width="1" height="1"/>
<rect x="681" y="33" width="1" height="1"/>
<rect x="681" y="35" width="1" height="1"/>
<rect x="681" y="964" width="1" height="1"/>
<rect x="681" y="962" width="1" height="1"/>
<rect x="718" y="33" width="1" height="1"/>
<rect x="718" y="35" width="1" height="1"/>
<rect x="718" y="964" width="1" height="1"/>
<rect x="718" y="962" width="1" height="1"/>
<rect x="756" y="33" width="1" height="1"/>
<rect x="756" y="35" width="1" height="1"/>
<rect x="756" y="964" width="1" height="1"/>
<rect x="756" y="962" width="1" height="1"/>
<rect x="794" y="33" width="1" height="1"/>
<rect x="794" y="35" width="1" height="1"/>
<rect x="794" y="964" width="1" height="1"/>
<rect x="794" y="962" width="1" height="1"/>
<rect x="831" y="33" width="1" height="1"/>
<rect x="831" y="35" width="1" height="1"/>
<rect x="831" y="964" width="1" height="1"/>
<rect x="831" y="962" width="1" height="1"/>
<rect x="869" y="33" width="1" height="1"/>
<rect x="869" y="35" width="1" height="1"/>
<rect x="869" y="964" width="1" height="1"/>
<rect x="869" y="962" width="1" height="1"/>
<rect x="907" y="33" width="1" height="1"/>
<rect x="907" y="35" width="1" height="1"/>
<rect x="907" y="964" width="1" height="1"/>
<rect x="907" y="962" width="1" height="1"/>
<rect x="944" y="33" width="1" height="1"/>
<rect x="944" y="35" width="1" height="1"/>
<rect x="944" y="964" width="1" height="1"/>
<rect x="944" y="962" width="1" height="1"/>
<rect x="982" y="33" width="1" height="1"/>
<rect x="982" y="35" width="1" height="1"/>
<rect x="982" y="964" width="1" height="1"/>
<rect x="982" y="962" width="1" height="1"/>
<rect x="1020" y="33" width="1" height="1"/>
<rect x="1020" y="35" width="1" height="1"/>
<rect x="1020" y="964" width="1" height="1"/>
<rect x="1020" y="962" width="1" height="1"/>
<rect x="1058" y="33" width="1" height="1"/>
<rect x="1058" y="35" width="1" height="1"/>
<rect x="1058" y="964" width="1" height="1"/>
<rect x="1058" y="962" width="1" height="1"/>
<rect x="1095" y="33" width="1" height="1"/>
<rect x="1095" y="35" width="1" height="1"/>
<rect x="1095" y="964" width="1" height="1"/>
<rect x="1095" y="962" width="1" height="1"/>
<rect x="1133" y="33" width="1" height="1"/>
<rect x="1133" y="35" width="1" height="1"/>
<rect x="1133" y="964" width="1" height="1"/>
<rect x="1133" y="962" width="1" height="1"/>
<rect x="1171" y="33" width="1" height="1"/>
<rect x="1171" y="35" width="1" height="1"/>
<rect x="1171" y="964" width="1" height="1"/>
<rect x="1171" y="962" width="1" height="1"/>
<rect x="1208" y="33" width="1" height="1"/>
<rect x="1208" y="35" width="1" height="1"/>
<rect x="1208" y="964" width="1" height="1"/>
<rect x="1208" y="962" width="1" height="1"/>
<rect x="1246" y="33" width="1" height="1"/>
<rect x="1246" y="35" width="1" height="1"/>
<rect x="1246" y="964" width="1" height="1"/>
<rect x="1246" y="962" width="1" height="1"/>
<rect x="1284" y="33" width="1" height="1"/>
<rect x="1284" y="35" width="1" height="1"/>
<rect x="1284" y="964" width="1" height="1"/>
<rect x="1284" y="962" width="1" height="1"/>
<rect x="1321" y="33" width="1" height="1"/>
<rect x="1321" y="35" width="1" height="1"/>
<rect x="1321" y="964" width="1" height="1"/>
<rect x="1321" y="962" width="1" height="1"/>
<rect x="1359" y="33" width="1" height="1"/>
<rect x="1359" y="35" width="1" height="1"/>
<rect x="1359" y="964" width="1" height="1"/>
<rect x="1359" y="962" width="1" height="1"/>
<rect x="1397" y="33" width="1" height="1"/>
<rect x="1397" y="35" width="1" height="1"/>
<rect x="1397" y="964" width="1" height="1"/>
<rect x="1397" y="962" width="1" height="1"/>
<rect x="1434" y="33" width="1" height="1"/>
<rect x="1434" y="35" width="1" height="1"/>
<rect x="1434" y="964" width="1" height="1"/>
<rect x="1434" y="962" width="1" height="1"/>
<rect x="1472" y="33" width="1" height="1"/>
<rect x="1472" y="35" width="1" height="1"/>
<rect x="1472" y="964" width="1" height="1"/>
<rect x="1472" y="962" width="1" height="1"/>
<rect x="1510" y="33" width="1" height="1"/>
<rect x="1510" y="35" width="1" height="1"/>
<rect x="1510" y="964" width="1" height="1"/>
<rect x="1510" y="962" width="1" height="1"/>
<rect x="1547" y="33" width="1" height="1"/>
<rect x="1547" y="35" width="1" height="1"/>
<rect x="1547" y="964" width="1" height="1"/>
<rect x="1547" y="962" width="1" height="1"/>
<rect x="1585" y="33" width="1" height="1"/>
<rect x="1585" y="35" width="1" height="1"/>
<rect x="1585" y="964" width="1" height="1"/>
<rect x="1585" y="962" width="1" height="1"/>
<rect x="1623" y="33" width="1" height="1"/>
<rect x="1623" y="35" width="1" height="1"/>
<rect x="1623" y="964" width="1" height="1"/>
<rect x="1623" y="962" width="1" height="1"/>
<rect x="1660" y="33" width="1" height="1"/>
<rect x="1660" y="35" width="1" height="1"/>
<rect x="1660" y="964" width="1" height="1"/>
<rect x="1660" y="962" width="1" height="1"/>
<rect x="1698" y="33" width="1" height="1"/>
<rect x="1698" y="35" width="1" height="1"/>
<rect x="1698" y="964" width="1" height="1"/>
<rect x="1698" y="962" width="1" height="1"/>
<rect x="1736" y="33" width="1" height="1"/>
<rect x="1736" y="35" width="1" height="1"/>
<rect x="1736" y="964" width="1" height="1"/>
<rect x="1736" y="962" width="1" height="1"/>
<rect x="1773" y="33" width="1" height="1"/>
<rect x="1773" y="35" width="1" height="1"/>
<rect x="1773" y="964" width="1" height="1"/>
<rect x="1773" y="962" width="1" height="1"/>
<rect x="1811" y="33" width="1" height="1"/>
<rect x="1811" y="35" width="1" height="1"/>
<rect x="1811" y="964" width="1" height="1"/>
<rect x="1811" y="962" width="1" height="1"/>
<rect x="1849" y="33" width="1" height="1"/>
<rect x="1849" y="35" width="1" height="1"/>
<rect x="1849" y="964" width="1" height="1"/>
<rect x="1849" y="962" width="1" height="1"/>
<rect x="3" y="56" width="1" height="1"/>
<rect x="5" y="56" width="1" height="1"/>
<rect x="1886" y="56" width="1" height="1"/>
<rect x="1884" y="56" width="1" height="1"/>
<rect x="3" y="79" width="1" height="1"/>
<rect x="5" y="79" width="1" height="1"/>
<rect x="1886" y="79" width="1" height="1"/>
<rect x="1884" y="79" width="1" height="1"/>
<rect x="3" y="102" width="1" height="1"/>
<rect x="5" y="102" width="1" height="1"/>
<rect x="1886" y="102" width="1" height="1"/>
<rect x="1884" y="102" width="1" height="1"/>
<rect x="3" y="126" width="1" height="1"/>
<rect x="5" y="126" width="1" height="1"/>
<rect x="1886" y="126" width="1" height="1"/>
<rect x="1884" y="126" width="1" height="1"/>
<rect x="3" y="149" width="1" height="1"/>
<rect x="5" y="149" width="1" height="1"/>
<rect x="3" y="172" width="1" height="1"/>
<rect x="5" y="172" width="1" height="1"/>
<rect x="1886" y="172" width="1" height="1"/>
<rect x="1884" y="172" width="1" height="1"/>
<rect x="3" y="196" width="1" height="1"/>
<rect x="5" y="196" width="1" height="1"/>
<rect x="1886" y="196" width="1" height="1"/>
<rect x="1884" y="196" width="1" height="1"/>
<rect x="3" y="219" width="1" height="1"/>
<rect x="5" y="219" width="1" height="1"/>
<rect x="1886" y="219" width="1" height="1"/>
<rect x="1884" y="219" width="1" height="1"/>
<rect x="3" y="242" width="1" height="1"/>
<rect x="5" y="242" width="1" height="1"/>
<rect x="1886" y="242" width="1" height="1"/>
<rect x="1884" y="242" width="1" height="1"/>
<rect x="3" y="266" width="1" height="1"/>
<rect x="5" y="266" width="1" height="1"/>
<rect x="3" y="289" width="1" height="1"/>
<rect x="5" y="289" width="1" height="1"/>
<rect x="1886" y="289" width="1" height="1"/>
<rect x="1884" y="289" width="1" height="1"/>
<rect x="3" y="312" width="1" height="1"/>
<rect x="5" y="312" width="1" height="1"/>
<rect x="1886" y="312" width="1" height="1"/>
<rect x="1884" y="312" width="1" height="1"/>
<rect x="3" y="335" width="1" height="1"/>
<rect x="5" y="335" width="1" height="1"/>
<rect x="1886" y="335" width="1" height="1"/>
<rect x="1884" y="335" width="1" height="1"/>
<rect x="3" y="359" width="1" height="1"/>
<rect x="5" y="359" width="1" height="1"/>
<rect x="1886" y="359" width="1" height="1"/>
<rect x="1884" y="359" width="1" height="1"/>
<rect x="3" y="382" width="1" height="1"/>
<rect x="5" y="382" width="1" height="1"/>
<rect x="3" y="405" width="1" height="1"/>
<rect x="5" y="405" width="1" height="1"/>
<rect x="1886" y="405" width="1" height="1"/>
<rect x="1884" y="405" width="1" height="1"/>
<rect x="3" y="429" width="1" height="1"/>
<rect x="5" y="429" width="1" height="1"/>
<rect x="1886" y="429" width="1" height="1"/>
<rect x="1884" y="429" width="1" height="1"/>
<rect x="3" y="452" width="1" height="1"/>
<rect x="5" y="452" width="1" height="1"/>
<rect x="1886" y="452" width="1" height="1"/>
<rect x="1884" y="452" width="1" height="1"/>
<rect x="3" y="475" width="1" height="1"/>
<rect x="5" y="475" width="1" height="1"/>
<rect x="1886" y="475" width="1" height="1"/>
<rect x="1884" y="475" width="1" height="1"/>
<rect x="3" y="498" width="1" height="1"/>
<rect x="5" y="498" width="1" height="1"/>
<rect x="3" y="522" width="1" height="1"/>
<rect x="5" y="522" width="1" height="1"/>
<rect x="1886" y="522" width="1" height="1"/>
<rect x="1884" y="522" width="1" height="1"/>
<rect x="3" y="545" width="1" height="1"/>
<rect x="5" y="545" width="1" height="1"/>
<rect x="1886" y="545" width="1" height="1"/>
<rect x="1884" y="545" width="1" height="1"/>
<rect x="3" y="568" width="1" height="1"/>
<rect x="5" y="568" width="1" height="1"/>
<rect x="1886" y="568" width="1" height="1"/>
<rect x="1884" y="568" width="1" height="1"/>
<rect x="3" y="592" width="1" height="1"/>
<rect x="5" y="592" width="1" height="1"/>
<rect x="1886" y="592" width="1" height="1"/>
<rect x="1884" y="592" width="1" height="1"/>
<rect x="3" y="615" width="1" height="1"/>
<rect x="5" y="615" width="1" height="1"/>
<rect x="3" y="638" width="1" height="1"/>
<rect x="5" y="638" width="1" height="1"/>
<rect x="1886" y="638" width="1" height="1"/>
<rect x="1884" y="638" width="1" height="1"/>
<rect x="3" y="662" width="1" height="1"/>
<rect x="5" y="662" width="1" height="1"/>
<rect x="1886" y="662" width="1" height="1"/>
<rect x="1884" y="662" width="1" height="1"/>
<rect x="3" y="685" width="1" height="1"/>
<rect x="5" y="685" width="1" height="1"/>
<rect x="1886" y="685" width="1" height="1"/>
<rect x="1884" y="685" width="1" height="1"/>
<rect x="3" y="708" width="1" height="1"/>
<rect x="5" y="708" width="1" height="1"/>
<rect x="1886" y="708" width="1" height="1"/>
<rect x="1884" y="708" width="1" height="1"/>
<rect x="3" y="732" width="1" height="1"/>
<rect x="5" y="732" width="1" height="1"/>
<rect x="3" y="755" width="1" height="1"/>
<rect x="5" y="755" width="1" height="1"/>
<rect x="1886" y="755" width="1" height="1"/>
<rect x="1884" y="755" width="1" height="1"/>
<rect x="3" y="778" width="1" height="1"/>
<rect x="5" y="778" width="1" height="1"/>
<rect x="1886" y="778" width="1" height="1"/>
<rect x="1884" y="778" width="1" height="1"/>
<rect x="3" y="801" width="1" height="1"/>
<rect x="5" y="801" width="1" height="1"/>
<rect x="1886" y="801" width="1" height="1"/>
<rect x="1884" y="801" width="1" height="1"/>
<rect x="3" y="825" width="1" height="1"/>
<rect x="5" y="825" width="1" height="1"/>
<rect x="1886" y="825" width="1" height="1"/>
<rect x="1884" y="825" width="1" height="1"/>
<rect x="3" y="848" width="1" height="1"/>
<rect x="5" y="848" width="1" height="1"/>
<rect x="3" y="871" width="1" height="1"/>
<rect x="5" y="871" width="1" height="1"/>
<rect x="1886" y="871" width="1" height="1"/>
<rect x="1884" y="871" width="1" height="1"/>
<rect x="3" y="895" width="1" height="1"/>
<rect x="5" y="895" width="1" height="1"/>
<rect x="1886" y="895" width="1" height="1"/>
<rect x="1884" y="895" width="1" height="1"/>
<rect x="3" y="918" width="1" height="1"/>
<rect x="5" y="918" width="1" height="1"/>
<rect x="1886" y="918" width="1" height="1"/>
<rect x="1884" y="918" width="1" height="1"/>
<rect x="3" y="941" width="1" height="1"/>
<rect x="5" y="941" width="1" height="1"/>
<rect x="1886" y="941" width="1" height="1"/>
<rect x="1884" y="941" width="1" height="1"/>
</g>
<g fill="#99a2c6" shape-rendering="crispEdges">
<rect x="945" y="33" width="1" height="932"/>
<rect x="3" y="499" width="1793" height="1"/>
<rect x="40" y="496" width="1" height="1"/>
<rect x="40" y="498" width="1" height="1"/>
<rect x="40" y="500" width="1" height="1"/>
<rect x="40" y="502" width="1" height="1"/>
<rect x="78" y="496" width="1" height="1"/>
<rect x="78" y="498" width="1" height="1"/>
<rect x="78" y="500" width="1" height="1"/>
<rect x="78" y="502" width="1" height="1"/>
<rect x="116" y="496" width="1" height="1"/>
<rect x="116" y="498" width="1" height="1"/>
<rect x="116" y="500" width="1" height="1"/>
<rect x="116" y="502" width="1" height="1"/>
<rect x="153" y="496" width="1" height="1"/>
<rect x="153" y="498" width="1" height="1"/>
<rect x="153" y="500" width="1" height="1"/>
<rect x="153" y="502" width="1" height="1"/>
<rect x="191" y="494" width="1" height="1"/>
<rect x="191" y="495" width="1" height="1"/>
<rect x="191" y="496" width="1" height="1"/>
<rect x="191" y="497" width="1" height="1"/>
<rect x="191" y="498" width="1" height="1"/>
<rect x="191" y="500" width="1" height="1"/>
<rect x="191" y="501" width="1" height="1"/>
<rect x="191" y="502" width="1" height="1"/>
<rect x="191" y="503" width="1" height="1"/>
<rect x="191" y="504" width="1" height="1"/>
<rect x="229" y="496" width="1" height="1"/>
<rect x="229" y="498" width="1" height="1"/>
<rect x="229" y="500" width="1" height="1"/>
<rect x="229" y="502" width="1" height="1"/>
<rect x="266" y="496" width="1" height="1"/>
<rect x="266" y="498" width="1" height="1"/>
<rect x="266" y="500" width="1" height="1"/>
<rect x="266" y="502" width="1" height="1"/>
<rect x="304" y="496" width="1" height="1"/>
<rect x="304" y="498" width="1" height="1"/>
<rect x="304" y="500" width="1" height="1"/>
<rect x="304" y="502" width="1" height="1"/>
<rect x="342" y="496" width="1" height="1"/>
<rect x="342" y="498" width="1" height="1"/>
<rect x="342" y="500" width="1" height="1"/>
<rect x="342" y="502" width="1" height="1"/>
<rect x="379" y="494" width="1" height="1"/>
<rect x="379" y="495" width="1" height="1"/>
<rect x="379" y="496" width="1" height="1"/>
<rect x="379" y="497" width="1" height="1"/>
<rect x="379" y="498" width="1" height="1"/>
<rect x="379" y="500" width="1" height="1"/>
<rect x="379" y="501" width="1" height="1"/>
<rect x="379" y="502" width="1" height="1"/>
<rect x="379" y="503" width="1" height="1"/>
<rect x="379" y="504" width="1" height="1"/>
<rect x="417" y="496" width="1" height="1"/>
<rect x="417" y="498" width="1" height="1"/>
<rect x="417" y="500" width="1" height="1"/>
<rect x="417" y="502" width="1" height="1"/>
<rect x="455" y="496" width="1" height="1"/>
<rect x="455" y="498" width="1" height="1"/>
<rect x="455" y="500" width="1" height="1"/>
<rect x="455" y="502" width="1" height="1"/>
<rect x="492" y="496" width="1" height="1"/>
<rect x="492" y="498" width="1" height="1"/>
<rect x="492" y="500" width="1" height="1"/>
<rect x="492" y="502" width="1" height="1"/>
<rect x="530" y="496" width="1" height="1"/>
<rect x="530" y="498" width="1" height="1"/>
<rect x="530" y="500" width="1" height="1"/>
<rect x="530" y="502" width="1" height="1"/>
<rect x="568" y="494" width="1" height="1"/>
<rect x="568" y="495" width="1" height="1"/>
<rect x="568" y="496" width="1" height="1"/>
<rect x="568" y="497" width="1" height="1"/>
<rect x="568" y="498" width="1" height="1"/>
<rect x="568" y="500" width="1" height="1"/>
<rect x="568" y="501" width="1" height="1"/>
<rect x="568" y="502" width="1" height="1"/>
<rect x="568" y="503" width="1" height="1"/>
<rect x="568" y="504" width="1" height="1"/>
<rect x="605" y="496" width="1" height="1"/>
<rect x="605" y="498" width="1" height="1"/>
<rect x="605" y="500" width="1" height="1"/>
<rect x="605" y="502" width="1" height="1"/>
<rect x="643" y="496" width="1" height="1"/>
<rect x="643" y="498" width="1" height="1"/>
<rect x="643" y="500" width="1" height="1"/>
<rect x="643" y="502" width="1" height="1"/>
<rect x="681" y="496" width="1" height="1"/>
<rect x="681" y="498" width="1" height="1"/>
<rect x="681" y="500" width="1" height="1"/>
<rect x="681" y="502" width="1" height="1"/>
<rect x="718" y="496" width="1" height="1"/>
<rect x="718" y="498" width="1" height="1"/>
<rect x="718" y="500" width="1" height="1"/>
<rect x="718" y="502" width="1" height="1"/>
<rect x="756" y="494" width="1" height="1"/>
<rect x="756" y="495" width="1" height="1"/>
<rect x="756" y="496" width="1" height="1"/>
<rect x="756" y="497" width="1" height="1"/>
<rect x="756" y="498" width="1" height="1"/>
<rect x="756" y="500" width="1" height="1"/>
<rect x="756" y="501" width="1" height="1"/>
<rect x="756" y="502" width="1" height="1"/>
<rect x="756" y="503" width="1" height="1"/>
<rect x="756" y="504" width="1" height="1"/>
<rect x="794" y="496" width="1" height="1"/>
<rect x="794" y="498" width="1" height="1"/>
<rect x="794" y="500" width="1" height="1"/>
<rect x="794" y="502" width="1" height="1"/>
<rect x="831" y="496" width="1" height="1"/>
<rect x="831" y="498" width="1" height="1"/>
<rect x="831" y="500" width="1" height="1"/>
<rect x="831" y="502" width="1" height="1"/>
<rect x="869" y="496" width="1" height="1"/>
<rect x="869" y="498" width="1" height="1"/>
<rect x="869" y="500" width="1" height="1"/>
<rect x="869" y="502" width="1" height="1"/>
<rect x="907" y="496" width="1" height="1"/>
<rect x="907" y="498" width="1" height="1"/>
<rect x="907" y="500" width="1" height="1"/>
<rect x="907" y="502" width="1" height="1"/>
<rect x="982" y="496" width="1" height="1"/>
<rect x="982" y="498" width="1" height="1"/>
<rect x="982" y="500" width="1" height="1"/>
<rect x="982" y="502" width="1" height="1"/>
<rect x="1020" y="496" width="1" height="1"/>
<rect x="1020" y="498" width="1" height="1"/>
<rect x="1020" y="500" width="1" height="1"/>
<rect x="1020" y="502" width="1" height="1"/>
<rect x="1058" y="496" width="1" height="1"/>
<rect x="1058" y="498" width="1" height="1"/>
<rect x="1058" y="500" width="1" height="1"/>
<rect x="1058" y="502" width="1" height="1"/>
<rect x="1095" y="496" width="1" height="1"/>
<rect x="1095" y="498" width="1" height="1"/>
<rect x="1095" y="500" width="1" height="1"/>
<rect x="1095" y="502" width="1" height="1"/>
<rect x="1133" y="494" width="1" height="1"/>
<rect x="1133" y="495" width="1" height="1"/>
<rect x="1133" y="496" width="1" height="1"/>
<rect x="1133" y="497" width="1" height="1"/>
<rect x="1133" y="498" width="1" height="1"/>
<rect x="1133" y="500" width="1" height="1"/>
<rect x="1133" y="501" width="1" height="1"/>
<rect x="1133" y="502" width="1" height="1"/>
<rect x="1133" y="503" width="1" height="1"/>
<rect x="1133" y="504" width="1" height="1"/>
<rect x="1171" y="496" width="1" height="1"/>
<rect x="1171" y="498" width="1" height="1"/>
<rect x="1171" y="500" width="1" height="1"/>
<rect x="1171" y="502" width="1" height="1"/>
<rect x="1208" y="496" width="1" height="1"/>
<rect x="1208" y="498" width="1" height="1"/>
<rect x="1208" y="500" width="1" height="1"/>
<rect x="1208" y="502" width="1" height="1"/>
<rect x="1246" y="496" width="1" height="1"/>
<rect x="1246" y="498" width="1" height="1"/>
<rect x="1246" y="500" width="1" height="1"/>
<rect x="1246" y="502" width="1" height="1"/>
<rect x="1284" y="496" width="1" height="1"/>
<rect x="1284" y="498" width="1" height="1"/>
<rect x="1284" y="500" width="1" height="1"/>
<rect x="1284" y="502" width="1" height="1"/>
<rect x="1321" y="494" width="1" height="1"/>
<rect x="1321" y="495" width="1" height="1"/>
<rect x="1321" y="496" width="1" height="1"/>
<rect x="1321" y="497" width="1" height="1"/>
<rect x="1321" y="498" width="1" height="1"/>
<rect x="1321" y="500" width="1" height="1"/>
<rect x="1321" y="501" width="1" height="1"/>
<rect x="1321" y="502" width="1" height="1"/>
<rect x="1321" y="503" width="1" height="1"/>
<rect x="1321" y="504" width="1" height="1"/>
<rect x="1359" y="496" width="1" height="1"/>
<rect x="1359" y="498" width="1" height="1"/>
<rect x="1359" y="500" width="1" height="1"/>
<rect x="1359" y="502" width="1" height="1"/>
<rect x="1397" y="496" width="1" height="1"/>
<rect x="1397" y="498" width="1" height="1"/>
<rect x="1397" y="500" width="1" height="1"/>
<rect x="1397" y="502" width="1" height="1"/>
<rect x="1434" y="496" width="1" height="1"/>
<rect x="1434" y="498" width="1" height="1"/>
<rect x="1434" y="500" width="1" height="1"/>
<rect x="1434" y="502" width="1" height="1"/>
<rect x="1472" y="496" width="1" height="1"/>
<rect x="1472" y="498" width="1" height="1"/>
<rect x="1472" y="500" width="1" height="1"/>
<rect x="1472" y="502" width="1" height="1"/>
<rect x="1510" y="494" width="1" height="1"/>
<rect x="1510" y="495" width="1" height="1"/>
<rect x="1510" y="496" width="1" height="1"/>
<rect x="1510" y="497" width="1" height="1"/>
<rect x="1510" y="498" width="1" height="1"/>
<rect x="1510" y="500" width="1" height="1"/>
<rect x="1510" y="501" width="1" height="1"/>
<rect x="1510" y="502" width="1" height="1"/>
<rect x="1510" y="503" width="1" height="1"/>
<rect x="1510" y="504" width="1" height="1"/>
<rect x="1547" y="496" width="1" height="1"/>
<rect x="1547" y="498" width="1" height="1"/>
<rect x="1547" y="500" width="1" height="1"/>
<rect x="1547" y="502" width="1" height="1"/>
<rect x="1585" y="496" width="1" height="1"/>
<rect x="1585" y="498" width="1" height="1"/>
<rect x="1585" y="500" width="1" height="1"/>
<rect x="1585" y="502" width="1" height="1"/>
<rect x="1623" y="496" width="1" height="1"/>
<rect x="1623" y="498" width="1" height="1"/>
<rect x="1623" y="500" width="1" height="1"/>
<rect x="1623" y="502" width="1" height="1"/>
<rect x="1660" y="496" width="1" height="1"/>
<rect x="1660" y="498" width="1" height="1"/>
<rect x="1660" y="500" width="1" height="1"/>
<rect x="1660" y="502" width="1" height="1"/>
<rect x="1698" y="494" width="1" height="1"/>
<rect x="1698" y="495" width="1" height="1"/>
<rect x="1698" y="496" width="1" height="1"/>
<rect x="1698" y="497" width="1" height="1"/>
<rect x="1698" y="498" width="1" height="1"/>
<rect x="1698" y="500" width="1" height="1"/>
<rect x="1698" y="501" width="1" height="1"/>
<rect x="1698" y="502" width="1" height="1"/>
<rect x="1698" y="503" width="1" height="1"/>
<rect x="1698" y="504" width="1" height="1"/>
<rect x="1736" y="496" width="1" height="1"/>
<rect x="1736" y="498" width="1" height="1"/>
<rect x="1736" y="500" width="1" height="1"/>
<rect x="1736" y="502" width="1" height="1"/>
<rect x="1773" y="496" width="1" height="1"/>
<rect x="1773" y="498" width="1" height="1"/>
<rect x="1773" y="500" width="1" height="1"/>
<rect x="1773" y="502" width="1" height="1"/>
<rect x="942" y="56" width="1" height="1"/>
<rect x="944" y="56" width="1" height="1"/>
<rect x="946" y="56" width="1" height="1"/>
<rect x="948" y="56" width="1" height="1"/>
<rect x="942" y="79" width="1" height="1"/>
<rect x="944" y="79" width="1" height="1"/>
<rect x="946" y="79" width="1" height="1"/>
<rect x="948" y="79" width="1" height="1"/>
<rect x="942" y="102" width="1" height="1"/>
<rect x="944" y="102" width="1" height="1"/>
<rect x="946" y="102" width="1" height="1"/>
<rect x="948" y="102" width="1" height="1"/>
<rect x="942" y="126" width="1" height="1"/>
<rect x="944" y="126" width="1" height="1"/>
<rect x="946" y="126" width="1" height="1"/>
<rect x="948" y="126" width="1" height="1"/>
<rect x="940" y="149" width="1" height="1"/>
<rect x="941" y="149" width="1" height="1"/>
<rect x="942" y="149" width="1" height="1"/>
<rect x="943" y="149" width="1" height="1"/>
<rect x="944" y="149" width="1" height="1"/>
<rect x="946" y="149" width="1" height="1"/>
<rect x="947" y="149" width="1" height="1"/>
<rect x="948" y="149" width="1" height="1"/>
<rect x="949" y="149" width="1" height="1"/>
<rect x="950" y="149" width="1" height="1"/>
<rect x="942" y="172" width="1" height="1"/>
<rect x="944" y="172" width="1" height="1"/>
<rect x="946" y="172" width="1" height="1"/>
<rect x="948" y="172" width="1" height="1"/>
<rect x="942" y="196" width="1" height="1"/>
<rect x="944" y="196" width="1" height="1"/>
<rect x="946" y="196" width="1" height="1"/>
<rect x="948" y="196" width="1" height="1"/>
<rect x="942" y="219" width="1" height="1"/>
<rect x="944" y="219" width="1" height="1"/>
<rect x="946" y="219" width="1" height="1"/>
<rect x="948" y="219" width="1" height="1"/>
<rect x="942" y="242" width="1" height="1"/>
<rect x="944" y="242" width="1" height="1"/>
<rect x="946" y="242" width="1" height="1"/>
<rect x="948" y="242" width="1" height="1"/>
<rect x="940" y="266" width="1" height="1"/>
<rect x="941" y="266" width="1" height="1"/>
<rect x="942" y="266" width="1" height="1"/>
<rect x="943" y="266" width="1" height="1"/>
<rect x="944" y="266" width="1" height="1"/>
<rect x="946" y="266" width="1" height="1"/>
<rect x="947" y="266" width="1" height="1"/>
<rect x="948" y="266" width="1" height="1"/>
<rect x="949" y="266" width="1" height="1"/>
<rect x="950" y="266" width="1" height="1"/>
<rect x="942" y="289" width="1" height="1"/>
<rect x="944" y="289" width="1" height="1"/>
<rect x="946" y="289" width="1" height="1"/>
<rect x="948" y="289" width="1" height="1"/>
<rect x="942" y="312" width="1" height="1"/>
<rect x="944" y="312" width="1" height="1"/>
<rect x="946" y="312" width="1" height="1"/>
<rect x="948" y="312" width="1" height="1"/>
<rect x="942" y="335" width="1" height="1"/>
<rect x="944" y="335" width="1" height="1"/>
<rect x="946" y="335" width="1" height="1"/>
<rect x="948" y="335" width="1" height="1"/>
<rect x="942" y="359" width="1" height="1"/>
<rect x="944" y="359" width="1" height="1"/>
<rect x="946" y="359" width="1" height="1"/>
<rect x="948" y="359" width="1" height="1"/>
<rect x="940" y="382" width="1" height="1"/>
<rect x="941" y="382" width="1" height="1"/>
<rect x="942" y="382" width="1" height="1"/>
<rect x="943" y="382" width="1" height="1"/>
<rect x="944" y="382" width="1" height="1"/>
<rect x="946" y="382" width="1" height="1"/>
<rect x="947" y="382" width="1" height="1"/>
<rect x="948" y="382" width="1" height="1"/>
<rect x="949" y="382" width="1" height="1"/>
<rect x="950" y="382" width="1" height="1"/>
<rect x="942" y="405" width="1" height="1"/>
<rect x="944" y="405" width="1" height="1"/>
<rect x="946" y="405" width="1" height="1"/>
<rect x="948" y="405" width="1" height="1"/>
<rect x="942" y="429" width="1" height="1"/>
<rect x="944" y="429" width="1" height="1"/>
<rect x="946" y="429" width="1" height="1"/>
<rect x="948" y="429" width="1" height="1"/>
<rect x="942" y="452" width="1" height="1"/>
<rect x="944" y="452" width="1" height="1"/>
<rect x="946" y="452" width="1" height="1"/>
<rect x="948" y="452" width="1" height="1"/>
<rect x="942" y="475" width="1" height="1"/>
<rect x="944" y="475" width="1" height="1"/>
<rect x="946" y="475" width="1" height="1"/>
<rect x="948" y="475" width="1" height="1"/>
<rect x="942" y="522" width="1" height="1"/>
<rect x="944" y="522" width="1" height="1"/>
<rect x="946" y="522" width="1" height="1"/>
<rect x="948" y="522" width="1" height="1"/>
<rect x="942" y="545" width="1" height="1"/>
<rect x="944" y="545" width="1" height="1"/>
<rect x="946" y="545" width="1" height="1"/>
<rect x="948" y="545" width="1" height="1"/>
<rect x="942" y="568" width="1" height="1"/>
<rect x="944" y="568" width="1" height="1"/>
<rect x="946" y="568" width="1" height="1"/>
<rect x="948" y="568" width="1" height="1"/>
<rect x="942" y="592" width="1" height="1"/>
<rect x="944" y="592" width="1" height="1"/>
<rect x="946" y="592" width="1" height="1"/>
<rect x="948" y="592" width="1" height="1"/>
<rect x="940" y="615" width="1" height="1"/>
<rect x="941" y="615" width="1" height="1"/>
<rect x="942" y="615" width="1" height="1"/>
<rect x="943" y="615" width="1" height="1"/>
<rect x="944" y="615" width="1" height="1"/>
<rect x="946" y="615" width="1" height="1"/>
<rect x="947" y="615" width="1" height="1"/>
<rect x="948" y="615" width="1" height="1"/>
<rect x="949" y="615" width="1" height="1"/>
<rect x="950" y="615" width="1" height="1"/>
<rect x="942" y="638" width="1" height="1"/>
<rect x="944" y="638" width="1" height="1"/>
<rect x="946" y="638" width="1" height="1"/>
<rect x="948" y="638" width="1" height="1"/>
<rect x="942" y="662" width="1" height="1"/>
<rect x="944" y="662" width="1" height="1"/>
<rect x="946" y="662" width="1" height="1"/>
<rect x="948" y="662" width="1" height="1"/>
<rect x="942" y="685" width="1" height="1"/>
<rect x="944" y="685" width="1" height="1"/>
<rect x="946" y="685" width="1" height="1"/>
<rect x="948" y="685" width="1" height="1"/>
<rect x="942" y="708" width="1" height="1"/>
<rect x="944" y="708" width="1" height="1"/>
<rect x="946" y="708" width="1" height="1"/>
<rect x="948" y="708" width="1" height="1"/>
<rect x="940" y="732" width="1" height="1"/>
<rect x="941" y="732" width="1" height="1"/>
<rect x="942" y="732" width="1" height="1"/>
<rect x="943" y="732" width="1" height="1"/>
<rect x="944" y="732" width="1" height="1"/>
<rect x="946" y="732" width="1" height="1"/>
<rect x="947" y="732" width="1" height="1"/>
<rect x="948" y="732" width="1" height="1"/>
<rect x="949" y="732" width="1" height="1"/>
<rect x="950" y="732" width="1" height="1"/>
<rect x="942" y="755" width="1" height="1"/>
<rect x="944" y="755" width="1" height="1"/>
<rect x="946" y="755" width="1" height="1"/>
<rect x="948" y="755" width="1" height="1"/>
<rect x="942" y="778" width="1" height="1"/>
<rect x="944" y="778" width="1" height="1"/>
<rect x="946" y="778" width="1" height="1"/>
<rect x="948" y="778" width="1" height="1"/>
<rect x="942" y="801" width="1" height="1"/>
<rect x="944" y="801" width="1" height="1"/>
<rect x="946" y="801" width="1" height="1"/>
<rect x="948" y="801" width="1" height="1"/>
<rect x="942" y="825" width="1" height="1"/>
<rect x="944" y="825" width="1" height="1"/>
<rect x="946" y="825" width="1" height="1"/>
<rect x="948" y="825" width="1" height="1"/>
<rect x="940" y="848" width="1" height="1"/>
<rect x="941" y="848" width="1" height="1"/>
<rect x="942" y="848" width="1" height="1"/>
<rect x="943" y="848" width="1" height="1"/>
<rect x="944" y="848" width="1" height="1"/>
<rect x="946" y="848" width="1" height="1"/>
<rect x="947" y="848" width="1" height="1"/>
<rect x="948" y="848" width="1" height="1"/>
<rect x="949" y="848" width="1" height="1"/>
<rect x="950" y="848" width="1" height="1"/>
<rect x="942" y="871" width="1" height="1"/>
<rect x="944" y="871" width="1" height="1"/>
<rect x="946" y="871" width="1" height="1"/>
<rect x="948" y="871" width="1" height="1"/>
<rect x="942" y="895" width="1" height="1"/>
<rect x="944" y="895" width="1" height="1"/>
<rect x="946" y="895" width="1" height="1"/>
<rect x="948" y="895" width="1" height="1"/>
<rect x="942" y="918" width="1" height="1"/>
<rect x="944" y="918" width="1" height="1"/>
<rect x="946" y="918" width="1" height="1"/>
<rect x="948" y="918" width="1" height="1"/>
<rect x="942" y="941" width="1" height="1"/>
<rect x="944" y="941" width="1" height="1"/>
<rect x="946" y="941" width="1" height="1"/>
<rect x="948" y="941" width="1" height="1"/>
</g>
<text transform="translate(1827.80,157.30) scale(0.7318,1)" font-size="20.5" fill="#8cc400" letter-spacing="0.000">1.23</text>
<text transform="translate(1866.30,157.30) scale(0.9435,1)" font-size="20.5" fill="#8cc400" letter-spacing="0.000">A</text>
<text transform="translate(1813.00,273.80) scale(0.8507,1)" font-size="20.5" fill="#8cc400" letter-spacing="0.000">730</text>
<text transform="translate(1850.70,273.80) scale(0.9200,1)" font-size="20.5" fill="#8cc400" letter-spacing="0.665">mA</text>
<text transform="translate(1812.80,390.30) scale(0.8419,1)" font-size="20.5" fill="#8cc400" letter-spacing="0.000">230</text>
<text transform="translate(1850.40,390.30) scale(0.9200,1)" font-size="20.5" fill="#8cc400" letter-spacing="0.556">mA</text>
<text transform="translate(1805.00,506.80) scale(0.8651,1)" font-size="20.5" fill="#8cc400" letter-spacing="0.000">-270</text>
<text transform="translate(1850.40,506.80) scale(0.9200,1)" font-size="20.5" fill="#8cc400" letter-spacing="0.556">mA</text>
<text transform="translate(1805.00,623.30) scale(0.8651,1)" font-size="20.5" fill="#8cc400" letter-spacing="0.000">-770</text>
<text transform="translate(1850.40,623.30) scale(0.9200,1)" font-size="20.5" fill="#8cc400" letter-spacing="0.556">mA</text>
<text transform="translate(1821.10,739.80) scale(0.7618,1)" font-size="20.5" fill="#8cc400" letter-spacing="0.000">-1.27</text>
<text transform="translate(1866.50,739.80) scale(0.9216,1)" font-size="20.5" fill="#8cc400" letter-spacing="0.000">A</text>
<text transform="translate(1821.10,856.30) scale(0.7618,1)" font-size="20.5" fill="#8cc400" letter-spacing="0.000">-1.77</text>
<text transform="translate(1866.50,856.30) scale(0.9216,1)" font-size="20.5" fill="#8cc400" letter-spacing="0.000">A</text>
<rect x="1860.3" y="367" width="26.7" height="27" fill="#000"/>
<path d="M1861.5 380.5L1875 367.5V379H1887V382.5H1875V393.5Z" fill="#7aa800"/>
<path d="M1822 45H1872Q1875 45 1875 48V96Q1875 99.5 1872 98L1820.500 48.5Q1819 45 1822 45Z" fill="#353a4d"/>
<circle cx="1863.3" cy="56.7" r="7.4" fill="none" stroke="#9dacd0" stroke-width="3.4"/>
<path d="M1857.6 62.6L1848.3 71.4" stroke="#9dacd0" stroke-width="4.8" stroke-linecap="round"/>
<path d="M6 419H40.6L54.4 435L40.6 451H6Z" fill="#7fac00"/>
<text transform="translate(12.70,442.00) scale(0.8432,1)" font-size="20.5" fill="#000" letter-spacing="0.000" stroke="#000" stroke-width="0.4">C4</text>
<rect x="72.2" y="423.7" width="58.4" height="23.3" fill="#020400"/>
<text transform="translate(75.20,442.00) scale(0.8714,1)" font-size="20.5" fill="#8fc400" letter-spacing="0.000">I_OUT</text>
<path d="M7 644H40.2L53.2 659L40.2 674H7Z" fill="#030300" stroke="#b9ae3a" stroke-width="2"/>
<text transform="translate(12.70,666.00) scale(0.6715,1)" font-size="20.5" fill="#c4b83c" letter-spacing="0.000">C1</text>
<rect x="72.2" y="647" width="79.8" height="23.6" fill="#030300"/>
<text transform="translate(75.20,665.80) scale(0.8496,1)" font-size="20.5" fill="#c4b83c" letter-spacing="0.000">RC_OUT</text>
<path d="M7 860.5H40.2L53.2 875L40.2 889.5H7Z" fill="#000" stroke="#e05585" stroke-width="2"/>
<text transform="translate(12.70,882.00) scale(0.7745,1)" font-size="20.5" fill="#e05585" letter-spacing="0.000">C3</text>
<text transform="translate(75.00,882.00) scale(0.7164,1)" font-size="20.5" fill="#e05585" letter-spacing="0.000">ENC</text>
<path d="M182 35H205L193.5 46.5Z" fill="#f7931e"/>
<path d="M183 50H203.2V72H197L193.5 79.5L190 72H183Z" fill="#211f2b" stroke="#f7931e" stroke-width="2"/>
<text transform="translate(188.60,68.00) scale(0.8097,1)" font-size="19" fill="#f7931e" font-weight="bold" letter-spacing="0.000">T</text>
<path d="M762.5 114.5V126.5L765 124.3L767.8 129.5L770.8 128.6L768.8 123.6L772 122.8Z" fill="#000" stroke="#e6f0fa" stroke-width="1"/>
<text transform="translate(43.60,20.60) scale(0.8899,1)" font-size="20.5" fill="#dde6f4" letter-spacing="0.000">File</text>
<text transform="translate(192.00,20.60) scale(0.9200,1)" font-size="20.5" fill="#dde6f4" letter-spacing="0.541">Edit</text>
<text transform="translate(330.80,20.60) scale(0.9200,1)" font-size="20.5" fill="#dde6f4" letter-spacing="1.576">Utility</text>
<text transform="translate(489.20,20.60) scale(0.9154,1)" font-size="20.5" fill="#dde6f4" letter-spacing="0.000">Help</text>
<path d="M722 6.5H719V22.5H722" fill="none" stroke="#dfeaf8" stroke-width="2"/>
<path d="M1168 6.5H1171V22.5H1168" fill="none" stroke="#dfeaf8" stroke-width="2"/>
<rect x="720" y="14" width="450" height="1" fill="#dfeaf8"/>
<path d="M757 1.5H774.5L765.7 8Z" fill="#f7931e"/>
<path d="M758 10.2H772.4V23.6H768L765.2 28.2L762.4 23.6H758Z" fill="#262633" stroke="#000" stroke-width="2.4"/>
<path d="M758 10.2H772.4V23.6H768L765.2 28.2L762.4 23.6H758Z" fill="#262633" stroke="#f7931e" stroke-width="1.4"/>
<text transform="translate(762.00,20.80) scale(0.9823,1)" font-size="11" fill="#f7931e" font-weight="bold" letter-spacing="0.000">T</text>
<text transform="translate(1756.40,25.30) scale(0.9200,1)" font-size="33" fill="#ffffff" font-weight="bold" letter-spacing="0.027" stroke="#fff" stroke-width="0.8">Tektronix</text>
<path d="M1789.6 25.4L1803.4 7H1809.6L1795.8 25.4Z" fill="#1bc3de"/>
<circle cx="1905.4" cy="495.6" r="3.6" fill="#b5c7ee"/>
<circle cx="1905.4" cy="507.4" r="3.6" fill="#b5c7ee"/>
<circle cx="1905.4" cy="519.2" r="3.6" fill="#b5c7ee"/>
<clipPath id="c5_972"><rect x="5.3" y="972.3" width="133.39999999999998" height="103.10000000000014" rx="6.5"/></clipPath>
<g clip-path="url(#c5_972)"><rect x="5.3" y="972.3" width="133.39999999999998" height="103.10000000000014" fill="#9eafd1"/>
<rect x="5.3" y="972.3" width="133.39999999999998" height="26.200000000000045" fill="#4a4d43"/>
</g>
<rect x="5.8" y="972.8" width="132.39999999999998" height="102.10000000000014" rx="6.5" fill="none" stroke="#6d7278" stroke-width="1"/>
<text transform="translate(13.80,993.20) scale(0.8266,1)" font-size="20.5" fill="#cfc630" letter-spacing="0.000">Ch 1</text>
<text transform="translate(17.60,1018.20) scale(0.9200,1)" font-size="20.5" fill="#000" letter-spacing="1.488" stroke="#000" stroke-width="0.4">2.00 V/div</text>
<g transform="translate(16,1029.5)" fill="none" stroke="#000" stroke-width="1.3">
<path d="M2.2 8.5C2.2 3.8 4.6 1.2 7.2 1.6"/>
<path d="M11.8 1.6C14.6 1.2 16.6 4 16.6 8.4"/>
<circle cx="9.5" cy="3.9" r="2.7"/>
<rect x="14.3" y="8.2" width="4.2" height="5.8" rx="0.8" fill="#e8eef8"/>
<rect x="0.9" y="7.6" width="2.6" height="6.2" rx="1.3" fill="#e8eef8"/>
</g>
<text transform="translate(16.80,1066.50) scale(0.9200,1)" font-size="20.5" fill="#000" letter-spacing="1.002" stroke="#000" stroke-width="0.4">500 MHz</text>
<clipPath id="c146_972"><rect x="146.5" y="972.3" width="133.0" height="103.10000000000014" rx="6.5"/></clipPath>
<g clip-path="url(#c146_972)"><rect x="146.5" y="972.3" width="133.0" height="103.10000000000014" fill="#9eafd1"/>
<rect x="146.5" y="972.3" width="133.0" height="26.200000000000045" fill="#52243a"/>
</g>
<rect x="147.0" y="972.8" width="132.0" height="102.10000000000014" rx="6.5" fill="none" stroke="#6d7278" stroke-width="1"/>
<text transform="translate(155.00,993.20) scale(0.8821,1)" font-size="20.5" fill="#f06496" letter-spacing="0.000">Ch 3</text>
<text transform="translate(158.10,1018.20) scale(0.9200,1)" font-size="20.5" fill="#000" letter-spacing="1.404" stroke="#000" stroke-width="0.4">5.00 V/div</text>
<g transform="translate(157.2,1029.5)" fill="none" stroke="#000" stroke-width="1.3">
<path d="M2.2 8.5C2.2 3.8 4.6 1.2 7.2 1.6"/>
<path d="M11.8 1.6C14.6 1.2 16.6 4 16.6 8.4"/>
<circle cx="9.5" cy="3.9" r="2.7"/>
<rect x="14.3" y="8.2" width="4.2" height="5.8" rx="0.8" fill="#e8eef8"/>
<rect x="0.9" y="7.6" width="2.6" height="6.2" rx="1.3" fill="#e8eef8"/>
</g>
<text transform="translate(158.10,1066.50) scale(0.9200,1)" font-size="20.5" fill="#000" letter-spacing="0.912" stroke="#000" stroke-width="0.4">500 MHz</text>
<clipPath id="c287_972"><rect x="287.3" y="972.3" width="133.5" height="103.10000000000014" rx="6.5"/></clipPath>
<g clip-path="url(#c287_972)"><rect x="287.3" y="972.3" width="133.5" height="103.10000000000014" fill="#9eafd1"/>
<rect x="287.3" y="972.3" width="133.5" height="26.200000000000045" fill="#7fb400"/>
</g>
<rect x="287.8" y="972.8" width="132.5" height="102.10000000000014" rx="6.5" fill="none" stroke="#6d7278" stroke-width="1"/>
<text transform="translate(296.00,993.20) scale(0.9190,1)" font-size="20.5" fill="#000" letter-spacing="0.000" stroke="#000" stroke-width="0.4">Ch 4</text>
<text transform="translate(299.00,1018.20) scale(0.9200,1)" font-size="20.5" fill="#000" letter-spacing="1.770" stroke="#000" stroke-width="0.4">500 mA/div</text>
<text transform="translate(299.80,1042.40) scale(0.8767,1)" font-size="20.5" fill="#000" letter-spacing="0.000" stroke="#000" stroke-width="0.4">1 MΩ</text>
<text transform="translate(299.80,1066.50) scale(0.9082,1)" font-size="20.5" fill="#000" letter-spacing="0.000" stroke="#000" stroke-width="0.4">120 MHz</text>
<text transform="translate(383.00,1062.40) scale(0.6421,1)" font-size="14" fill="#000" letter-spacing="0.000">B</text>
<text transform="translate(389.63,1066.50) scale(0.8930,1)" font-size="12" fill="#000" letter-spacing="0.000">w</text>
<clipPath id="c1105_972"><rect x="1105.9" y="972.3" width="60.19999999999982" height="103.10000000000014" rx="8"/></clipPath>
<g clip-path="url(#c1105_972)"><rect x="1105.9" y="972.3" width="60.19999999999982" height="103.10000000000014" fill="#30354a"/>
</g>
<rect x="1106.4" y="972.8" width="59.19999999999982" height="102.10000000000014" rx="8" fill="none" stroke="#5f6368" stroke-width="1"/>
<rect x="1115" y="984" width="42.2" height="3" fill="#19c1dd"/>
<text transform="translate(1133.40,1030.40) scale(0.8066,1)" font-size="20.5" fill="#e4e8ee" letter-spacing="0.000">2</text>
<clipPath id="c1173_972"><rect x="1173.1" y="972.3" width="59.700000000000045" height="103.10000000000014" rx="8"/></clipPath>
<g clip-path="url(#c1173_972)"><rect x="1173.1" y="972.3" width="59.700000000000045" height="103.10000000000014" fill="#30354a"/>
</g>
<rect x="1173.6" y="972.8" width="58.700000000000045" height="102.10000000000014" rx="8" fill="none" stroke="#5f6368" stroke-width="1"/>
<text transform="translate(1181.00,1006.60) scale(0.9200,1)" font-size="20.5" fill="#e4e8ee" letter-spacing="1.618">Math</text>
<text transform="translate(1188.90,1030.40) scale(0.9200,1)" font-size="20.5" fill="#e4e8ee" letter-spacing="0.606">Ref</text>
<text transform="translate(1190.20,1054.30) scale(0.8153,1)" font-size="20.5" fill="#e4e8ee" letter-spacing="0.000">Bus</text>
<clipPath id="c1245_972"><rect x="1245.3" y="972.3" width="143.5" height="103.10000000000014" rx="6.5"/></clipPath>
<g clip-path="url(#c1245_972)"><rect x="1245.3" y="972.3" width="143.5" height="103.10000000000014" fill="#9eafd1"/>
<rect x="1245.3" y="972.3" width="143.5" height="26.200000000000045" fill="#41506c"/>
</g>
<rect x="1245.8" y="972.8" width="142.5" height="102.10000000000014" rx="6.5" fill="none" stroke="#6d7278" stroke-width="1"/>
<text transform="translate(1253.80,992.90) scale(0.9200,1)" font-size="20.5" fill="#eef2f8" letter-spacing="1.027">Horizontal</text>
<text transform="translate(1257.70,1018.30) scale(0.9200,1)" font-size="20.5" fill="#000" letter-spacing="0.637" stroke="#000" stroke-width="0.4">10.0 ms/div</text>
<text transform="translate(1257.70,1042.60) scale(0.7548,1)" font-size="20.5" fill="#000" letter-spacing="0.000" stroke="#000" stroke-width="0.4">SR:</text>
<text transform="translate(1286.80,1042.60) scale(0.9200,1)" font-size="20.5" fill="#000" letter-spacing="0.420" stroke="#000" stroke-width="0.4">1.00 MS/s</text>
<text transform="translate(1256.90,1066.20) scale(0.7866,1)" font-size="20.5" fill="#000" letter-spacing="0.000" stroke="#000" stroke-width="0.4">RL:</text>
<text transform="translate(1288.60,1066.20) scale(0.9200,1)" font-size="20.5" fill="#000" letter-spacing="0.761" stroke="#000" stroke-width="0.4">100 kpts</text>
<clipPath id="c1401_972"><rect x="1401.3" y="972.3" width="143.4000000000001" height="103.10000000000014" rx="6.5"/></clipPath>
<g clip-path="url(#c1401_972)"><rect x="1401.3" y="972.3" width="143.4000000000001" height="103.10000000000014" fill="#9eafd1"/>
<rect x="1401.3" y="972.3" width="143.4000000000001" height="26.200000000000045" fill="#41506c"/>
</g>
<rect x="1401.8" y="972.8" width="142.4000000000001" height="102.10000000000014" rx="6.5" fill="none" stroke="#6d7278" stroke-width="1"/>
<text transform="translate(1410.50,992.70) scale(0.9200,1)" font-size="20.5" fill="#eef2f8" letter-spacing="0.953">Trigger</text>
<rect x="1500.8" y="976.8" width="33.4" height="18.4" rx="1.5" fill="#7fb400" stroke="#2c3a22" stroke-width="1"/>
<text transform="translate(1510.80,992.70) scale(0.9846,1)" font-size="19" fill="#000" letter-spacing="0.000" stroke="#000" stroke-width="0.4">4</text>
<path d="M1413 1019.7H1420L1429.2 1006H1435" fill="none" stroke="#000" stroke-width="1.6"/>
<text transform="translate(1459.90,1019.00) scale(0.9200,1)" font-size="20.5" fill="#000" letter-spacing="1.610" stroke="#000" stroke-width="0.4">240 mA</text>
<clipPath id="c1557_972"><rect x="1557.5" y="972.3" width="143.29999999999995" height="103.10000000000014" rx="6.5"/></clipPath>
<g clip-path="url(#c1557_972)"><rect x="1557.5" y="972.3" width="143.29999999999995" height="103.10000000000014" fill="#9eafd1"/>
<rect x="1557.5" y="972.3" width="143.29999999999995" height="26.200000000000045" fill="#41506c"/>
</g>
<rect x="1558.0" y="972.8" width="142.29999999999995" height="102.10000000000014" rx="6.5" fill="none" stroke="#6d7278" stroke-width="1"/>
<text transform="translate(1566.90,992.70) scale(0.9200,1)" font-size="20.5" fill="#eef2f8" letter-spacing="1.086">Acquisition</text>
<text transform="translate(1569.40,1018.50) scale(0.9121,1)" font-size="20.5" fill="#000" letter-spacing="0.000" stroke="#000" stroke-width="0.4">Sample</text>
<text transform="translate(1569.40,1042.70) scale(0.9125,1)" font-size="20.5" fill="#000" letter-spacing="0.000" stroke="#000" stroke-width="0.4">Single: 1/1</text>
<clipPath id="c1713_972"><rect x="1713.2" y="972.3" width="59.59999999999991" height="103.10000000000014" rx="8"/></clipPath>
<g clip-path="url(#c1713_972)"><rect x="1713.2" y="972.3" width="59.59999999999991" height="103.10000000000014" fill="#30354a"/>
</g>
<rect x="1713.7" y="972.8" width="58.59999999999991" height="102.10000000000014" rx="8" fill="none" stroke="#5f6368" stroke-width="1"/>
<rect x="1722" y="984" width="42" height="3" fill="#e8781f"/>
<text transform="translate(1734.00,1030.70) scale(0.7211,1)" font-size="20.5" fill="#e4e8ee" letter-spacing="0.000">RF</text>
<clipPath id="c1785_972"><rect x="1785.4" y="972.3" width="129.0999999999999" height="48.10000000000002" rx="7"/></clipPath>
<g clip-path="url(#c1785_972)"><rect x="1785.4" y="972.3" width="129.0999999999999" height="48.10000000000002" fill="#c8383c"/>
</g>
<rect x="1785.9" y="972.8" width="128.0999999999999" height="47.10000000000002" rx="7" fill="none" stroke="#8a4a50" stroke-width="1"/>
<text transform="translate(1814.80,1003.50) scale(0.9200,1)" font-size="20.5" fill="#dcecfa" letter-spacing="0.929">Stopped</text>
<clipPath id="c1785_1027"><rect x="1785.4" y="1027.3" width="129.0999999999999" height="48.100000000000136" rx="7"/></clipPath>
<g clip-path="url(#c1785_1027)"><rect x="1785.4" y="1027.3" width="129.0999999999999" height="48.100000000000136" fill="#9eafd1"/>
</g>
<rect x="1785.9" y="1027.8" width="128.0999999999999" height="47.100000000000136" rx="7" fill="none" stroke="#6d7278" stroke-width="1"/>
<text transform="translate(1799.00,1045.60) scale(0.9200,1)" font-size="20.5" fill="#000" letter-spacing="1.638" stroke="#000" stroke-width="0.4">5 Apr 2024</text>
<text transform="translate(1813.60,1069.70) scale(0.9200,1)" font-size="20.5" fill="#000" letter-spacing="0.277" stroke="#000" stroke-width="0.4">04:55:38</text>
</svg>
</body></html>
